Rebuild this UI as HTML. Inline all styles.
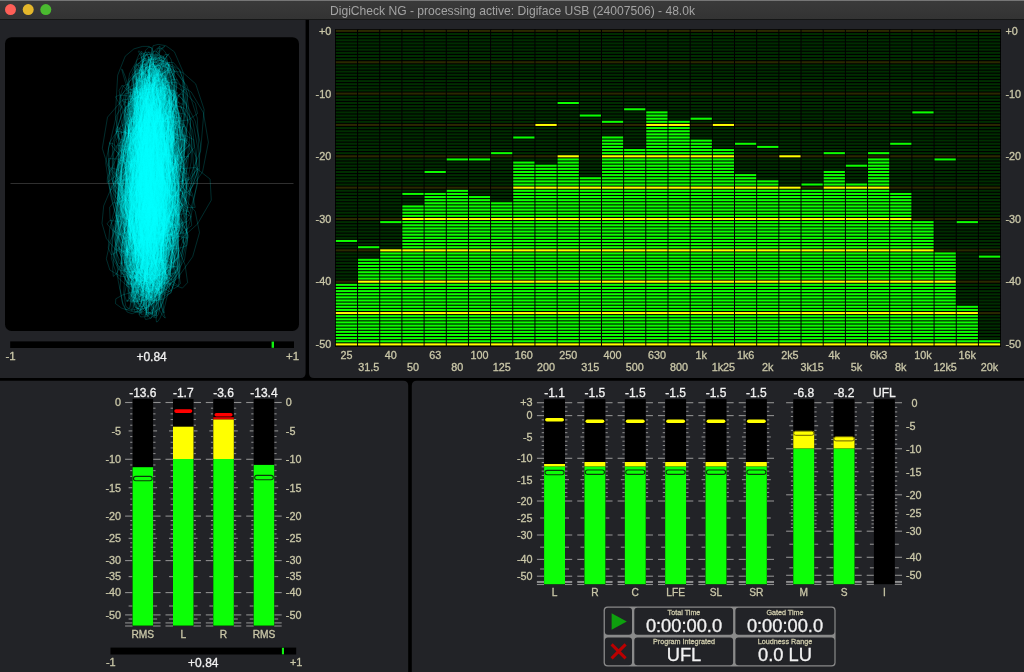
<!DOCTYPE html>
<html><head><meta charset="utf-8"><title>DigiCheck NG</title>
<style>html,body{margin:0;padding:0;background:#000;overflow:hidden;width:1024px;height:672px}svg{display:block;will-change:transform}</style>
</head><body>
<svg width="1024" height="672" viewBox="0 0 1024 672" font-family="Liberation Sans, sans-serif">
<rect x="0" y="0" width="1024" height="672" fill="#000"/>
<path d="M0 19H305.6V372.9Q305.6 377.9 300.6 377.9H0Z" fill="#222327"/>
<path d="M309 19H1024V377.9H314Q309 377.9 309 372.9Z" fill="#222327"/>
<path d="M0 380.8H403.2Q408.2 380.8 408.2 385.8V672H0Z" fill="#222327"/>
<path d="M416.8 380.8H1024V672H411.8V385.8Q411.8 380.8 416.8 380.8Z" fill="#222327"/>
<defs><linearGradient id="tb" x1="0" y1="0" x2="0" y2="1"><stop offset="0" stop-color="#3a3a3a"/><stop offset="1" stop-color="#333333"/></linearGradient></defs>
<rect x="0" y="0" width="1024" height="19.2" fill="url(#tb)"/>
<rect x="0" y="0" width="1024" height="1" fill="#767676"/>
<rect x="0" y="19" width="1024" height="0.9" fill="#151515"/>
<circle cx="10.5" cy="9.6" r="5.5" fill="#fe5f57"/>
<circle cx="28.2" cy="9.6" r="5.5" fill="#e4b72b"/>
<circle cx="45.8" cy="9.6" r="5.5" fill="#4aba2f"/>
<text x="512.5" y="14.7" font-size="12.1" fill="#a3a3a3" text-anchor="middle">DigiCheck NG - processing active: Digiface USB (24007506) - 48.0k</text>
<rect x="5.0" y="37.2" width="294" height="293.8" rx="6.5" fill="#000"/>
<rect x="10.5" y="183" width="283" height="0.9" fill="#353535"/>
<defs><radialGradient id="gg" cx="0.5" cy="0.5" r="0.5"><stop offset="0" stop-color="#00ffff" stop-opacity="0.3"/><stop offset="0.6" stop-color="#00e0e0" stop-opacity="0.15"/><stop offset="1" stop-color="#00c0c0" stop-opacity="0"/></radialGradient></defs>
<ellipse cx="151" cy="190" rx="30" ry="130" fill="url(#gg)"/>
<g fill="none" stroke="#00ffff" stroke-width="0.7" stroke-opacity="0.25" stroke-linejoin="round">
<path d="M129.4 198.6 137.6 145.2 146.7 104.8 151.1 85.3 150.1 81.4 144.0 90.8 133.5 115.7 122.8 155.6 119.5 197.3 125.6 224.6 136.9 232.4"/>
<path d="M136.9 232.4 149.7 221.7 159.5 195.7 161.6 162.9 154.8 136.3 143.1 124.0 130.7 128.3 121.6 150.3 121.0 188.5 130.8 231.1 144.4 263.1"/>
<path d="M144.4 263.1 155.1 280.2 161.0 285.7 161.8 282.1 158.3 270.3 152.2 251.3 147.3 229.8 147.3 213.3 152.9 206.9 161.3 210.6 167.8 219.8"/>
<path d="M167.8 219.8 168.8 228.1 163.8 229.4 154.4 219.4 144.1 195.5 138.1 159.7 140.2 122.4 147.8 95.0 156.1 80.3 161.9 76.2 163.1 81.7"/>
<path d="M163.1 81.7 157.6 99.5 144.1 134.2 126.4 182.9 115.3 229.2 115.0 259.6 122.1 274.1 133.1 276.8 145.2 270.2 155.4 254.4 160.4 230.1"/>
<path d="M160.4 230.1 157.8 201.3 149.4 173.8 140.5 152.1 135.4 136.8 136.0 126.6 141.3 119.2 148.9 113.0 155.7 107.0 159.7 101.2 160.8 96.3"/>
<path d="M160.8 96.3 160.3 93.0 160.3 92.1 162.1 94.1 166.2 99.3 171.4 108.0 175.6 119.4 175.9 132.2 171.0 144.3 161.5 153.7 149.9 159.4"/>
<path d="M149.9 159.4 139.5 161.6 132.7 161.5 130.0 161.2 130.3 162.7 131.5 168.1 132.0 178.6 131.4 194.0 130.6 212.7 131.7 231.4 135.9 246.8"/>
<path d="M135.9 246.8 142.9 256.5 151.8 259.2 160.9 254.0 168.5 239.1 172.3 213.2 170.6 178.3 164.7 142.1 158.7 113.4 155.9 95.8 156.8 88.2"/>
<path d="M156.8 88.2 161.1 89.1 167.4 98.3 173.8 116.8 177.5 143.5 175.6 173.1 168.5 197.6 159.1 212.1 150.1 215.5 142.9 209.7 137.9 198.3"/>
<path d="M137.9 198.3 134.7 186.6 132.8 180.4 131.6 184.2 131.6 200.0 134.3 225.3 140.3 253.1 148.4 275.3 156.9 288.5 164.8 293.4 171.5 290.4"/>
<path d="M171.5 290.4 176.4 277.1 178.2 247.6 174.0 198.8 163.8 143.9 154.5 103.7 149.4 82.9 147.7 75.8 147.8 79.0 148.4 93.8 148.0 125.0"/>
<path d="M148.0 125.0 145.2 173.1 141.2 224.7 138.2 262.7 137.3 283.8 138.4 293.3 141.5 295.6 146.0 292.4 150.8 283.9 155.0 269.8 157.0 250.8"/>
<path d="M157.0 250.8 156.4 229.4 154.2 209.6 152.3 194.4 152.6 184.9 155.7 180.5 160.9 179.8 166.7 180.8 171.5 181.8 174.3 181.3 174.8 178.8"/>
<path d="M174.8 178.8 173.8 174.4 172.2 169.0 170.7 163.8 169.5 160.1 168.1 158.6 166.0 159.5 162.7 161.8 158.8 163.9 155.0 163.7 152.5 159.3"/>
<path d="M152.5 159.3 151.8 149.6 152.5 135.4 153.3 119.1 152.7 104.2 149.9 93.5 145.1 88.4 138.7 89.4 131.9 97.8 126.3 115.2 124.4 142.5"/>
<path d="M124.4 142.5 128.0 175.9 136.1 207.0 144.7 228.9 150.8 239.6 153.2 240.5 152.2 233.9 148.9 223.0 145.4 212.7 144.0 208.1 145.7 212.7"/>
<path d="M145.7 212.7 150.0 226.6 154.8 246.2 157.8 265.5 157.8 280.1 155.1 288.6 150.0 291.6 143.3 289.8 135.5 283.6 127.6 273.9 120.9 262.8"/>
<path d="M120.9 262.8 116.7 253.5 115.9 248.8 118.6 249.0 124.0 251.5 131.2 252.7 139.1 248.6 146.9 235.8 153.3 211.3 156.8 176.6 156.2 140.1"/>
<path d="M156.2 140.1 152.7 112.3 148.6 97.6 145.2 95.3 143.4 105.7 143.9 131.1 146.7 170.7 150.2 213.1 151.6 243.6 150.1 257.3 146.1 255.2"/>
<path d="M146.1 255.2 140.8 237.2 136.6 203.2 137.2 161.0 143.2 125.8 151.7 105.7 160.0 100.0 166.3 106.8 168.6 125.4 164.7 152.8 155.0 180.1"/>
<path d="M155.0 180.1 143.9 196.9 135.5 197.3 132.6 180.1 136.6 148.8 145.1 114.3 153.3 88.2 158.4 73.5 160.5 67.6 160.0 68.3 158.2 75.3"/>
<path d="M158.2 75.3 156.5 89.4 156.3 109.9 158.6 131.4 162.6 146.1 166.2 148.4 166.7 138.4 163.1 120.6 156.7 102.0 150.0 87.9 145.1 80.0"/>
<path d="M145.1 80.0 143.1 78.1 144.2 81.6 148.2 90.8 154.1 105.2 159.8 123.0 162.9 139.8 162.1 151.6 157.9 156.4 152.3 155.0 147.2 150.1"/>
<path d="M147.2 150.1 143.9 145.5 142.7 144.5 143.1 149.6 144.2 162.3 145.4 182.4 146.3 207.5 146.9 232.6 147.4 253.2 147.9 267.3 148.0 274.7"/>
<path d="M148.0 274.7 147.7 276.4 146.5 272.8 144.5 263.9 142.3 249.7 140.8 231.1 141.5 210.7 145.1 192.1 150.7 178.4 156.6 171.6 160.7 172.6"/>
<path d="M160.7 172.6 161.1 181.4 157.1 197.0 149.5 217.4 141.1 238.9 135.3 258.1 133.9 272.8 137.2 282.5 144.2 287.7 153.7 289.2 163.7 287.3"/>
<path d="M163.7 287.3 172.4 282.2 177.8 274.2 178.2 264.1 173.5 253.6 165.2 244.7 156.4 239.0 150.6 236.8 149.9 237.2 154.4 238.4 162.5 238.2"/>
<path d="M162.5 238.2 171.4 234.7 177.8 226.8 178.9 214.2 172.9 198.3 160.6 182.2 145.3 169.9 131.5 164.9 122.4 168.8 120.3 181.9 125.2 201.7"/>
<path d="M125.2 201.7 134.7 223.0 144.2 239.7 150.6 247.8 152.9 244.8 151.5 228.2 148.1 195.9 146.2 152.3 148.3 111.2 153.4 83.6 159.3 69.4"/>
<path d="M159.3 69.4 164.6 64.0 167.8 64.9 168.1 71.9 164.6 87.0 157.4 111.6 148.1 142.5 140.9 171.6 137.9 191.9 138.3 202.0 139.1 204.3"/>
<path d="M139.1 204.3 137.6 202.5 132.6 200.2 125.1 199.9 118.6 201.5 117.2 203.0 123.8 200.3 138.5 189.4 158.3 167.4 176.2 136.2 184.5 104.2"/>
<path d="M184.5 104.2 182.4 80.5 174.4 67.5 164.3 63.2 154.9 66.4 148.0 81.3 145.6 118.7 150.1 184.8 157.1 250.3 160.0 286.5 158.5 299.8"/>
<path d="M158.5 299.8 153.2 300.3 145.0 288.4 135.2 254.8 129.8 192.0 137.1 126.0 150.3 87.5 162.4 73.0 171.7 72.5 176.7 84.5 175.0 113.6"/>
<path d="M175.0 113.6 163.8 160.8 148.1 209.7 138.3 242.3 137.5 255.8 144.6 254.7 156.6 242.7 168.4 224.3 173.0 207.0 166.4 198.6 150.2 202.9"/>
<path d="M150.2 202.9 130.7 218.6 116.4 239.8 112.7 258.5 119.0 269.9 131.6 272.4 146.6 265.4 159.9 247.1 166.1 216.5 160.8 178.6 146.2 143.4"/>
<path d="M146.2 143.4 130.4 118.2 119.3 103.6 115.5 96.8 119.3 95.0 129.7 96.1 143.7 98.6 157.4 101.6 167.6 105.4 172.6 111.0 173.0 120.2"/>
<path d="M173.0 120.2 170.2 134.9 166.0 155.8 162.0 181.4 159.0 207.0 156.6 227.5 154.1 239.9 150.7 243.9 146.2 240.3 141.0 231.0 136.4 219.3"/>
<path d="M136.4 219.3 133.8 209.5 134.1 205.6 137.2 209.3 142.3 219.4 147.7 232.1 151.8 242.8 154.0 247.6 154.1 244.4 152.7 231.4 150.5 208.6"/>
<path d="M150.5 208.6 149.0 179.0 149.8 150.1 153.3 128.6 158.9 116.9 165.8 114.6 172.7 120.2 177.8 132.3 179.1 148.3 175.1 165.1 166.5 180.4"/>
<path d="M166.5 180.4 155.3 193.7 144.4 206.6 136.0 221.3 131.7 239.1 131.6 258.7 134.1 277.0 137.2 290.8 139.6 299.2 141.1 302.5 141.7 301.0"/>
<path d="M141.7 301.0 141.8 293.5 141.8 277.1 142.0 249.0 142.6 212.8 143.1 180.3 142.5 161.9 140.6 160.4 137.8 174.4 135.6 199.6 134.9 227.3"/>
<path d="M134.9 227.3 135.5 248.8 135.8 260.3 134.5 261.6 130.4 253.2 123.2 235.5 114.7 210.6 108.8 183.9 109.1 161.3 116.7 145.3 130.5 135.2"/>
<path d="M130.5 135.2 147.5 128.2 163.5 121.4 173.9 112.8 175.9 102.3 170.1 91.3 159.9 82.0 149.6 75.8 142.4 73.1 140.4 74.0 144.3 78.3"/>
<path d="M144.3 78.3 153.3 85.5 165.1 94.1 176.1 101.3 182.9 104.5 184.4 103.1 182.0 99.0 178.7 95.5 176.8 96.0 177.3 103.5 179.6 121.4"/>
<path d="M179.6 121.4 181.4 152.1 179.1 191.4 172.2 227.9 164.2 251.6 158.7 261.2 157.7 257.9 162.4 242.6 172.8 217.5 185.5 190.2 195.2 171.4"/>
<path d="M195.2 171.4 198.6 168.4 193.6 183.0 179.7 211.8 161.0 243.9 144.7 267.5 133.9 278.3 128.2 276.3 126.7 258.8 130.0 219.2 138.8 161.4"/>
<path d="M138.8 161.4 148.2 110.3 153.7 81.6 156.0 70.3 156.8 69.7 157.0 77.8 157.0 96.0 156.6 122.2 155.4 146.6 153.1 157.2 149.7 149.1"/>
<path d="M149.7 149.1 145.9 126.3 143.0 100.2 141.6 81.2 141.2 72.2 141.3 72.3 141.3 83.4 140.8 112.6 139.7 166.3 139.3 228.9 139.1 272.7"/>
<path d="M139.1 272.7 138.5 293.9 137.5 301.8 136.2 302.6 134.9 298.3 133.7 289.6 132.9 277.8 133.1 266.0 134.8 258.0 138.1 255.2 142.8 256.2"/>
<path d="M142.8 256.2 148.2 257.9 153.6 257.8 157.9 254.0 160.4 246.1 160.2 234.9 157.0 223.2 151.8 214.1 146.1 210.1 142.0 211.6 140.8 216.6"/>
<path d="M140.8 216.6 142.9 221.6 147.8 223.0 154.1 217.7 160.2 204.4 164.2 183.4 164.3 158.9 160.2 136.9 153.1 122.1 144.7 116.3 136.0 119.9"/>
<path d="M136.0 119.9 128.3 132.5 123.5 152.7 123.2 176.2 127.7 196.9 135.2 210.1 143.5 213.9 151.0 208.6 156.5 196.4 159.5 180.6 160.1 165.7"/>
<path d="M160.1 165.7 159.4 155.3 158.4 151.3 157.7 154.3 157.3 163.6 156.4 177.9 154.4 195.0 151.1 212.5 147.0 228.1 143.3 240.5 141.3 249.1"/>
<path d="M141.3 249.1 141.8 253.5 144.7 253.1 149.5 247.1 155.1 234.3 159.9 213.7 162.3 186.4 162.1 157.1 160.4 132.3 159.6 116.2 161.0 110.2"/>
<path d="M161.0 110.2 165.1 114.6 171.3 130.1 177.3 156.6 179.3 188.7 175.3 216.8 166.8 232.9 156.5 234.1 146.6 218.5 139.8 185.1 139.2 140.8"/>
<path d="M139.2 140.8 144.4 101.6 151.1 77.3 156.7 65.8 160.6 62.7 162.5 66.1 162.5 77.9 161.1 102.2 158.8 141.3 156.9 186.1 156.3 222.3"/>
<path d="M156.3 222.3 156.8 243.6 157.4 251.8 156.9 250.4 154.9 242.1 151.5 229.4 147.7 215.6 144.5 203.3 142.2 193.8 140.1 187.1 137.0 182.1"/>
<path d="M137.0 182.1 131.8 177.7 124.8 173.4 117.3 169.7 111.7 167.8 110.0 169.4 113.7 175.9 122.0 187.8 132.7 203.9 142.1 221.5 147.4 237.0"/>
<path d="M147.4 237.0 147.7 247.5 144.7 251.8 140.8 249.3 139.0 240.0 141.9 224.5 150.2 205.1 161.9 185.6 172.9 169.8 179.6 159.9 180.1 155.6"/>
<path d="M180.1 155.6 175.0 155.5 166.5 157.0 158.0 157.5 152.1 155.1 149.9 149.2 150.2 141.3 150.8 134.1 149.4 130.9 145.1 135.0 138.6 149.3"/>
<path d="M138.6 149.3 132.6 175.6 131.3 211.4 136.7 247.5 146.3 274.5 156.4 289.7 164.9 295.4 171.0 293.0 174.2 280.2 173.5 250.4 167.3 198.8"/>
<path d="M167.3 198.8 157.5 139.8 150.7 97.5 148.4 76.6 148.5 69.7 149.4 72.5 149.7 86.5 148.1 117.5 144.7 166.9 141.9 218.9 142.0 254.9"/>
<path d="M142.0 254.9 144.8 272.0 149.5 275.2 155.3 267.1 160.6 247.7 162.9 219.1 159.8 188.7 152.2 166.0 143.0 155.6 134.7 157.2 129.2 167.6"/>
<path d="M129.2 167.6 127.1 181.3 127.7 191.1 129.1 190.9 129.8 177.2 130.1 150.7 131.6 118.5 135.1 91.3 140.3 74.3 146.7 66.6 154.1 66.0"/>
<path d="M154.1 66.0 162.1 72.9 169.9 90.7 175.8 124.3 176.0 170.5 169.9 213.0 162.2 238.8 156.5 246.4 153.3 237.6 151.9 213.2 151.1 176.9"/>
<path d="M151.1 176.9 149.3 139.6 146.1 112.2 142.0 97.3 138.1 93.4 135.8 98.8 136.4 113.9 141.5 139.1 150.5 172.1 160.0 207.1 165.5 238.2"/>
<path d="M165.5 238.2 165.7 262.5 162.1 280.3 157.1 292.8 152.9 301.5 150.8 307.0 150.9 310.0 152.3 310.6 153.5 308.7 153.0 302.6 149.2 289.0"/>
<path d="M149.2 289.0 140.8 262.5 128.6 220.3 119.2 171.4 118.6 132.5 125.7 110.6 137.4 103.8 152.1 109.6 168.0 127.3 181.4 155.7 187.1 188.4"/>
<path d="M187.1 188.4 183.6 216.0 174.5 232.6 164.1 237.4 155.3 231.3 149.6 216.1 147.7 195.3 149.1 174.2 151.5 158.3 152.9 150.4 152.3 150.5"/>
<path d="M152.3 150.5 149.7 157.2 146.1 167.3 143.3 176.8 142.6 181.5 144.2 178.5 147.6 167.0 151.4 148.6 153.9 127.8 154.4 109.5 153.5 97.1"/>
<path d="M153.5 97.1 152.2 91.6 151.9 93.1 153.6 102.3 158.2 120.2 165.6 146.6 173.5 176.7 178.4 203.0 178.3 219.9 173.3 225.4 164.1 219.8"/>
<path d="M164.1 219.8 152.1 204.5 140.3 182.4 132.4 159.2 130.3 140.7 133.3 130.1 139.3 128.1 145.5 134.2 149.7 146.9 150.0 163.1 146.3 178.8"/>
<path d="M146.3 178.8 140.4 190.0 135.3 194.7 133.7 193.2 136.7 187.8 143.8 181.9 152.5 179.3 159.4 182.5 161.8 192.3 158.8 206.7 152.0 221.7"/>
<path d="M152.0 221.7 144.7 232.5 140.0 235.3 140.1 227.6 146.0 207.7 156.7 176.9 167.9 142.5 174.9 114.4 176.7 97.8 174.6 92.6 170.2 98.0"/>
<path d="M170.2 98.0 164.4 115.5 158.0 145.9 152.5 184.0 148.8 218.2 146.2 240.1 143.2 248.7 139.2 246.1 134.4 234.7 130.7 218.1 130.5 202.3"/>
<path d="M130.5 202.3 135.0 192.9 143.0 192.9 151.8 201.7 157.5 215.4 157.3 228.4 151.0 235.8 140.3 234.9 128.5 224.1 120.1 204.3 119.8 179.1"/>
<path d="M119.8 179.1 128.9 155.5 143.7 139.5 158.9 133.6 170.0 137.6 173.7 149.8 168.7 166.6 157.0 182.7 144.1 193.3 135.3 195.9 133.9 191.3"/>
<path d="M133.9 191.3 139.9 183.0 150.4 175.8 160.4 174.9 165.4 183.2 163.1 200.9 154.8 223.6 145.1 244.2 138.7 256.5 138.0 257.6 143.7 244.4"/>
<path d="M143.7 244.4 155.8 212.3 170.0 162.4 176.9 112.1 174.8 79.3 168.2 63.8 159.6 58.5 150.4 59.9 142.1 69.0 135.4 92.1 132.7 137.6"/>
<path d="M132.7 137.6 137.0 199.1 144.5 251.1 148.9 281.3 149.4 295.3 146.8 300.4 142.2 299.9 137.1 294.3 132.6 282.1 130.0 260.5 130.7 227.6"/>
<path d="M130.7 227.6 134.9 186.9 140.2 148.5 143.9 121.5 145.2 108.8 144.9 110.7 144.7 130.3 146.5 172.7 151.7 231.6 157.3 280.3 161.4 305.4"/>
<path d="M161.4 305.4 164.3 315.1 165.3 318.0 163.8 317.0 159.9 310.9 154.0 292.5 145.6 248.0 137.0 180.1 135.1 124.4 138.0 97.1 142.6 89.8"/>
<path d="M142.6 89.8 147.8 95.2 152.7 109.8 155.8 127.6 156.1 138.9 154.0 135.9 151.1 118.6 149.4 95.9 149.4 78.0 150.6 69.0 152.3 69.1"/>
<path d="M152.3 69.1 153.8 81.1 154.2 115.7 151.8 182.8 147.1 253.4 143.3 291.9 140.7 305.5 138.9 306.8 137.9 297.5 138.0 267.8 141.1 204.2"/>
<path d="M141.1 204.2 148.1 130.9 154.3 87.8 158.7 72.0 162.7 71.0 166.7 82.1 170.5 108.3 171.6 148.5 167.4 187.5 159.3 209.6 149.9 211.1"/>
<path d="M149.9 211.1 140.9 194.6 135.2 167.1 135.1 140.0 140.1 122.9 147.8 119.1 156.0 128.7 162.2 150.6 163.1 179.6 157.7 205.5 149.0 219.9"/>
<path d="M149.0 219.9 140.8 220.0 136.9 206.1 140.1 181.7 150.4 154.9 163.6 134.5 174.5 125.2 180.0 127.3 177.8 139.9 167.4 159.1 152.2 178.1"/>
<path d="M152.2 178.1 138.7 188.9 132.0 186.6 134.5 170.2 144.4 143.8 156.0 116.1 163.1 95.8 163.9 85.3 159.0 84.3 149.9 93.3 139.2 115.4"/>
<path d="M139.2 115.4 131.6 153.1 133.5 200.0 144.3 241.5 157.0 269.0 166.5 283.9 170.8 290.5 169.4 291.5 163.2 288.2 154.3 280.2 145.4 266.4"/>
<path d="M145.4 266.4 139.6 244.8 138.6 214.2 141.9 176.7 145.9 139.5 147.1 110.5 144.8 92.9 140.7 85.9 136.6 88.8 134.8 103.6 137.6 135.0"/>
<path d="M137.6 135.0 146.5 182.7 157.1 232.0 163.0 265.9 163.7 282.2 160.7 285.2 155.8 276.4 150.9 251.9 149.2 208.4 153.1 155.4 159.8 112.7"/>
<path d="M159.8 112.7 164.6 88.0 165.3 76.8 160.9 73.8 151.4 76.0 138.8 81.6 126.8 89.0 120.4 96.0 122.9 101.3 133.6 105.3 148.5 109.9"/>
<path d="M148.5 109.9 162.5 118.2 171.3 133.6 172.2 158.8 165.3 192.9 155.1 229.0 148.1 258.4 146.8 277.1 150.0 286.4 155.7 288.6 161.6 285.2"/>
<path d="M161.6 285.2 165.6 276.5 166.3 263.7 163.5 249.2 159.2 236.4 156.1 228.1 155.6 224.4 157.4 223.5 159.2 222.3 158.8 217.9 154.9 208.1"/>
<path d="M154.9 208.1 148.2 192.5 141.1 172.9 137.0 153.2 137.3 137.6 141.0 128.7 145.4 127.9 147.3 135.5 143.8 151.6 134.4 174.9 122.2 202.0"/>
<path d="M122.2 202.0 113.1 228.2 111.4 249.7 118.0 265.3 130.5 275.6 145.2 281.5 158.3 283.8 166.5 282.8 168.0 278.1 163.0 269.0 153.4 254.6"/>
<path d="M153.4 254.6 143.0 234.9 136.3 212.0 136.0 190.2 141.2 174.3 148.2 167.3 153.5 170.0 155.1 181.7 153.4 199.3 150.9 217.7 150.4 231.8"/>
<path d="M150.4 231.8 153.6 238.3 160.0 235.8 167.7 223.7 173.1 203.1 172.8 178.5 166.0 156.5 155.7 142.9 146.1 140.3 140.7 149.4 141.9 169.4"/>
<path d="M141.9 169.4 149.7 196.1 160.3 221.8 168.6 239.8 171.9 246.8 169.4 241.6 161.5 222.8 150.2 190.0 140.4 149.2 136.7 112.3 138.6 87.2"/>
<path d="M138.6 87.2 142.7 73.3 146.7 67.3 149.3 66.7 149.7 71.0 148.2 81.0 146.0 98.3 145.0 123.3 147.3 153.1 152.9 181.5 159.4 203.1"/>
<path d="M159.4 203.1 164.2 215.2 165.7 218.1 163.7 212.6 159.3 200.7 154.5 185.2 151.4 170.3 151.1 159.8 152.8 156.2 154.6 160.6 154.5 172.2"/>
<path d="M154.5 172.2 151.3 188.1 145.6 203.4 139.5 213.0 135.2 212.8 134.4 200.5 137.8 176.0 144.0 143.9 149.9 113.9 152.9 93.4 152.6 83.8"/>
<path d="M152.6 83.8 150.1 84.5 146.6 97.0 143.6 126.4 143.6 174.7 147.4 228.0 151.7 266.1 153.5 285.4 151.9 291.3 146.3 287.2 136.2 271.5"/>
<path d="M136.2 271.5 122.3 240.3 110.4 194.9 108.5 148.7 116.5 115.3 128.7 96.5 141.3 88.4 152.2 87.3 160.0 91.2 163.7 98.8 163.4 109.8"/>
<path d="M163.4 109.8 160.2 124.0 156.1 141.8 152.7 163.8 150.9 189.6 150.1 216.6 149.1 240.2 147.1 256.9 144.0 265.2 140.5 264.4 137.1 253.6"/>
<path d="M137.1 253.6 135.3 231.2 136.5 198.8 141.2 164.6 147.4 139.3 153.0 128.0 157.2 131.7 159.6 150.0 159.9 179.9 158.4 211.7 156.2 233.9"/>
<path d="M156.2 233.9 154.4 240.5 153.3 229.0 153.0 197.2 153.2 150.1 153.9 106.7 154.9 80.8 156.3 70.6 158.1 72.0 160.2 87.3 162.3 126.8"/>
<path d="M162.3 126.8 161.7 193.4 157.5 255.9 153.4 289.3 150.9 301.6 149.7 302.7 149.8 294.2 151.2 271.8 153.5 231.5 154.9 184.2 153.9 151.0"/>
<path d="M153.9 151.0 151.2 140.3 148.0 151.5 145.9 181.6 147.1 220.6 151.6 252.7 157.8 269.9 164.5 272.4 171.1 259.4 175.9 226.2 175.0 173.1"/>
<path d="M175.0 173.1 167.8 119.7 160.2 85.5 155.5 69.7 153.6 65.2 153.7 68.7 154.9 81.8 155.6 109.4 153.9 153.0 149.5 201.2 144.8 238.3"/>
<path d="M144.8 238.3 142.7 259.3 144.2 267.8 149.5 267.4 157.9 260.5 167.2 249.2 173.8 236.6 174.8 226.4 169.5 221.8 160.6 223.8 152.3 231.6"/>
<path d="M152.3 231.6 148.3 242.3 150.0 252.5 156.0 259.4 163.3 260.9 168.8 255.1 169.7 239.8 164.3 212.9 153.4 175.5 142.9 135.8 138.4 104.0"/>
<path d="M138.4 104.0 140.6 84.1 147.1 74.3 155.4 72.0 163.4 76.1 168.8 88.2 169.7 110.4 164.9 143.1 156.3 180.2 148.9 212.0 145.9 233.1"/>
<path d="M145.9 233.1 147.1 243.5 150.2 245.6 152.2 241.6 150.9 234.0 145.8 225.0 138.7 216.4 133.0 208.9 131.7 201.8 135.9 193.7 144.0 183.0"/>
<path d="M144.0 183.0 152.0 168.9 155.7 152.1 153.1 135.3 145.4 121.4 136.3 112.9 129.6 111.1 128.1 116.5 133.1 129.8 143.5 150.1 155.0 174.0"/>
<path d="M155.0 174.0 161.5 195.9 159.5 211.2 150.1 218.0 137.1 216.8 125.9 210.1 121.4 201.4 125.8 195.1 136.8 194.8 149.2 202.1 157.2 215.6"/>
<path d="M157.2 215.6 157.0 231.7 149.9 245.3 140.0 252.9 132.3 252.6 130.9 243.1 138.6 223.8 154.6 197.0 172.6 168.9 184.2 147.3 185.1 136.1"/>
<path d="M185.1 136.1 175.3 135.9 157.0 145.0 135.2 160.0 116.7 174.9 107.1 182.6 107.4 178.1 115.7 159.6 127.5 131.1 137.5 102.0 142.6 81.0"/>
<path d="M142.6 81.0 143.3 69.9 141.6 66.9 139.0 71.9 136.2 88.9 133.6 126.7 133.0 187.3 135.0 247.3 136.7 284.3 137.1 301.3 137.0 307.7"/>
<path d="M137.0 307.7 137.6 308.7 139.4 305.9 142.5 299.1 146.4 288.3 149.9 274.4 151.7 260.0 151.6 247.8 151.0 238.9 151.9 232.6 155.5 227.2"/>
<path d="M155.5 227.2 161.6 221.2 168.1 213.8 172.2 205.2 171.5 196.5 165.6 189.2 156.6 184.3 148.4 182.0 144.6 181.3 147.0 180.7 154.5 178.4"/>
<path d="M154.5 178.4 163.4 172.8 169.0 163.8 167.8 152.3 159.7 140.3 148.1 130.0 138.1 123.0 134.4 119.8 139.7 119.7 153.5 121.2 171.9 122.1"/>
<path d="M171.9 122.1 188.7 119.9 197.5 113.5 195.4 103.3 184.5 92.0 169.8 82.7 156.2 77.3 146.4 77.2 141.3 84.2 140.1 102.3 141.8 136.6"/>
<path d="M141.8 136.6 144.7 186.1 146.3 235.2 146.0 268.5 145.2 285.0 145.6 289.9 148.0 285.7 153.0 272.0 159.6 247.3 165.1 214.8 165.5 183.8"/>
<path d="M165.5 183.8 160.3 163.3 151.6 156.1 142.3 160.4 135.5 172.5 133.6 186.4 136.8 196.0 143.4 196.6 150.9 186.2 157.0 165.9 160.1 140.6"/>
<path d="M160.1 140.6 160.3 117.2 159.2 100.6 158.1 91.7 157.7 89.9 157.9 93.9 158.0 103.0 157.6 115.2 156.2 127.3 154.5 135.9 153.5 139.2"/>
<path d="M153.5 139.2 153.9 137.8 156.0 134.4 158.8 132.6 161.2 135.7 162.3 146.3 161.3 165.5 158.3 191.9 154.6 220.2 151.6 243.9 149.8 259.2"/>
<path d="M149.8 259.2 148.7 265.6 147.3 263.6 144.8 252.8 140.9 232.9 136.9 205.3 135.6 174.9 139.2 147.9 147.3 128.3 158.1 116.6 168.9 111.5"/>
<path d="M168.9 111.5 177.0 111.7 180.0 116.3 177.0 124.9 168.8 137.3 158.6 153.3 150.9 172.5 149.1 193.9 153.6 215.6 161.7 235.0 168.8 250.4"/>
<path d="M168.8 250.4 171.9 260.5 169.5 265.4 162.4 265.0 152.3 259.3 141.7 248.5 133.5 233.3 130.0 215.8 131.3 199.3 135.8 187.1 140.9 181.1"/>
<path d="M140.9 181.1 145.5 181.9 149.7 188.9 154.5 200.8 161.0 215.5 168.6 230.8 175.1 245.0 177.8 256.9 174.7 266.2 165.4 272.8 151.2 276.8"/>
<path d="M151.2 276.8 135.0 278.0 120.2 276.1 109.9 270.1 106.3 258.8 110.4 240.9 121.2 216.2 135.1 187.1 146.1 159.0 150.9 137.0 149.4 123.6"/>
<path d="M149.4 123.6 144.0 119.1 137.2 123.0 131.0 134.9 126.7 153.6 124.9 175.6 125.1 196.2 125.8 211.3 126.3 219.0 126.6 219.1 127.4 212.9"/>
<path d="M127.4 212.9 129.6 202.6 133.2 191.5 137.3 182.7 140.9 178.6 143.1 180.1 144.1 186.3 144.8 195.0 146.4 202.6 149.9 206.1 155.0 202.5"/>
<path d="M155.0 202.5 160.9 190.6 165.6 170.5 167.5 145.3 166.4 120.8 164.1 101.9 162.7 90.4 163.6 86.1 167.2 88.9 173.3 99.5 179.9 119.0"/>
<path d="M179.9 119.0 183.0 146.8 178.8 177.3 166.9 202.5 151.2 216.8 135.7 218.5 124.0 207.8 119.2 186.6 122.8 159.6 132.3 134.4 142.9 116.8"/>
<path d="M142.9 116.8 150.9 109.0 155.0 111.0 155.2 123.1 152.7 145.0 149.4 173.7 147.8 202.0 148.5 222.9 150.3 233.5 151.5 234.1 150.1 226.4"/>
<path d="M150.1 226.4 145.1 213.4 137.4 199.9 129.5 191.7 124.9 192.7 126.3 204.6 134.7 225.2 147.7 248.5 161.0 268.1 171.5 280.5 178.0 285.6"/>
<path d="M178.0 285.6 180.4 283.6 178.8 273.7 173.1 254.0 163.9 224.1 153.8 188.7 147.0 156.4 145.8 133.0 149.2 118.9 155.2 111.5 161.5 108.0"/>
<path d="M161.5 108.0 165.9 105.6 166.8 102.6 163.9 98.4 158.2 93.7 151.6 90.1 145.9 89.4 142.2 93.5 140.8 104.5 141.5 125.0 143.1 155.8"/>
<path d="M143.1 155.8 144.1 192.4 142.9 225.7 139.6 248.8 135.9 260.9 133.2 263.5 133.2 258.3 137.4 246.3 145.8 229.5 156.2 211.5 164.8 196.2"/>
<path d="M164.8 196.2 168.3 186.0 165.3 181.3 156.8 180.9 145.9 183.0 135.9 186.0 129.6 189.4 128.1 193.4 130.5 199.2 134.5 207.8 137.7 219.3"/>
<path d="M137.7 219.3 138.7 232.1 137.8 243.3 136.6 249.5 136.7 247.6 139.7 234.1 146.4 204.8 155.8 160.2 163.4 113.2 166.2 80.0 165.8 63.0"/>
<path d="M165.8 63.0 163.7 56.3 160.9 55.8 158.4 61.4 156.7 78.2 155.9 116.4 155.4 177.1 154.2 234.5 152.6 267.8 151.2 280.3 150.4 278.8"/>
<path d="M150.4 278.8 151.2 264.3 154.4 235.7 159.8 196.9 164.8 160.6 167.0 137.4 165.4 129.1 159.9 134.2 151.0 150.0 141.3 172.5 134.7 195.1"/>
<path d="M134.7 195.1 133.9 211.7 139.2 219.4 148.8 218.1 160.0 208.9 169.8 194.0 175.0 176.3 174.9 158.6 170.5 142.5 164.5 128.6 159.0 116.5"/>
<path d="M159.0 116.5 155.3 105.9 153.3 96.8 152.3 89.9 151.3 85.9 149.9 85.8 148.2 90.9 146.8 103.2 146.6 125.3 148.8 157.8 153.2 195.9"/>
<path d="M153.2 195.9 157.9 230.3 161.3 254.4 162.6 268.0 162.3 273.2 160.5 272.4 157.8 267.3 154.5 259.8 151.1 252.3 147.9 246.9 145.1 244.9"/>
<path d="M145.1 244.9 143.2 245.5 142.4 246.7 143.3 246.3 146.1 242.3 150.5 233.2 155.5 218.7 159.0 200.2 159.1 181.0 154.9 165.0 147.6 154.6"/>
<path d="M147.6 154.6 139.6 150.8 133.8 152.7 132.5 158.4 136.7 165.4 144.9 170.9 153.6 173.0 158.9 171.4 157.9 167.1 150.2 162.3 138.1 159.9"/>
<path d="M138.1 159.9 125.6 162.1 117.0 170.3 115.3 184.4 121.1 202.8 131.9 222.0 142.9 238.4 150.4 250.1 153.3 256.3 152.2 257.5 149.5 254.2"/>
<path d="M149.5 254.2 147.7 247.4 149.0 238.1 154.0 227.5 161.2 216.9 167.6 207.0 170.5 198.3 168.6 191.2 162.9 186.0 156.3 183.5 151.7 184.4"/>
<path d="M151.7 184.4 151.2 189.6 154.6 199.1 159.6 211.8 162.7 225.5 161.3 236.8 154.8 243.1 144.3 242.0 132.1 231.6 121.6 210.2 117.4 179.0"/>
<path d="M117.4 179.0 122.1 144.6 133.1 116.3 145.0 99.1 154.9 93.1 161.8 98.2 165.2 116.3 164.7 150.2 160.4 195.6 155.3 237.9 152.1 265.7"/>
<path d="M152.1 265.7 151.5 278.6 152.5 280.1 154.0 270.9 155.0 249.3 154.0 214.9 150.4 175.2 145.7 142.5 141.7 123.6 139.4 118.8 139.4 127.1"/>
<path d="M139.4 127.1 142.3 148.5 148.0 181.0 154.5 217.2 158.8 247.9 159.4 268.4 156.5 279.4 150.9 283.0 143.2 280.5 134.7 271.8 127.6 256.3"/>
<path d="M127.6 256.3 124.5 233.9 128.0 206.6 138.0 178.8 150.9 155.2 162.1 138.0 168.8 127.5 169.9 122.4 165.9 121.0 158.6 121.2 150.8 120.8"/>
<path d="M150.8 120.8 145.0 117.6 142.6 110.4 143.1 99.8 144.6 87.9 145.3 77.3 144.0 69.6 141.1 65.6 137.5 65.3 134.7 69.5 134.0 80.1"/>
<path d="M134.0 80.1 137.0 100.3 144.9 131.8 156.2 169.7 165.7 202.9 169.8 223.2 168.5 228.9 163.2 220.8 156.0 200.2 149.8 171.0 147.6 141.1"/>
<path d="M147.6 141.1 149.8 117.4 154.7 102.6 160.1 95.4 164.6 93.8 167.0 95.5 167.1 98.0 165.4 98.6 163.0 95.4 161.0 88.5 159.5 79.7"/>
<path d="M159.5 79.7 158.1 71.7 156.0 66.3 152.6 64.2 147.8 66.0 141.8 73.0 135.1 88.6 129.3 116.8 127.7 158.1 133.0 203.2 142.4 239.7"/>
<path d="M142.4 239.7 151.5 262.9 158.5 275.5 163.0 281.3 165.0 283.4 165.1 284.4 164.2 286.1 163.2 289.8 162.6 295.4 162.8 301.6 163.5 307.1"/>
<path d="M163.5 307.1 164.1 311.0 164.3 312.9 163.9 312.9 162.6 310.5 160.7 304.4 158.2 291.8 154.8 268.7 150.0 233.4 144.3 191.9 139.4 155.5"/>
<path d="M139.4 155.5 135.7 131.1 132.7 118.8 129.9 116.4 126.8 122.1 123.2 134.5 119.6 151.6 116.7 170.1 115.2 186.3 115.5 197.1 118.2 200.4"/>
<path d="M118.2 200.4 123.6 195.7 132.0 182.8 142.9 163.3 154.7 140.4 165.0 119.0 172.2 102.8 176.2 93.6 177.3 92.1 175.9 99.6 171.8 119.8"/>
<path d="M171.8 119.8 164.3 157.2 154.4 208.5 146.4 256.6 143.0 287.4 143.1 302.4 145.3 307.7 148.5 306.9 152.0 298.8 154.9 277.6 155.2 234.5"/>
<path d="M155.2 234.5 150.8 174.6 144.0 124.1 138.9 96.8 136.4 88.2 137.5 93.4 143.2 112.7 154.2 145.9 167.1 184.3 175.5 213.0 176.9 223.7"/>
<path d="M176.9 223.7 171.4 214.8 159.7 187.2 145.5 148.5 136.0 114.1 133.7 94.2 137.1 89.5 144.9 100.9 156.2 135.6 166.5 197.7 167.0 261.3"/>
<path d="M167.0 261.3 160.4 297.5 152.9 311.9 145.8 316.6 140.6 317.0 138.9 314.1 141.5 306.3 149.0 291.4 160.1 269.9 170.6 248.8 174.7 236.3"/>
<path d="M174.7 236.3 170.6 234.2 160.4 237.9 148.2 240.3 137.9 234.5 131.9 214.7 132.2 177.4 138.6 130.0 146.2 90.3 150.6 67.5 151.5 57.3"/>
<path d="M151.5 57.3 149.7 54.1 146.4 55.2 142.5 60.9 139.3 72.6 138.4 90.6 141.6 110.1 148.7 122.8 157.5 123.8 165.0 115.2 169.7 103.0"/>
<path d="M169.7 103.0 171.4 93.7 171.0 90.6 169.0 95.7 165.4 111.0 159.6 137.3 152.0 170.5 144.4 200.3 139.1 218.5 136.7 223.0 137.4 215.8"/>
<path d="M137.4 215.8 141.0 201.2 145.8 186.5 149.4 179.8 149.9 186.6 146.6 208.0 141.1 238.4 137.0 266.7 136.2 284.9 139.2 292.5 145.9 290.8"/>
<path d="M145.9 290.8 155.9 277.6 168.0 247.0 176.1 197.2 171.8 145.3 157.7 111.3 140.1 97.6 122.3 100.0 107.5 117.2 102.3 148.3 113.4 184.0"/>
<path d="M113.4 184.0 137.0 209.7 163.6 216.9 186.2 203.3 197.7 170.8 192.5 130.2 176.5 98.1 160.1 81.3 147.8 77.6 141.0 86.7 140.6 114.1"/>
<path d="M140.6 114.1 147.9 165.6 158.2 226.4 162.7 268.7 160.9 288.1 154.7 292.5 145.8 285.5 136.0 264.1 129.2 225.0 131.2 176.7 141.0 138.1"/>
<path d="M141.0 138.1 151.6 118.3 158.5 115.4 159.5 126.5 153.5 149.1 142.6 176.8 132.7 199.8 128.9 211.0 133.3 208.1 145.0 192.1 159.9 167.3"/>
<path d="M159.9 167.3 171.5 142.0 175.0 123.9 170.6 116.9 160.6 122.0 148.1 140.3 137.9 170.8 135.6 206.4 142.3 236.0 153.4 253.0 164.9 256.4"/>
<path d="M164.9 256.4 173.6 246.0 176.5 220.2 170.6 180.6 158.0 138.6 145.9 107.5 138.3 91.1 135.2 87.0 135.7 93.7 138.7 112.3 143.0 143.1"/>
<path d="M143.0 143.1 146.5 178.5 147.7 205.5 146.8 215.3 145.7 204.7 146.4 173.3 149.6 129.2 153.8 91.0 156.6 68.9 157.5 59.7 156.3 58.6"/>
<path d="M156.3 58.6 152.7 65.7 146.0 88.7 135.8 142.9 128.8 221.1 130.4 277.8 134.6 302.5 139.0 310.7 143.5 311.6 147.8 307.1 151.6 295.4"/>
<path d="M151.6 295.4 154.5 273.5 155.5 244.1 153.9 217.6 150.3 202.9 146.1 200.9 142.7 206.3 141.2 211.3 142.6 208.8 147.5 194.1 155.9 167.1"/>
<path d="M155.9 167.1 165.7 134.7 173.8 108.2 179.3 94.3 182.7 94.1 184.0 111.0 180.9 153.1 169.5 217.4 155.4 272.6 146.1 300.4 140.7 310.5"/>
<path d="M140.7 310.5 137.6 312.1 136.0 307.2 135.4 290.9 136.1 253.0 140.0 194.8 146.4 144.0 152.3 118.9 157.6 117.0 162.8 134.8 167.0 169.2"/>
<path d="M167.0 169.2 168.1 208.5 165.4 237.2 160.6 249.1 154.6 244.8 147.7 225.3 141.5 194.6 138.4 163.5 139.3 143.7 143.0 140.3 148.4 154.2"/>
<path d="M148.4 154.2 153.7 183.7 156.4 219.7 155.3 249.2 151.2 265.5 145.4 268.8 138.7 259.9 132.4 238.2 128.9 205.9 130.7 172.0 136.8 146.8"/>
<path d="M136.8 146.8 144.6 134.1 152.2 132.3 158.2 137.4 161.8 144.1 162.7 146.5 161.6 140.5 160.0 126.4 159.2 108.8 159.8 93.9 161.5 85.7"/>
<path d="M161.5 85.7 163.8 85.5 165.6 95.2 165.8 118.4 162.3 156.6 154.8 200.8 146.6 235.3 140.8 253.2 138.2 255.7 139.3 244.8 144.3 222.5"/>
<path d="M144.3 222.5 152.1 194.7 159.7 171.8 164.1 161.6 164.4 166.5 160.8 184.8 154.9 210.5 149.6 234.0 147.0 248.5 147.5 251.7 150.4 244.0"/>
<path d="M150.4 244.0 153.8 227.1 155.2 206.1 152.2 189.9 144.6 186.7 134.0 199.8 124.7 226.1 121.0 255.3 123.8 276.7 130.5 286.4 139.9 284.4"/>
<path d="M139.9 284.4 151.4 266.9 164.5 223.6 173.1 155.3 170.9 96.5 164.5 67.4 158.5 57.1 153.4 55.9 150.0 62.2 148.3 81.5 148.9 123.3"/>
<path d="M148.9 123.3 151.4 181.3 153.2 227.0 152.2 246.8 148.3 243.1 141.5 217.2 133.8 172.0 129.7 124.1 130.4 91.2 133.3 74.8 137.1 69.2"/>
<path d="M137.1 69.2 141.2 70.5 145.1 77.2 148.3 88.2 150.5 100.4 151.6 109.0 152.4 110.9 153.6 106.6 155.8 99.7 158.6 94.5 161.8 94.4"/>
<path d="M161.8 94.4 164.8 102.0 166.9 120.6 167.2 153.2 164.6 196.4 159.7 238.3 155.1 268.1 151.9 284.7 150.0 291.7 148.9 291.9 148.1 285.8"/>
<path d="M148.1 285.8 147.2 272.6 146.2 250.8 145.3 221.5 145.3 189.6 146.9 162.0 149.9 143.1 154.0 134.5 158.6 136.2 162.9 148.8 165.9 172.3"/>
<path d="M165.9 172.3 166.1 204.1 163.4 237.2 159.0 264.0 154.7 281.1 151.2 289.6 148.6 291.1 146.9 285.7 146.0 271.8 146.2 246.8 148.0 211.7"/>
<path d="M148.0 211.7 151.2 174.0 155.2 143.5 159.0 124.7 161.9 116.6 162.9 116.7 161.2 122.7 155.9 132.1 147.0 142.0 136.2 150.1 126.0 155.4"/>
<path d="M126.0 155.4 119.4 158.5 118.2 161.3 123.2 165.8 133.1 173.6 145.3 185.0 156.2 198.7 162.6 211.8 162.9 221.4 157.8 225.3 149.5 222.1"/>
<path d="M149.5 222.1 140.9 211.8 135.1 195.6 134.4 176.4 139.3 158.3 147.7 144.4 156.5 136.0 163.2 132.5 166.1 132.5 164.8 133.8 160.2 134.7"/>
<path d="M160.2 134.7 154.4 134.0 149.6 132.0 147.5 130.6 148.5 132.2 152.1 139.9 157.1 156.1 161.8 181.5 164.3 212.5 164.0 241.3 161.8 261.1"/>
<path d="M161.8 261.1 159.0 269.8 156.3 266.7 153.6 249.3 150.4 213.1 146.9 161.5 144.3 113.6 142.9 84.2 142.2 71.3 141.9 69.5 142.3 77.8"/>
<path d="M142.3 77.8 143.5 101.2 146.0 145.8 149.3 202.6 150.8 247.3 150.0 270.1 147.3 275.5 143.2 266.5 138.5 241.9 135.3 202.6 136.3 160.8"/>
<path d="M136.3 160.8 141.0 132.3 147.0 122.9 152.6 133.5 156.3 166.3 155.8 217.3 151.2 265.9 146.0 295.4 142.0 308.8 139.7 313.8 139.6 314.4"/>
<path d="M139.6 314.4 142.0 311.4 146.7 303.6 153.0 288.9 159.2 267.4 161.9 245.2 158.7 230.9 150.3 229.2 140.1 238.6 131.9 253.3 128.3 266.9"/>
<path d="M128.3 266.9 129.5 275.1 134.3 276.6 141.5 270.5 150.0 255.2 158.2 230.4 164.1 199.6 166.3 170.9 166.1 151.2 165.6 142.9 166.3 144.9"/>
<path d="M166.3 144.9 168.8 154.3 172.3 166.9 175.3 177.1 176.5 180.2 175.3 174.1 171.8 159.5 167.3 140.8 163.5 124.0 161.9 113.7 163.0 112.1"/>
<path d="M163.0 112.1 166.0 120.2 169.7 138.3 171.8 163.0 170.1 186.3 164.6 198.4 156.8 192.6 148.3 165.7 142.2 123.0 141.0 83.3 142.8 60.2"/>
<path d="M142.8 60.2 145.5 50.4 148.6 47.2 151.5 47.7 153.4 52.9 153.4 71.3 149.8 125.3 142.2 215.7 136.9 279.8 134.0 304.0 131.9 310.3"/>
<path d="M131.9 310.3 130.9 307.8 131.0 293.8 133.2 254.7 140.8 182.4 150.6 113.2 155.9 77.2 157.3 63.7 155.8 60.9 152.2 64.6 147.1 74.8"/>
<path d="M147.1 74.8 141.4 91.6 137.4 111.2 137.3 125.7 141.1 129.5 146.7 122.6 151.5 109.9 153.7 97.4 153.0 89.4 150.4 87.5 147.5 92.4"/>
<path d="M147.5 92.4 146.0 105.1 147.7 126.0 153.4 152.7 161.4 179.3 168.2 200.1 170.6 212.8 167.5 218.5 159.4 220.0 148.7 220.8 139.1 224.1"/>
<path d="M139.1 224.1 134.1 231.6 135.2 243.1 141.4 256.0 149.4 267.1 155.9 274.0 158.9 275.3 157.7 269.9 152.9 255.7 146.1 230.9 141.3 197.0"/>
<path d="M141.3 197.0 142.3 161.2 149.5 132.9 159.9 116.3 170.2 111.4 177.9 117.8 181.0 136.1 177.4 166.1 167.8 203.1 157.3 237.7 150.9 262.7"/>
<path d="M150.9 262.7 150.1 277.2 153.6 283.1 159.5 281.9 165.4 273.3 168.8 255.7 166.8 228.0 158.0 192.9 145.4 158.6 134.7 132.9 128.7 119.0"/>
<path d="M128.7 119.0 127.8 117.2 131.3 128.2 138.6 153.7 147.8 193.1 155.1 236.9 157.6 271.5 156.8 292.1 154.4 301.9 151.4 304.7 148.3 301.7"/>
<path d="M148.3 301.7 145.3 291.1 142.3 268.3 139.9 229.5 139.6 181.9 141.9 142.7 145.7 121.2 150.1 117.0 154.9 128.7 159.1 156.7 160.5 196.6"/>
<path d="M160.5 196.6 157.9 235.7 152.4 262.6 146.1 275.4 140.3 276.0 136.0 264.1 134.8 235.8 139.4 189.8 149.6 137.9 159.6 98.4 166.3 76.1"/>
<path d="M166.3 76.1 169.4 65.8 169.5 62.4 166.7 63.6 161.2 69.2 153.5 79.6 144.3 95.4 135.0 115.8 127.4 138.2 123.0 159.7 122.0 178.2"/>
<path d="M122.0 178.2 124.0 193.0 127.8 203.9 132.6 211.1 137.3 214.4 141.2 213.6 143.7 208.5 144.7 199.4 144.4 187.7 143.7 175.8 143.9 166.4"/>
<path d="M143.9 166.4 145.7 161.9 149.4 163.5 154.5 170.9 159.4 182.0 162.4 193.2 162.0 199.7 157.8 197.4 150.5 183.7 142.1 158.6 135.8 127.4"/>
<path d="M135.8 127.4 133.8 99.3 135.3 80.4 138.5 70.9 142.2 69.1 145.4 75.1 147.5 92.5 147.7 127.7 145.9 179.7 143.4 230.7 141.6 264.3"/>
<path d="M141.6 264.3 140.4 280.5 139.6 284.7 138.6 280.3 137.3 267.8 135.4 248.3 133.7 225.7 133.3 205.8 135.0 193.2 139.4 188.4 146.6 189.3"/>
<path d="M146.6 189.3 155.6 192.6 164.9 195.3 173.0 196.0 178.4 195.5 180.2 196.2 178.4 202.0 173.4 215.7 166.5 237.6 159.3 263.1 153.6 285.3"/>
<path d="M153.6 285.3 150.1 300.1 148.4 307.8 148.0 310.6 148.6 309.2 150.0 302.8 152.0 288.3 154.4 262.3 156.1 227.8 156.0 197.0 154.5 180.7"/>
<path d="M154.5 180.7 152.8 181.5 152.5 196.2 154.7 216.9 159.8 234.3 167.6 241.4 177.3 234.1 187.6 209.1 193.6 166.7 190.1 119.6 180.3 85.2"/>
<path d="M180.3 85.2 170.1 66.9 161.1 59.2 153.5 57.6 147.6 60.4 143.7 68.4 142.2 82.5 143.3 102.4 146.9 124.2 151.8 143.2 156.2 157.5"/>
<path d="M156.2 157.5 159.0 168.7 159.7 180.2 158.7 195.2 156.7 214.2 154.7 234.8 153.7 252.3 154.3 263.2 156.7 265.7 160.6 258.0 165.4 238.0"/>
<path d="M165.4 238.0 169.0 204.7 168.3 164.7 162.6 130.9 153.9 110.9 144.1 105.0 134.0 112.1 125.1 132.4 120.4 163.7 122.5 197.3 129.5 222.1"/>
<path d="M129.5 222.1 137.3 232.8 143.1 228.7 145.0 210.2 142.5 180.5 136.9 148.0 131.5 122.0 128.5 106.6 128.7 101.0 132.4 103.2 139.5 111.2"/>
<path d="M139.5 111.2 149.0 121.9 158.6 131.6 166.2 136.4 170.5 134.9 171.6 128.5 170.6 120.7 169.1 115.2 167.9 115.0 167.2 122.0 166.6 137.4"/>
<path d="M166.6 137.4 165.4 160.8 163.3 188.4 160.7 213.9 158.3 232.3 156.7 242.1 155.2 243.9 153.0 239.2 148.8 229.8 141.9 218.1 132.7 206.8"/>
<path d="M132.7 206.8 123.0 197.6 115.3 191.2 112.1 186.6 114.4 182.1 122.0 176.0 132.5 167.1 142.8 155.3 149.8 141.6 151.8 127.6 149.7 115.0"/>
<path d="M149.7 115.0 145.7 104.8 142.7 97.3 142.5 92.3 146.0 89.5 152.3 88.7 159.6 90.3 165.3 95.1 167.1 104.5 163.2 120.9 153.2 146.5"/>
<path d="M153.2 146.5 139.2 181.1 126.9 218.9 121.1 250.9 122.1 272.0 127.2 282.5 134.4 284.0 142.5 276.7 150.2 258.1 156.1 226.3 157.8 185.9"/>
<path d="M157.8 185.9 154.6 149.6 148.9 127.2 142.5 120.5 136.4 129.2 131.1 153.8 128.6 191.9 130.0 232.8 133.8 264.4 137.8 283.2 141.4 292.1"/>
<path d="M141.4 292.1 145.0 294.5 149.1 292.3 153.9 286.1 159.7 277.0 166.0 266.2 171.5 255.3 174.9 245.6 175.4 236.9 173.0 227.8 168.3 216.9"/>
<path d="M168.3 216.9 163.1 203.2 159.0 187.4 157.8 171.5 159.6 158.6 163.9 151.5 168.8 152.0 172.6 160.7 173.6 177.0 171.4 198.0 167.1 219.0"/>
<path d="M167.1 219.0 163.2 235.5 161.8 245.1 163.6 247.0 167.8 241.4 172.2 228.6 173.6 210.1 168.8 189.0 157.4 169.5 142.0 154.8 127.3 146.6"/>
<path d="M127.3 146.6 117.5 145.3 115.9 150.6 123.7 162.0 139.4 178.7 157.7 198.8 171.6 219.7 176.4 238.5 171.6 252.9 160.4 261.7 147.2 264.5"/>
<path d="M147.2 264.5 136.3 260.6 131.1 248.8 134.3 227.8 146.2 198.6 162.2 166.5 174.6 139.3 179.2 122.0 175.7 115.5 165.6 119.3 151.3 132.9"/>
<path d="M151.3 132.9 136.4 154.0 126.2 177.2 123.8 194.8 128.6 201.0 137.5 193.1 147.0 171.8 153.5 142.3 154.8 114.4 151.9 95.6 146.9 87.5"/>
<path d="M146.9 87.5 141.3 89.9 136.1 104.4 132.4 134.2 132.2 176.8 135.6 217.8 139.4 243.3 141.4 249.9 141.3 236.8 139.4 200.5 138.0 146.1"/>
<path d="M138.0 146.1 139.2 97.0 141.7 69.1 144.1 57.4 146.4 54.1 148.4 56.5 149.5 66.8 149.2 93.0 147.5 143.9 146.1 207.1 147.0 254.3"/>
<path d="M147.0 254.3 150.3 278.2 156.0 286.9 163.7 286.0 172.5 277.7 180.4 262.7 183.9 243.1 180.3 223.0 169.8 206.6 155.7 195.5 142.7 188.4"/>
<path d="M142.7 188.4 134.5 182.9 133.4 176.5 138.8 167.8 148.3 157.2 157.9 146.6 164.2 138.8 165.5 136.2 162.0 140.6 155.1 152.9 147.3 172.6"/>
<path d="M147.3 172.6 141.4 196.3 139.2 218.5 140.4 234.4 143.4 241.7 146.7 239.9 149.4 229.1 151.1 210.5 152.0 188.0 152.3 167.4 152.1 153.7"/>
<path d="M152.1 153.7 151.0 149.8 148.2 156.2 143.0 171.8 135.8 193.4 128.8 215.2 124.1 231.8 123.3 239.8 126.7 238.0 134.0 225.6 143.6 202.7"/>
<path d="M143.6 202.7 152.4 172.1 156.5 141.0 155.2 116.3 150.4 101.1 145.2 95.0 142.1 97.3 143.1 108.6 149.4 130.7 160.1 164.0 170.2 203.5"/>
<path d="M170.2 203.5 174.2 240.1 171.1 266.9 164.2 283.4 156.8 292.1 151.4 295.1 149.6 293.5 152.3 287.0 158.8 274.2 167.1 253.5 173.0 224.2"/>
<path d="M173.0 224.2 172.3 189.7 164.7 156.0 154.6 128.8 147.5 109.8 145.9 98.1 150.1 92.1 158.5 90.4 168.0 92.1 175.2 96.6 177.2 103.5"/>
<path d="M177.2 103.5 173.0 112.1 163.9 121.4 153.4 130.4 145.6 137.7 142.7 142.2 144.7 142.8 148.8 139.2 151.7 131.8 151.1 121.8 147.1 110.9"/>
<path d="M147.1 110.9 141.8 101.1 138.0 94.2 137.4 91.1 140.4 92.7 146.2 100.3 152.6 115.4 156.8 139.6 155.6 171.4 148.9 204.9 140.2 233.0"/>
<path d="M140.2 233.0 133.7 251.5 131.6 260.6 134.3 261.4 141.4 254.8 151.1 241.7 160.6 223.9 166.9 205.3 168.7 190.5 167.4 183.1 165.4 184.5"/>
<path d="M165.4 184.5 165.0 194.2 166.8 210.1 169.4 228.4 170.5 245.3 168.4 258.5 162.7 267.2 154.3 271.9 145.2 273.5 137.7 273.2 133.9 272.0"/>
<path d="M133.9 272.0 134.4 271.1 138.5 271.2 143.8 272.7 147.7 275.0 148.6 277.3 146.6 278.4 143.0 277.2 139.4 272.6 137.7 263.0 138.9 246.8"/>
<path d="M138.9 246.8 143.1 223.0 148.7 193.1 152.7 161.8 153.1 135.1 150.3 116.4 145.8 106.2 141.5 103.4 138.7 107.1 138.4 116.5 140.8 130.0"/>
<path d="M140.8 130.0 144.6 144.3 148.1 155.0 149.4 158.0 147.9 151.7 144.7 137.0 141.5 117.9 139.8 100.0 139.9 87.3 141.4 81.0 143.3 81.4"/>
<path d="M143.3 81.4 145.0 89.7 145.8 108.6 145.4 140.2 144.0 180.4 142.8 217.4 142.3 241.7 142.8 251.6 144.1 248.4 146.4 232.3 149.3 204.4"/>
<path d="M149.3 204.4 152.3 170.2 154.3 139.1 155.1 117.6 154.6 106.7 153.1 104.6 150.4 109.7 146.3 120.4 141.1 135.0 135.5 150.9 130.9 166.2"/>
<path d="M130.9 166.2 128.3 180.3 128.6 194.0 131.9 208.7 137.4 224.8 143.7 241.4 149.1 256.3 152.6 267.0 154.0 272.1 153.8 270.5 152.4 260.9"/>
<path d="M152.4 260.9 150.6 241.6 149.3 213.1 149.5 181.5 151.8 156.1 156.0 143.1 161.7 144.3 168.7 159.2 175.8 184.7 181.0 212.8 183.3 234.2"/>
<path d="M183.3 234.2 183.5 243.6 182.0 239.3 178.3 220.8 171.2 190.1 161.6 156.2 152.4 131.0 145.5 120.7 141.2 127.0 139.6 151.6 141.3 192.8"/>
<path d="M141.3 192.8 145.8 236.9 150.5 268.1 154.3 283.0 157.7 285.0 161.5 274.8 166.4 249.1 172.0 207.3 175.8 162.0 176.9 130.1 176.6 116.9"/>
<path d="M176.6 116.9 174.8 120.1 170.6 137.7 162.9 165.4 152.8 193.2 143.3 210.4 136.6 211.6 133.9 196.2 135.9 167.8 141.9 136.8 148.6 114.8"/>
<path d="M148.6 114.8 153.7 106.8 156.0 114.5 154.5 141.7 148.4 188.9 140.4 240.6 134.7 276.0 131.8 292.7 131.2 296.6 133.1 290.1 138.1 269.2"/>
<path d="M138.1 269.2 147.7 227.6 159.9 172.1 168.2 126.3 170.6 101.8 168.8 95.1 163.6 102.2 155.0 122.9 144.3 155.3 135.3 190.5 131.7 216.9"/>
<path d="M131.7 216.9 133.5 229.2 139.3 227.2 147.5 212.2 155.9 187.0 161.4 157.7 162.1 131.7 159.0 113.2 154.1 102.5 149.4 98.2 146.1 98.8"/>
<path d="M146.1 98.8 145.0 103.3 145.9 111.4 147.6 122.9 148.3 138.0 146.4 157.1 141.2 179.7 134.1 204.2 127.7 227.6 124.3 246.7 124.4 259.6"/>
<path d="M124.4 259.6 127.4 265.7 131.7 264.5 136.1 255.0 139.2 235.0 140.2 203.1 139.7 163.0 139.9 124.0 142.5 94.7 147.5 76.7 154.7 67.3"/>
<path d="M154.7 67.3 163.3 63.7 172.1 64.6 179.5 70.0 183.8 81.8 182.9 101.9 174.9 130.3 161.0 161.4 146.8 186.2 137.7 198.3 135.9 195.6"/>
<path d="M135.9 195.6 141.4 178.7 151.7 151.7 162.1 123.1 168.6 101.5 170.4 90.3 168.3 89.8 163.3 101.4 155.9 130.0 147.8 177.4 143.1 230.4"/>
<path d="M143.1 230.4 143.4 269.0 146.5 288.8 150.4 295.9 154.4 294.3 157.8 284.3 160.5 264.5 162.2 236.4 163.4 208.2 165.3 189.8 169.1 185.2"/>
<path d="M169.1 185.2 174.0 192.4 178.1 204.9 178.8 214.9 174.4 215.6 164.1 202.7 148.6 175.3 132.3 139.8 121.9 108.8 119.1 90.4 122.3 85.0"/>
<path d="M122.3 85.0 130.3 93.1 142.8 119.8 158.3 170.7 167.7 231.2 165.8 273.6 157.7 293.0 147.1 297.8 135.4 291.6 123.9 270.8 116.2 229.3"/>
<path d="M116.2 229.3 119.2 175.9 130.4 135.2 140.4 118.5 144.9 125.3 142.1 157.0 133.3 210.4 125.7 262.4 123.7 293.3 125.8 306.4 131.4 310.3"/>
<path d="M131.4 310.3 140.1 308.2 150.2 299.1 160.0 277.9 165.5 240.0 161.4 192.2 149.5 151.8 137.5 127.8 130.6 118.5 131.2 119.8 139.6 128.8"/>
<path d="M139.6 128.8 153.8 143.0 168.8 159.3 178.3 175.4 178.6 189.8 169.9 202.1 156.1 212.9 142.7 222.4 134.5 230.9 133.6 238.0 139.6 243.4"/>
<path d="M139.6 243.4 149.3 247.0 159.2 248.6 166.3 248.5 169.2 246.8 168.1 243.7 164.8 238.7 161.4 231.1 159.4 219.3 159.0 202.0 159.2 178.6"/>
<path d="M159.2 178.6 158.2 151.1 155.1 124.3 150.4 103.1 145.3 90.0 140.9 84.9 137.9 87.9 136.8 100.7 138.6 126.3 143.7 164.6 150.9 206.6"/>
<path d="M150.9 206.6 156.7 239.4 160.0 257.7 160.8 263.0 159.3 257.1 155.5 240.8 149.4 215.9 142.5 188.2 137.1 164.8 135.0 149.6 137.0 142.3"/>
<path d="M137.0 142.3 143.1 140.3 152.5 139.4 163.1 136.0 172.1 127.5 176.9 114.5 176.6 100.2 172.7 88.3 167.5 81.2 162.9 79.9 160.0 85.3"/>
<path d="M160.0 85.3 159.1 99.2 159.5 123.6 159.1 156.7 155.5 190.5 148.1 216.4 138.5 230.8 129.2 235.1 123.1 232.2 123.1 225.4 130.7 218.2"/>
<path d="M130.7 218.2 144.5 213.0 160.2 210.4 172.7 208.3 178.1 202.9 174.7 190.2 163.6 167.7 149.6 137.3 139.3 106.6 135.9 83.4 138.1 70.0"/>
<path d="M138.1 70.0 143.2 64.4 149.1 64.9 153.5 71.3 154.3 85.5 149.7 107.5 140.1 131.8 129.4 148.4 122.6 150.7 123.0 139.4 130.8 121.9"/>
<path d="M130.8 121.9 142.8 107.6 155.5 103.5 167.3 115.0 177.2 150.6 179.9 213.5 172.4 275.1 164.5 307.1 160.0 318.2 157.7 321.6 156.5 322.0"/>
<path d="M156.5 322.0 156.2 320.1 156.3 313.3 156.5 292.8 155.2 245.1 149.9 179.3 143.0 129.6 137.3 105.4 133.5 97.8 132.3 99.5 134.8 105.2"/>
<path d="M134.8 105.2 141.5 110.5 150.9 112.2 160.6 110.5 167.8 108.6 170.8 111.2 168.9 123.9 161.7 153.0 149.9 200.6 138.9 252.5 133.7 288.3"/>
<path d="M133.7 288.3 133.0 305.5 134.9 311.7 138.6 311.7 143.6 304.9 149.6 284.6 156.7 237.8 161.8 168.5 161.9 112.1 159.8 83.7 158.0 73.9"/>
<path d="M158.0 73.9 156.9 75.0 156.6 85.5 156.9 106.3 157.1 135.9 156.1 167.2 153.4 191.9 148.9 206.5 143.4 212.0 137.7 210.9 132.9 205.5"/>
<path d="M132.9 205.5 130.4 197.1 131.4 186.3 136.6 172.5 145.3 155.5 155.6 136.2 164.7 117.5 170.4 102.5 171.8 93.6 169.1 91.9 163.0 99.2"/>
<path d="M163.0 99.2 154.1 118.5 144.0 152.7 136.9 197.5 136.6 238.7 141.7 265.5 148.9 277.8 156.2 278.8 162.4 269.5 166.0 249.3 165.3 219.6"/>
<path d="M165.3 219.6 160.4 187.9 153.9 163.6 148.7 151.6 145.8 151.3 145.0 159.7 144.8 172.4 143.9 183.9 141.5 190.0 138.2 188.9 135.6 181.7"/>
<path d="M135.6 181.7 135.5 172.0 138.8 164.1 144.5 162.0 150.4 167.9 153.8 181.3 152.4 199.4 146.5 216.8 138.4 228.8 131.8 232.4 129.9 226.6"/>
<path d="M129.9 226.6 135.3 212.1 148.4 191.5 165.4 170.2 180.6 153.6 189.5 145.0 190.2 144.6 183.3 150.8 171.5 160.3 159.2 168.9 150.9 172.8"/>
<path d="M150.9 172.8 148.8 169.9 152.2 161.0 157.9 149.2 162.1 138.7 162.4 133.2 158.3 135.0 150.5 144.9 141.2 161.9 132.9 182.5 127.5 201.3"/>
<path d="M127.5 201.3 124.8 213.6 123.3 217.2 121.4 212.3 118.9 200.8 116.7 186.3 116.1 173.1 118.1 164.8 122.3 162.4 127.7 164.8 132.6 169.3"/>
<path d="M132.6 169.3 135.4 172.4 135.6 171.3 134.5 165.3 134.5 156.4 137.6 149.1 144.9 148.9 155.4 161.3 166.6 190.4 172.8 233.7 170.2 275.5"/>
<path d="M170.2 275.5 163.1 301.9 155.8 314.0 149.6 318.6 145.6 319.5 144.7 317.5 147.0 310.2 152.2 289.5 159.9 242.9 164.4 177.8 162.0 127.7"/>
<path d="M162.0 127.7 156.8 104.7 152.4 102.4 151.3 117.3 155.4 149.4 164.2 192.6 172.3 231.7 175.4 256.6 172.5 267.3 164.2 266.8 151.3 256.6"/>
<path d="M151.3 256.6 136.6 237.2 125.4 210.7 123.3 181.5 131.5 154.7 145.9 132.9 160.4 116.3 170.8 104.2 175.3 95.8 174.5 91.1 170.4 90.4"/>
<path d="M170.4 90.4 165.2 95.0 160.4 106.6 156.3 127.6 152.3 158.2 147.6 193.0 142.1 222.2 136.5 238.5 131.8 239.5 129.1 222.8 130.5 186.1"/>
<path d="M130.5 186.1 137.1 136.0 145.2 92.5 149.9 67.2 150.9 56.0 149.0 52.1 145.5 52.5 141.8 57.6 139.3 70.9 140.0 99.0 146.8 143.4"/>
<path d="M146.8 143.4 158.5 190.1 169.2 222.2 176.0 235.0 179.3 230.8 179.7 211.2 177.7 179.4 174.4 144.1 171.3 115.2 169.0 97.5 166.4 90.3"/>
<path d="M166.4 90.3 162.2 92.6 155.6 105.3 146.8 131.3 138.4 171.2 135.6 216.7 139.9 254.1 147.4 277.1 154.6 287.8 159.0 289.1 158.8 281.5"/>
<path d="M158.8 281.5 152.5 261.5 139.9 225.6 126.4 177.9 121.1 134.6 125.7 107.5 136.3 96.6 149.6 99.2 163.0 115.3 172.4 145.9 172.4 185.6"/>
<path d="M172.4 185.6 163.3 220.7 151.6 241.3 142.9 245.5 139.8 233.6 143.6 206.1 152.8 169.1 161.3 135.8 164.3 116.6 161.2 114.1 152.6 129.8"/>
<path d="M152.6 129.8 140.7 166.8 132.2 218.7 132.9 263.9 139.7 289.7 148.6 300.0 157.6 300.5 165.6 291.2 171.6 266.2 172.9 218.9 166.7 160.8"/>
<path d="M166.7 160.8 158.4 117.6 153.1 97.2 150.6 94.6 149.6 107.4 148.4 137.8 145.6 183.1 141.7 228.5 139.0 259.7 138.5 275.4 141.0 279.8"/>
<path d="M141.0 279.8 146.4 275.7 153.9 264.2 160.7 246.1 162.9 224.0 157.9 201.8 146.8 182.3 134.4 166.2 126.4 152.5 127.0 140.3 136.7 129.4"/>
<path d="M136.7 129.4 152.4 120.9 168.9 116.4 181.1 118.1 185.6 128.4 180.4 149.6 165.8 181.9 147.6 219.1 134.5 250.7 129.7 270.7 131.3 279.1"/>
<path d="M131.3 279.1 136.2 277.2 141.7 264.3 145.2 238.0 144.0 200.0 138.4 161.6 132.1 134.8 128.2 124.0 128.6 128.3 134.4 146.7 145.2 175.6"/>
<path d="M145.2 175.6 156.5 205.9 163.4 227.4 163.8 235.0 158.5 227.1 149.0 203.3 139.1 167.4 134.3 130.7 135.9 104.3 141.3 91.1 147.8 89.2"/>
<path d="M147.8 89.2 153.2 98.3 155.3 120.0 151.7 154.2 142.6 193.5 132.7 226.1 126.0 245.8 124.2 253.3 127.5 250.7 135.7 239.7 146.8 222.2"/>
<path d="M146.8 222.2 157.7 201.2 164.6 180.3 166.1 161.9 163.5 147.0 159.4 135.3 156.7 126.2 156.6 119.7 158.6 116.6 160.9 118.1 160.8 125.9"/>
<path d="M160.8 125.9 155.9 141.9 145.1 166.8 131.2 197.5 120.0 226.7 116.4 247.3 121.4 256.3 134.5 252.7 155.4 234.0 181.0 198.2 200.6 151.1"/>
<path d="M200.6 151.1 204.1 109.5 195.7 83.9 182.6 72.3 168.2 70.6 154.0 77.8 141.2 97.4 131.8 134.0 129.3 183.5 133.7 229.2 139.3 259.2"/>
<path d="M139.3 259.2 143.1 274.6 144.9 280.4 146.4 280.3 149.2 276.8 154.7 272.3 162.7 268.6 171.1 266.8 176.6 266.8 176.7 267.0 170.4 265.8"/>
<path d="M170.4 265.8 158.8 261.6 144.4 253.4 130.7 241.3 121.7 226.6 119.9 212.1 124.9 200.9 133.5 194.9 141.3 193.9 145.5 196.3 145.3 199.5"/>
<path d="M145.3 199.5 141.9 201.1 137.9 199.7 135.6 195.5 136.2 190.3 139.1 187.0 142.5 188.3 144.7 195.4 144.8 207.5 143.7 220.7 143.6 230.1"/>
<path d="M143.6 230.1 146.2 230.8 152.9 218.5 163.2 189.6 173.1 146.3 176.3 103.1 172.7 74.1 165.6 59.8 156.5 54.4 146.8 54.3 137.5 59.5"/>
<path d="M137.5 59.5 129.6 73.5 124.4 102.1 125.9 144.2 135.0 183.8 146.3 205.7 155.9 206.7 162.8 189.9 166.7 162.0 168.1 134.4 168.5 116.2"/>
<path d="M168.5 116.2 169.1 110.4 170.2 116.8 171.1 134.8 170.8 160.8 169.0 186.1 167.2 201.0 167.0 200.5 168.9 183.8 171.7 155.0 173.1 124.1"/>
<path d="M173.1 124.1 171.9 101.1 168.3 89.3 162.7 87.9 155.4 96.6 147.4 116.7 141.0 147.6 139.7 182.3 144.3 210.8 152.3 228.0 160.7 235.0"/>
<path d="M160.7 235.0 166.9 235.1 168.8 232.3 165.8 230.5 158.7 232.2 149.7 237.1 141.3 242.5 134.8 244.4 130.4 238.7 128.0 221.7 128.2 191.4"/>
<path d="M128.2 191.4 132.0 152.4 138.9 117.0 146.9 94.3 155.1 84.9 163.7 87.5 173.0 103.9 181.2 138.7 183.1 189.0 175.6 236.3 164.4 266.0"/>
<path d="M164.4 266.0 154.0 278.8 145.3 280.0 138.7 272.4 134.7 258.6 133.5 243.7 133.9 235.8 134.2 240.1 133.5 255.6 132.1 274.8 131.2 290.1"/>
<path d="M131.2 290.1 131.5 298.3 133.7 299.8 138.1 293.8 145.3 276.4 155.4 241.5 165.3 191.1 169.2 143.8 166.6 114.3 160.3 102.4 151.9 103.2"/>
<path d="M151.9 103.2 142.6 113.8 133.9 131.1 127.8 150.0 125.6 165.4 127.0 175.5 130.7 182.7 135.3 192.5 139.8 210.4 143.4 238.1 145.6 269.5"/>
<path d="M145.6 269.5 146.5 294.2 146.6 308.2 146.3 314.2 146.0 315.0 146.0 310.4 146.5 293.3 148.3 243.7 151.4 156.1 153.0 89.0 152.7 62.7"/>
<path d="M152.7 62.7 151.1 55.8 148.6 58.5 145.3 73.6 141.6 115.0 141.1 185.0 146.0 244.1 152.1 270.0 157.9 269.8 162.9 243.2 163.6 183.1"/>
<path d="M163.6 183.1 156.9 112.4 148.9 70.8 142.8 55.1 139.0 50.7 138.4 51.5 141.7 57.7 149.0 73.5 160.7 102.9 173.4 139.3 180.0 165.8"/>
<path d="M180.0 165.8 177.9 172.7 168.2 161.5 154.6 140.3 142.3 120.0 134.8 108.3 132.3 108.0 134.3 121.1 140.0 148.9 146.8 187.6 150.7 224.8"/>
<path d="M150.7 224.8 149.7 249.3 144.9 258.4 138.4 252.9 132.6 231.5 131.5 193.8 138.6 148.6 151.0 111.3 163.0 89.1 172.0 79.5 176.9 79.4"/>
<path d="M176.9 79.4 176.6 88.7 169.8 110.2 155.9 146.4 139.4 192.5 129.2 234.8 129.1 263.9 136.2 279.8 147.4 286.3 160.0 286.0 171.3 279.8"/>
<path d="M171.3 279.8 178.5 267.8 178.6 251.1 170.6 232.6 157.0 217.2 142.7 208.7 132.7 208.6 129.4 215.5 132.9 225.8 140.9 235.2 150.4 240.1"/>
<path d="M150.4 240.1 159.4 238.0 166.8 227.7 172.0 209.5 174.5 186.3 174.4 164.1 172.5 149.0 169.3 144.5 165.0 151.7 159.4 170.2 153.3 196.3"/>
<path d="M153.3 196.3 148.4 222.8 146.2 242.9 146.9 253.5 149.5 255.0 152.6 248.6 154.4 236.8 152.8 223.9 147.2 216.2 139.0 218.3 131.7 231.1"/>
<path d="M131.7 231.1 128.7 250.8 131.6 270.2 138.7 283.7 147.8 289.8 157.2 288.2 165.7 277.1 172.0 251.8 173.5 210.1 168.6 161.5 161.5 123.3"/>
<path d="M161.5 123.3 156.7 102.2 155.1 95.2 155.9 98.8 157.6 111.0 158.0 128.7 155.2 145.8 149.1 155.4 141.7 153.5 135.9 140.7 134.5 122.0"/>
<path d="M134.5 122.0 137.5 104.1 143.3 91.5 149.5 85.4 154.5 85.7 157.4 91.8 157.6 103.7 155.6 119.6 152.7 136.3 151.1 150.1 151.6 158.8"/>
<path d="M151.6 158.8 154.0 162.8 156.9 164.4 158.6 166.6 158.3 171.3 156.2 179.4 153.4 189.6 151.4 199.1 151.2 204.8 152.5 204.2 153.9 196.0"/>
<path d="M153.9 196.0 153.7 181.2 150.5 162.8 144.5 145.4 137.6 133.1 131.8 127.8 129.1 129.8 130.8 138.1 137.0 150.2 146.0 162.6 154.6 171.3"/>
<path d="M154.6 171.3 159.6 174.0 159.5 170.8 154.5 164.1 146.8 157.8 139.1 155.6 133.9 160.1 132.5 172.3 135.1 190.3 140.4 209.5 145.9 224.5"/>
<path d="M145.9 224.5 149.8 231.5 151.5 229.0 151.0 217.1 149.0 198.3 146.7 178.4 145.0 164.6 144.5 162.2 145.1 173.7 146.6 198.0 148.6 228.4"/>
<path d="M148.6 228.4 150.4 254.7 151.8 270.6 152.9 274.9 154.0 267.1 155.2 243.8 156.0 202.5 155.9 152.6 154.8 112.9 153.2 91.4 150.9 84.6"/>
<path d="M150.9 84.6 147.1 89.6 141.0 107.2 132.1 138.8 123.0 178.7 117.6 213.8 117.3 235.4 122.0 242.8 131.7 238.6 146.4 225.6 163.8 207.9"/>
<path d="M163.8 207.9 179.2 191.2 188.2 180.2 188.7 177.2 181.2 181.5 168.9 190.7 156.4 201.2 148.3 210.2 147.2 216.1 152.5 218.9 161.4 220.0"/>
<path d="M161.4 220.0 169.4 221.2 172.1 223.9 167.4 228.4 156.0 233.2 141.7 236.2 128.8 234.4 121.5 225.4 122.6 207.1 132.9 180.1 148.9 149.4"/>
<path d="M148.9 149.4 163.6 122.9 172.2 105.9 173.6 99.7 168.6 104.4 157.8 121.9 142.9 153.6 129.3 195.3 123.6 234.4 126.3 261.3 134.2 275.3"/>
<path d="M134.2 275.3 145.0 279.6 157.2 276.5 169.5 267.4 180.0 254.2 186.1 240.2 186.2 229.5 180.8 224.7 171.8 226.0 161.6 230.8 152.5 235.8"/>
<path d="M152.5 235.8 145.8 237.8 141.6 234.7 139.5 225.0 138.4 208.5 137.3 186.3 135.9 161.5 134.3 137.8 133.7 117.6 134.9 101.9 138.3 90.1"/>
<path d="M138.3 90.1 143.7 81.5 150.0 75.4 155.5 71.6 158.9 70.2 159.1 71.7 155.9 77.0 150.1 88.1 143.2 107.5 138.3 136.5 139.1 172.0"/>
<path d="M139.1 172.0 146.2 205.7 156.2 230.4 164.4 244.3 167.8 248.6 164.4 245.6 153.8 237.9 137.9 228.8 121.5 222.0 109.9 220.3 107.0 223.9"/>
<path d="M107.0 223.9 113.1 230.8 125.3 237.3 139.2 239.7 150.8 234.7 157.6 220.2 158.7 195.5 155.1 164.3 150.5 134.9 148.4 114.4 149.9 105.4"/>
<path d="M149.9 105.4 154.4 108.2 160.6 124.1 165.9 154.7 166.2 196.1 160.4 236.1 151.9 263.9 144.4 278.6 140.0 283.0 139.8 279.2 144.9 267.1"/>
<path d="M144.9 267.1 155.3 245.7 169.2 216.4 181.5 184.2 187.4 154.9 185.9 132.0 179.1 115.3 169.9 103.3 160.9 94.6 153.6 88.4 148.6 84.4"/>
<path d="M148.6 84.4 145.7 83.1 144.4 84.9 144.1 90.9 145.0 102.4 147.7 120.3 153.1 144.0 160.9 170.0 169.2 193.0 175.5 209.0 177.7 216.6"/>
<path d="M177.7 216.6 174.4 216.6 165.5 210.6 152.3 201.2 138.3 191.1 127.4 182.5 122.9 176.6 125.7 172.9 134.7 170.0 146.5 166.3 157.6 160.6"/>
<path d="M157.6 160.6 164.7 153.2 166.7 145.8 164.3 141.0 159.7 141.9 154.9 151.4 151.0 171.3 148.1 200.8 145.6 233.6 142.5 260.9 138.5 278.0"/>
<path d="M138.5 278.0 133.9 285.1 129.5 283.3 126.6 271.1 127.5 245.1 134.8 205.1 147.3 162.0 159.0 130.9 165.8 117.2 167.1 120.9 163.1 142.7"/>
<path d="M163.1 142.7 154.3 182.7 145.3 229.8 141.0 266.8 141.7 287.3 145.1 295.4 149.5 294.8 153.0 285.4 154.2 264.3 151.6 229.1 145.9 186.3"/>
<path d="M145.9 186.3 141.1 149.5 140.2 126.7 143.5 117.6 149.6 119.5 156.3 130.2 160.6 147.6 160.0 168.0 154.3 187.2 146.9 201.9 141.9 210.9"/>
<path d="M141.9 210.9 142.9 214.3 150.8 212.5 163.9 206.0 177.9 195.2 186.9 180.2 186.7 161.9 176.7 142.2 161.0 123.7 145.6 109.1 135.3 99.9"/>
<path d="M135.3 99.9 132.1 97.2 135.6 101.7 144.0 115.3 154.4 139.7 161.7 173.6 161.5 209.6 154.6 237.8 145.1 253.8 137.0 257.3 132.7 248.5"/>
<path d="M132.7 248.5 134.4 226.5 142.9 192.5 155.6 154.4 166.5 123.5 172.7 104.8 174.5 97.4 173.2 99.3 169.4 109.2 164.0 125.1 157.4 142.7"/>
<path d="M157.4 142.7 150.3 155.6 143.0 158.9 135.7 151.0 129.4 134.3 125.7 115.0 125.5 99.0 128.5 89.9 134.1 88.6 141.6 96.4 150.2 116.3"/>
<path d="M150.2 116.3 158.0 150.8 161.2 195.5 157.9 236.8 150.9 264.6 143.1 278.7 136.2 282.7 130.8 278.6 127.4 266.4 126.6 246.4 128.9 221.6"/>
<path d="M128.9 221.6 133.4 198.6 138.7 183.9 143.9 180.8 149.0 189.8 154.1 208.8 158.6 233.0 161.5 256.2 162.1 274.0 160.4 285.4 156.6 291.2"/>
<path d="M156.6 291.2 151.0 292.6 144.3 289.9 137.6 283.1 132.0 271.7 128.9 255.3 129.1 234.6 132.7 211.5 137.9 188.3 142.7 167.2 145.6 149.1"/>
<path d="M145.6 149.1 146.7 134.5 146.7 123.4 146.9 115.6 148.3 111.3 151.4 110.8 156.0 114.6 161.5 123.6 166.7 138.4 170.5 158.7 171.6 182.2"/>
<path d="M171.6 182.2 170.0 204.7 166.7 221.9 163.0 230.9 159.9 230.1 157.2 218.6 154.7 195.8 151.7 164.4 148.5 131.7 145.9 105.7 144.3 89.6"/>
<path d="M144.3 89.6 144.4 82.7 146.6 84.0 151.5 94.4 159.6 116.8 169.8 153.4 177.5 198.7 178.2 239.7 172.7 267.8 164.3 283.5 155.1 290.7"/>
<path d="M155.1 290.7 146.4 292.3 139.7 289.7 136.5 283.7 137.5 275.0 142.6 264.4 150.3 253.1 158.0 241.8 163.1 230.5 164.4 218.4 161.8 204.2"/>
<path d="M161.8 204.2 156.8 187.0 151.6 166.3 148.4 143.4 148.1 120.3 150.4 99.6 154.3 83.1 158.5 71.1 162.4 62.9 165.7 57.8 168.0 54.8"/>
<path d="M168.0 54.8 169.0 53.7 168.4 54.3 166.0 57.2 161.6 63.7 155.1 76.7 146.0 101.0 135.3 139.7 126.9 187.5 124.1 230.4 125.6 259.0"/>
<path d="M125.6 259.0 128.3 273.7 130.8 278.0 132.8 274.1 134.7 262.1 137.9 242.6 143.9 218.2 153.1 194.5 164.0 177.0 174.4 167.8 181.9 166.3"/>
<path d="M181.9 166.3 184.6 170.0 181.7 175.2 174.2 178.6 164.8 177.7 156.4 172.1 151.1 163.4 149.2 155.2 149.3 151.3 148.7 155.3 145.3 169.6"/>
<path d="M145.3 169.6 138.7 194.5 131.2 225.6 126.7 254.5 126.9 274.9 131.3 285.5 138.3 287.4 146.3 280.2 153.2 260.7 155.7 224.0 150.8 173.3"/>
<path d="M150.8 173.3 141.5 125.4 134.6 93.9 132.8 78.1 136.7 72.9 146.1 75.4 159.7 86.2 174.7 107.9 184.9 142.0 182.4 184.2 167.0 223.7"/>
<path d="M167.0 223.7 147.9 252.9 133.4 271.0 127.2 280.8 129.7 284.7 139.2 284.2 152.5 279.7 165.0 271.1 172.3 258.2 171.3 241.4 162.3 222.2"/>
<path d="M162.3 222.2 149.8 203.2 140.3 187.1 138.3 175.8 144.2 169.5 155.0 167.5 165.7 168.2 171.7 169.7 170.4 170.3 162.5 169.0 151.0 165.7"/>
<path d="M151.0 165.7 140.2 161.8 133.2 159.5 130.9 161.1 131.9 168.5 133.5 182.6 133.0 202.1 129.4 223.2 123.3 241.1 116.7 252.2 111.2 254.8"/>
<path d="M111.2 254.8 108.3 247.6 109.6 229.2 117.0 199.8 130.5 164.8 146.5 133.9 161.2 113.7 173.6 105.4 184.3 108.1 192.9 121.7 197.4 146.1"/>
<path d="M197.4 146.1 193.9 177.4 181.7 207.4 164.6 229.1 147.3 240.1 133.0 241.2 124.5 234.0 124.3 220.6 133.6 203.8 150.0 187.0 168.5 172.8"/>
<path d="M168.5 172.8 183.4 161.6 190.5 152.5 188.2 144.1 177.7 135.2 162.5 126.1 146.8 118.1 134.1 113.5 126.0 114.7 123.0 124.3 125.2 145.1"/>
<path d="M125.2 145.1 132.4 177.8 142.8 216.4 152.1 249.7 157.8 270.3 160.1 278.1 159.8 273.9 157.2 254.8 152.7 215.7 148.1 161.2 147.0 113.1"/>
<path d="M147.0 113.1 149.4 85.3 153.8 74.5 159.0 75.7 163.8 90.0 165.8 124.8 160.4 182.8 148.1 242.3 136.8 279.7 129.7 296.6 126.8 302.0"/>
<path d="M126.8 302.0 128.6 300.0 135.1 290.7 146.1 271.5 159.5 240.6 169.4 202.7 170.4 167.1 163.3 140.3 152.9 122.5 144.1 111.1 139.9 103.3"/>
<path d="M139.9 103.3 141.2 97.5 146.6 92.9 153.2 89.6 158.0 88.3 159.2 89.5 156.7 94.0 151.7 102.4 146.6 114.8 144.3 130.1 146.4 146.4"/>
<path d="M146.4 146.4 152.1 160.8 158.6 171.8 162.7 179.2 162.4 184.0 157.9 188.2 151.2 193.4 145.5 200.1 143.1 207.8 144.7 214.4 148.8 217.7"/>
<path d="M148.8 217.7 152.9 215.4 154.3 206.1 151.7 190.1 145.3 170.1 137.8 151.2 132.0 138.4 129.8 135.2 131.2 143.2 135.6 163.0 141.3 191.7"/>
<path d="M141.3 191.7 145.9 221.4 147.8 243.4 147.8 253.3 147.5 250.0 149.2 231.8 154.4 197.9 162.5 155.4 169.7 119.0 173.5 97.3 173.9 89.6"/>
<path d="M173.9 89.6 170.9 94.2 164.8 112.0 156.2 144.5 148.8 185.7 147.2 221.2 152.3 241.7 162.5 246.2 175.9 236.5 189.3 214.1 197.4 184.4"/>
<path d="M197.4 184.4 196.4 157.4 187.9 141.0 175.3 138.1 160.8 148.2 146.6 168.9 135.6 194.1 129.9 215.2 129.2 226.0 132.2 224.1 137.8 209.5"/>
<path d="M137.8 209.5 144.7 184.9 151.2 157.4 155.3 136.0 156.5 126.3 154.9 130.3 150.9 149.8 145.6 184.3 141.3 226.0 140.1 261.6 141.6 284.2"/>
<path d="M141.6 284.2 144.6 295.8 148.3 300.2 151.8 299.6 154.6 294.8 156.0 285.5 155.9 271.7 154.6 254.4 153.2 235.8 152.8 218.2 153.8 203.8"/>
<path d="M153.8 203.8 155.3 193.7 155.8 188.9 153.5 190.2 147.7 198.4 139.2 213.4 130.7 233.2 125.4 253.8 125.1 270.5 129.3 280.8 136.6 284.0"/>
<path d="M136.6 284.0 145.8 278.7 155.7 261.7 164.3 227.3 167.3 176.8 162.7 127.0 155.2 94.7 148.9 80.2 144.9 78.8 143.6 90.2 145.5 119.5"/>
<path d="M145.5 119.5 150.7 169.5 155.8 224.2 157.1 261.3 154.9 277.8 150.6 278.8 145.1 265.4 140.0 234.3 138.6 187.6 142.8 141.6 149.8 111.5"/>
<path d="M149.8 111.5 156.0 98.4 159.7 98.3 159.6 108.2 154.7 125.2 145.8 142.8 136.0 152.3 129.3 147.6 128.3 128.8 133.0 103.1 140.1 80.5"/>
<path d="M140.1 80.5 146.3 66.2 150.2 59.2 151.8 57.2 151.4 59.4 149.6 66.2 147.3 78.6 145.2 96.2 144.3 114.8 144.3 128.2 144.3 133.3"/>
<path d="M144.3 133.3 143.1 131.6 140.7 127.6 137.9 126.0 135.9 130.7 136.1 143.7 139.5 164.8 145.6 189.6 152.4 210.9 157.7 222.7 160.4 222.3"/>
<path d="M160.4 222.3 160.5 209.0 158.7 185.2 156.6 157.8 156.1 136.0 157.5 125.9 160.4 130.0 163.3 150.1 163.8 185.3 160.1 226.3 153.7 258.9"/>
<path d="M153.7 258.9 147.4 277.5 142.7 284.1 140.1 280.9 140.0 267.8 142.5 244.3 146.7 214.1 150.4 186.6 151.7 169.7 150.6 165.5 148.5 171.3"/>
<path d="M148.5 171.3 147.6 181.9 149.5 190.5 154.5 191.5 161.3 182.3 167.5 164.2 170.1 143.3 168.3 127.8 163.0 123.7 155.7 135.9 147.8 169.4"/>
<path d="M147.8 169.4 142.3 221.6 141.8 270.9 144.1 299.5 147.1 311.5 149.9 315.1 152.2 313.6 154.5 304.9 158.1 279.7 163.9 224.4 168.6 153.6"/>
<path d="M168.6 153.6 169.8 105.7 169.4 86.0 167.7 84.6 163.7 98.6 156.2 130.7 145.6 177.4 137.4 221.4 134.7 248.6 136.8 259.0 142.1 256.4"/>
<path d="M142.1 256.4 148.9 244.2 154.7 226.9 156.5 211.9 153.3 205.9 146.4 211.5 139.0 225.8 134.5 242.2 133.9 253.5 136.4 254.9 140.7 242.6"/>
<path d="M140.7 242.6 145.6 212.2 149.7 164.2 151.9 114.9 153.0 81.8 154.5 65.7 157.5 60.0 162.1 61.0 167.8 68.7 172.9 86.3 173.8 116.1"/>
<path d="M173.8 116.1 165.8 152.1 150.0 180.9 132.6 193.8 119.6 189.8 115.9 172.9 124.1 150.3 140.9 130.9 159.9 120.8 175.9 122.8 185.1 139.2"/>
<path d="M185.1 139.2 183.5 171.5 169.9 215.2 151.8 256.6 139.1 284.9 133.9 300.2 135.0 307.3 140.2 309.4 147.4 307.8 154.0 302.0 157.7 289.3"/>
<path d="M157.7 289.3 157.0 265.6 151.1 228.1 142.8 182.2 138.2 140.7 139.5 113.0 144.8 99.6 151.3 98.5 157.0 110.1 159.3 137.8 155.9 182.5"/>
<path d="M155.9 182.5 148.2 232.3 141.6 269.6 138.7 289.6 139.5 296.8 143.3 294.5 149.4 280.5 156.8 246.6 162.5 188.4 161.8 126.5 157.6 86.9"/>
<path d="M157.6 86.9 154.3 69.1 153.2 63.6 155.3 65.7 160.7 75.5 168.8 95.5 176.6 125.3 179.2 156.6 174.2 178.1 164.1 184.5 152.9 176.5"/>
<path d="M152.9 176.5 144.5 158.9 141.7 138.8 144.2 122.8 149.2 114.2 153.2 113.2 153.5 118.6 148.5 128.0 138.7 137.2 127.4 141.8 119.0 138.7"/>
<path d="M119.0 138.7 117.1 128.3 122.0 114.3 131.2 101.6 141.0 94.0 148.8 93.8 153.8 102.8 156.1 124.1 156.9 159.4 157.9 202.6 160.1 240.6"/>
<path d="M160.1 240.6 163.3 265.2 166.3 277.2 167.4 279.9 164.8 275.6 157.6 265.5 146.2 251.9 134.0 238.3 126.1 228.4 126.3 223.8 135.2 223.1"/>
<path d="M135.2 223.1 150.1 222.9 166.5 219.3 179.9 208.7 186.3 189.4 183.6 163.0 173.3 135.2 160.6 113.1 149.8 100.2 142.5 97.1 138.2 104.2"/>
<path d="M138.2 104.2 136.6 122.7 137.3 152.8 140.0 188.7 143.6 219.4 147.2 237.7 150.7 242.3 154.2 233.9 157.3 213.3 158.4 184.5 156.5 155.6"/>
<path d="M156.5 155.6 151.9 134.8 146.2 125.5 140.9 128.3 137.6 143.3 137.9 169.6 142.2 202.3 148.1 233.5 152.4 256.7 153.6 270.9 151.7 277.5"/>
<path d="M151.7 277.5 147.7 278.0 143.2 273.1 140.3 262.3 140.8 244.9 145.2 220.2 152.1 189.7 157.8 157.6 158.9 129.3 155.1 108.9 148.2 97.4"/>
<path d="M148.2 97.4 140.2 94.5 133.2 100.6 128.8 118.1 129.2 149.2 135.4 190.6 144.2 230.5 150.6 258.1 152.8 271.5 151.3 273.0 146.7 263.2"/>
<path d="M146.7 263.2 140.2 241.5 133.8 210.3 130.7 178.9 131.6 158.6 135.2 155.0 140.0 169.0 144.9 197.3 148.4 230.0 149.8 254.5 149.2 264.6"/>
<path d="M149.2 264.6 147.4 258.0 144.9 229.0 143.1 171.9 144.8 107.5 148.7 68.4 152.7 53.0 157.2 48.2 161.8 48.2 165.9 53.0 168.9 69.1"/>
<path d="M168.9 69.1 169.1 112.2 161.3 184.7 148.9 246.0 140.3 275.0 136.2 281.7 136.1 273.0 140.5 248.5 148.8 210.4 157.2 172.3 161.1 149.2"/>
<path d="M161.1 149.2 160.0 146.1 155.5 162.1 150.2 192.5 147.9 226.3 150.0 250.8 155.0 261.3 160.4 257.8 163.3 239.3 160.0 206.4 149.4 167.5"/>
<path d="M149.4 167.5 136.6 137.2 127.5 123.2 125.4 126.9 133.0 149.0 151.2 188.0 172.3 232.0 185.1 265.0 187.6 282.6 182.4 288.1 171.5 284.1"/>
<path d="M171.5 284.1 157.9 270.3 146.2 245.7 143.6 214.2 154.2 185.8 174.1 169.3 195.4 167.5 210.1 179.1 211.3 200.1 197.5 224.0 175.1 244.1"/>
<path d="M175.1 244.1 152.8 257.0 136.3 262.6 127.9 261.7 127.4 255.3 132.5 244.2 139.2 229.9 143.1 213.8 141.9 197.5 136.6 181.7 130.6 167.3"/>
<path d="M130.6 167.3 127.7 154.5 129.9 144.3 136.8 137.3 145.9 134.5 154.3 136.2 159.8 142.1 161.4 151.0 159.7 160.2 156.5 166.0 153.6 165.0"/>
<path d="M153.6 165.0 151.8 155.4 150.7 137.9 149.2 116.8 146.7 97.8 143.6 84.7 140.4 78.5 138.1 79.1 137.1 87.3 137.9 105.8 140.8 135.9"/>
<path d="M140.8 135.9 144.7 173.4 147.5 207.6 148.2 230.4 147.7 240.8 147.8 241.0 149.8 233.8 154.5 222.8 160.3 212.2 164.6 205.4 164.4 203.5"/>
<path d="M164.4 203.5 158.7 204.7 148.6 205.5 137.4 202.0 129.2 191.1 127.4 172.6 133.1 149.9 143.1 129.5 152.5 117.0 157.7 115.7 156.8 127.8"/>
<path d="M156.8 127.8 149.8 155.3 139.8 194.4 133.7 231.4 135.3 253.6 143.8 257.2 158.8 238.6 177.9 189.7 187.9 120.7 182.9 71.5 174.4 51.8"/>
<path d="M174.4 51.8 165.9 45.7 158.1 44.4 153.0 45.8 151.8 52.3 155.2 75.0 163.7 135.0 170.3 216.2 167.6 266.6 160.4 284.7 150.2 284.6"/>
<path d="M150.2 284.6 137.5 270.4 124.3 242.2 116.7 207.7 119.1 183.0 129.0 178.8 142.6 196.1 155.4 227.7 163.0 258.8 165.1 278.4 164.1 285.3"/>
<path d="M164.1 285.3 161.8 280.0 158.8 259.7 154.6 220.9 149.1 172.8 143.2 137.0 136.9 124.3 128.9 136.4 119.7 175.9 115.2 233.5 118.0 279.6"/>
<path d="M118.0 279.6 122.4 302.0 126.0 309.6 129.2 308.8 132.0 298.3 134.6 267.5 138.9 204.9 144.7 136.0 148.1 96.5 148.3 84.4 145.8 92.0"/>
<path d="M145.8 92.0 140.1 123.3 133.0 183.0 130.1 246.6 131.7 284.2 134.5 298.7 138.0 300.2 141.9 290.4 146.2 262.8 149.9 210.6 150.7 149.5"/>
<path d="M150.7 149.5 148.8 107.2 146.2 87.5 144.6 82.8 145.1 88.6 149.0 103.5 156.6 125.0 166.1 146.7 174.1 161.0 178.2 164.6 177.7 158.7"/>
<path d="M177.7 158.7 173.9 148.3 168.8 139.3 164.9 136.3 163.0 142.0 163.1 157.2 163.8 179.4 163.7 202.8 162.7 220.0 161.8 226.5 162.6 219.8"/>
<path d="M162.6 219.8 166.6 199.3 173.8 167.7 181.4 133.7 186.3 107.4 187.5 92.8 184.9 89.1 178.4 95.9 167.6 115.4 153.4 149.3 140.5 192.2"/>
<path d="M140.5 192.2 134.7 230.8 136.2 256.0 141.3 268.0 146.7 269.8 150.0 263.6 149.3 251.3 144.5 236.2 137.6 223.3 132.1 217.2 131.0 219.6"/>
<path d="M131.0 219.6 134.9 228.8 141.9 240.5 148.7 249.7 152.9 252.7 153.4 247.2 150.8 231.2 147.1 204.3 145.9 171.0 149.4 140.6 156.6 120.7"/>
<path d="M156.6 120.7 165.0 113.3 171.8 118.3 174.0 135.5 168.4 163.1 155.2 193.7 139.6 216.8 127.0 226.1 120.7 219.1 122.9 195.5 134.2 159.6"/>
<path d="M134.2 159.6 149.6 123.8 162.3 99.6 170.0 89.7 173.5 93.7 173.5 115.3 169.2 161.4 160.3 223.8 152.0 273.0 147.0 297.6 143.5 306.5"/>
<path d="M143.5 306.5 140.0 306.6 135.7 298.2 129.8 274.1 124.6 224.0 126.9 157.9 136.6 107.9 146.9 83.1 155.6 74.5 162.2 75.6 165.7 84.0"/>
<path d="M165.7 84.0 164.7 98.4 159.1 115.2 150.8 128.2 143.8 133.2 141.0 130.4 142.7 124.2 147.2 120.4 151.7 123.7 154.0 138.4 152.8 166.8"/>
<path d="M152.8 166.8 148.4 205.0 144.1 241.0 142.8 264.5 145.1 273.4 150.7 267.9 159.0 244.1 167.5 196.4 169.3 135.9 163.5 90.5 155.8 68.2"/>
<path d="M155.8 68.2 148.7 60.4 143.5 61.0 141.2 70.5 142.8 95.6 149.4 144.1 158.3 204.3 161.8 249.4 158.7 271.9 150.8 278.4 139.3 274.0"/>
<path d="M139.3 274.0 126.1 260.8 115.1 242.0 111.1 224.3 115.7 215.1 126.3 218.1 138.6 231.3 147.8 248.6 151.9 262.9 151.4 269.9 148.4 267.7"/>
<path d="M148.4 267.7 144.9 253.6 143.2 224.5 145.5 181.6 151.8 137.5 158.9 105.9 164.9 89.7 169.6 85.5 173.4 91.7 176.4 108.9 177.9 137.5"/>
<path d="M177.9 137.5 176.7 172.3 172.7 202.8 167.0 221.5 160.8 227.1 154.5 221.0 149.0 206.0 145.8 186.7 146.5 169.4 150.7 159.1 157.2 158.4"/>
<path d="M157.2 158.4 163.5 167.5 166.5 184.7 164.2 205.6 156.5 224.9 146.3 238.3 136.7 243.9 130.6 241.5 130.1 231.5 136.2 214.9 147.4 194.8"/>
<path d="M147.4 194.8 159.4 175.5 167.3 161.2 168.4 154.1 162.4 154.8 151.3 162.7 138.8 176.4 129.3 193.3 126.0 210.3 129.3 224.4 136.8 234.2"/>
<path d="M136.8 234.2 145.3 239.0 151.8 239.1 154.6 234.8 153.5 226.6 149.8 215.3 146.0 202.2 144.8 188.8 147.2 176.4 152.6 166.4 159.0 159.5"/>
<path d="M159.0 159.5 163.6 156.1 164.2 156.4 160.0 160.1 151.7 167.0 141.2 176.4 131.6 187.1 125.6 197.7 124.7 206.9 128.6 213.2 135.9 215.5"/>
<path d="M135.9 215.5 144.6 212.9 152.5 204.8 157.7 190.8 159.2 171.6 157.0 149.3 152.5 127.1 147.8 108.3 144.8 94.6 144.2 86.3 146.4 82.9"/>
<path d="M146.4 82.9 151.5 84.0 159.2 89.8 168.6 100.4 177.9 115.7 184.4 133.7 185.3 151.1 179.7 164.0 168.9 170.4 155.7 169.9 143.2 164.4"/>
<path d="M143.2 164.4 134.3 156.7 130.5 150.3 131.7 148.4 136.4 153.2 142.5 165.6 147.7 185.2 150.1 208.9 149.4 232.0 146.6 250.1 143.6 261.8"/>
<path d="M143.6 261.8 141.7 267.0 141.3 266.8 142.3 262.0 143.7 253.4 144.3 242.7 143.0 231.3 139.7 220.6 135.5 210.8 132.5 201.2 132.8 190.5"/>
<path d="M132.8 190.5 137.3 177.7 145.1 162.9 153.4 147.9 159.0 135.3 159.9 128.1 155.5 128.3 147.1 138.1 137.0 158.8 129.6 189.4 129.3 223.4"/>
<path d="M129.3 223.4 136.0 251.9 146.2 270.2 156.5 278.4 164.9 278.0 170.0 269.2 170.9 251.4 167.2 225.6 161.0 197.1 156.3 172.9 155.9 157.6"/>
<path d="M155.9 157.6 160.2 150.8 167.3 149.8 174.4 150.3 178.8 147.9 178.7 139.7 174.8 125.4 169.2 108.3 164.4 93.2 161.7 83.3 161.0 79.8"/>
<path d="M161.0 79.8 161.3 83.4 161.2 96.1 159.1 120.5 154.1 155.5 147.4 191.7 142.0 217.4 139.7 227.5 140.5 222.1 144.0 202.9 148.6 175.4"/>
<path d="M148.6 175.4 152.5 149.7 154.6 134.6 155.7 134.6 157.1 152.4 160.1 189.0 163.7 235.5 165.3 274.3 164.3 297.1 160.6 307.9 153.6 312.2"/>
<path d="M153.6 312.2 143.5 313.0 132.0 311.5 121.6 308.1 115.5 303.6 115.8 298.8 122.8 294.9 133.5 291.8 143.5 288.3 149.4 282.2 149.6 270.3"/>
<path d="M149.6 270.3 144.8 248.6 138.2 214.5 135.9 171.7 141.3 132.1 151.6 104.8 161.8 90.0 168.3 84.4 168.8 84.7 162.2 88.4 149.9 92.4"/>
<path d="M149.9 92.4 136.7 93.1 128.6 88.4 129.1 79.3 136.6 69.4 146.8 61.9 155.7 57.8 160.8 57.3 161.2 61.2 157.3 71.9 150.7 94.4"/>
<path d="M150.7 94.4 144.4 131.2 143.7 174.2 149.6 207.6 157.8 224.1 163.7 224.3 163.7 211.7 156.2 191.5 144.0 171.3 133.4 158.3 129.7 156.0"/>
<path d="M129.7 156.0 135.8 164.3 151.3 179.8 170.9 196.6 187.3 207.4 195.2 207.4 192.3 193.9 179.4 167.9 162.0 136.0 148.4 108.1 142.6 90.1"/>
<path d="M142.6 90.1 143.3 82.1 147.7 82.5 152.6 91.4 154.9 109.7 152.0 137.1 143.8 168.3 134.7 195.2 129.5 213.0 130.9 221.3 138.4 222.5"/>
<path d="M138.4 222.5 149.3 219.6 159.4 215.3 164.4 211.8 162.4 209.9 154.4 209.3 144.0 208.7 135.5 207.1 132.2 204.4 135.3 201.7 143.3 201.3"/>
<path d="M143.3 201.3 152.9 205.8 160.5 216.8 163.6 233.3 161.6 251.8 156.3 267.4 149.9 276.9 143.7 278.8 137.9 271.6 132.3 252.3 127.8 218.6"/>
<path d="M127.8 218.6 126.9 176.7 130.4 142.0 136.4 125.4 143.7 130.1 152.2 159.8 160.2 214.2 162.8 269.7 161.1 301.7 158.5 314.2 155.8 317.9"/>
<path d="M155.8 317.9 153.3 317.2 152.0 310.6 152.5 288.2 155.2 228.7 156.5 142.6 154.2 86.6 150.3 65.2 145.6 59.8 141.3 63.1 139.0 76.4"/>
<path d="M139.0 76.4 141.2 104.5 151.3 146.1 166.4 185.7 178.9 208.7 184.2 212.4 179.9 199.8 165.6 176.8 145.8 152.1 128.2 134.1 117.6 126.8"/>
<path d="M117.6 126.8 115.7 130.7 122.2 145.0 135.0 166.9 148.8 190.7 158.0 209.5 160.4 219.4 157.7 219.2 153.2 210.0 150.6 194.0 152.8 175.2"/>
<path d="M152.8 175.2 159.5 158.4 168.0 146.6 174.7 141.0 176.9 141.2 173.3 145.5 165.2 152.1 155.3 158.6 147.3 163.3 143.6 165.3 144.2 164.6"/>
<path d="M144.2 164.6 147.5 162.3 150.7 159.8 151.8 158.6 150.3 159.5 147.6 163.0 146.1 168.8 147.9 175.8 153.5 182.6 161.6 188.0 169.1 190.8"/>
<path d="M169.1 190.8 173.0 190.6 171.3 187.4 164.0 182.3 153.4 176.7 143.1 172.4 136.3 171.0 134.7 173.7 138.1 180.7 144.3 191.3 150.5 203.8"/>
<path d="M150.5 203.8 154.3 215.7 155.1 224.4 153.8 228.4 152.4 226.9 152.6 220.3 155.4 209.9 160.2 198.8 165.2 191.0 167.9 189.8 166.7 197.6"/>
<path d="M166.7 197.6 161.2 213.8 153.0 235.1 145.1 255.6 139.8 270.6 137.9 278.1 138.7 277.6 141.5 267.6 145.5 245.2 149.2 208.5 150.8 164.1"/>
<path d="M150.8 164.1 149.4 125.9 146.1 101.4 142.0 89.6 137.9 86.7 134.2 90.1 131.5 97.7 130.3 106.2 131.0 111.6 133.5 110.5 137.3 102.9"/>
<path d="M137.3 102.9 141.6 92.0 145.8 81.9 149.2 75.5 151.9 74.1 153.7 78.5 154.3 91.2 153.3 115.0 150.2 150.5 145.5 190.2 140.7 223.1"/>
<path d="M140.7 223.1 137.0 243.7 134.7 253.3 133.9 254.8 135.0 251.6 138.0 246.9 142.5 244.0 147.6 245.0 152.2 250.1 155.4 257.4 156.8 264.4"/>
<path d="M156.8 264.4 156.5 268.7 155.0 268.8 152.6 264.2 149.6 254.3 146.3 240.0 143.1 223.3 140.7 207.4 139.5 195.0 140.1 187.3 143.1 183.3"/>
<path d="M143.1 183.3 148.8 180.9 157.1 177.6 166.8 171.6 176.3 162.2 182.9 150.3 184.7 137.8 180.9 127.2 172.4 120.3 161.2 117.9 150.1 120.0"/>
<path d="M150.1 120.0 141.9 126.4 139.5 136.3 144.3 148.7 155.6 162.6 169.7 177.1 181.9 191.8 187.7 206.2 185.1 219.7 175.3 230.9 161.6 238.2"/>
<path d="M161.6 238.2 148.3 239.8 138.5 234.0 134.5 219.1 137.1 195.1 144.6 165.9 152.6 139.3 157.4 122.3 157.6 118.1 153.5 128.7 146.2 156.9"/>
<path d="M146.2 156.9 138.7 200.2 135.3 244.2 136.4 273.5 139.7 286.6 143.4 286.6 147.0 272.2 150.4 236.1 153.2 177.7 155.4 122.0 157.8 90.8"/>
<path d="M157.8 90.8 161.4 81.3 166.7 88.9 173.4 119.7 176.7 181.3 169.6 249.9 158.3 290.2 148.7 306.0 140.9 309.9 135.1 306.8 132.2 294.8"/>
<path d="M132.2 294.8 133.1 268.7 139.0 228.7 147.1 189.7 151.6 167.0 150.0 163.1 143.2 172.7 135.0 186.9 129.8 195.7 130.8 191.1 138.6 170.0"/>
<path d="M138.6 170.0 150.6 136.8 160.2 104.2 163.5 82.5 160.7 73.0 153.4 73.6 142.8 85.4 131.2 113.8 124.5 160.4 129.7 209.3 143.0 241.1"/>
<path d="M143.0 241.1 157.5 251.8 169.5 244.2 175.7 220.2 172.7 185.4 161.8 152.9 149.9 134.0 142.4 131.2 141.8 142.9 149.0 164.6 161.2 186.7"/>
<path d="M161.2 186.7 172.6 197.7 178.5 190.4 175.8 163.0 164.5 123.6 151.2 89.7 141.6 70.6 136.3 63.7 134.6 66.2 135.8 80.7 139.5 116.9"/>
<path d="M139.5 116.9 145.7 175.9 150.6 229.9 151.3 256.4 149.2 256.0 145.1 227.1 140.8 166.4 140.1 102.0 141.9 66.8 143.6 54.3 145.5 51.7"/>
<path d="M145.5 51.7 148.1 55.9 151.4 72.8 156.3 119.1 161.1 196.6 161.0 258.9 158.0 286.7 153.8 294.0 148.4 288.8 142.4 270.7 137.9 238.3"/>
<path d="M137.9 238.3 139.0 199.4 146.9 168.7 158.6 154.0 170.4 154.1 178.5 164.4 179.8 178.6 173.7 190.1 163.0 195.1 151.8 193.1 144.1 187.3"/>
<path d="M144.1 187.3 141.8 182.5 144.6 183.6 149.5 193.6 152.7 211.7 151.8 233.2 147.3 251.4 141.5 261.9 137.3 263.0 136.8 254.0 141.2 234.6"/>
<path d="M141.2 234.6 149.8 207.7 158.5 181.8 162.2 166.6 159.0 167.0 149.9 183.9 139.4 212.9 133.8 243.5 136.1 265.3 144.7 275.2 156.9 273.3"/>
<path d="M156.9 273.3 170.1 258.5 179.5 228.0 178.3 185.8 165.2 146.5 148.6 122.6 135.2 116.1 128.4 125.9 130.9 151.7 142.9 188.9 157.7 225.4"/>
<path d="M157.7 225.4 166.7 250.1 167.2 261.1 159.8 260.1 146.7 248.8 132.0 229.0 122.3 205.5 122.4 185.7 131.4 174.9 144.5 174.9 155.7 184.3"/>
<path d="M155.7 184.3 160.3 199.8 157.0 217.1 148.6 232.3 140.1 243.8 135.8 251.6 137.4 256.7 144.0 260.1 152.4 262.0 158.7 262.1 160.1 259.0"/>
<path d="M160.1 259.0 155.9 250.7 147.6 234.6 138.6 208.7 133.9 175.0 136.9 140.8 145.4 114.8 155.4 100.3 163.9 97.1 169.4 104.8 171.2 124.4"/>
<path d="M171.2 124.4 168.7 154.7 163.5 187.8 159.0 212.8 157.5 223.4 158.7 218.5 160.8 199.9 161.4 172.7 158.7 146.7 153.5 130.7 147.5 128.4"/>
<path d="M147.5 128.4 142.2 140.5 139.4 166.0 140.6 198.1 144.8 224.9 149.3 237.7 152.3 233.7 152.7 211.1 150.3 172.3 146.4 130.9 143.5 102.5"/>
<path d="M143.5 102.5 142.3 91.1 142.3 95.7 143.7 120.2 146.3 170.4 149.2 232.1 150.2 275.2 149.8 294.1 148.7 297.5 147.6 287.4 147.2 254.7"/>
<path d="M147.2 254.7 148.8 188.5 152.4 116.2 155.0 75.5 156.0 60.3 155.2 56.9 152.1 61.0 145.8 75.1 135.6 105.3 124.1 150.6 118.8 193.2"/>
<path d="M118.8 193.2 122.0 217.5 132.2 221.7 148.1 209.3 166.5 185.6 181.6 159.0 187.9 137.7 184.8 125.3 174.2 120.9 159.4 121.4 145.1 122.9"/>
<path d="M145.1 122.9 136.6 120.9 137.0 113.0 145.4 100.1 157.0 86.0 166.5 74.9 171.0 68.7 169.7 68.0 162.9 73.8 151.5 89.8 137.2 121.6"/>
<path d="M137.2 121.6 125.8 169.3 124.8 218.3 132.3 252.0 142.1 268.2 150.8 270.6 157.0 261.4 159.8 240.5 159.5 209.6 157.6 176.2 156.8 149.1"/>
<path d="M156.8 149.1 158.0 132.7 160.3 126.3 161.3 127.8 159.0 135.0 152.1 145.1 141.9 155.6 131.8 164.8 125.6 172.1 125.6 178.1 131.9 183.9"/>
<path d="M131.9 183.9 141.8 190.5 151.6 198.1 157.9 206.1 159.6 213.1 158.1 217.6 156.4 218.8 157.5 216.6 162.8 212.1 171.2 207.3 179.0 204.9"/>
<path d="M179.0 204.9 182.3 207.6 178.0 216.7 166.7 231.4 152.4 248.8 140.7 265.0 135.3 277.0 136.4 283.8 142.7 285.3 151.5 281.6 159.7 272.2"/>
<path d="M159.7 272.2 164.0 257.2 162.3 238.4 155.2 220.1 146.8 207.3 142.1 202.8 143.7 206.9 151.0 216.8 160.4 228.6 167.3 237.9 168.6 241.6"/>
<path d="M168.6 241.6 163.2 238.2 152.3 226.8 138.7 208.0 127.1 185.0 121.9 163.2 123.7 148.1 130.4 142.8 138.9 148.6 146.8 166.0 152.2 193.4"/>
<path d="M152.2 193.4 154.2 225.3 153.6 253.7 152.1 273.9 150.7 285.5 149.6 290.3 148.3 289.6 146.4 283.3 143.6 270.4 140.1 250.2 137.0 223.5"/>
<path d="M137.0 223.5 135.8 194.8 136.9 169.8 139.3 152.4 141.6 143.4 142.6 142.1 142.1 146.8 140.7 155.1 139.7 163.8 140.4 169.1 143.6 167.8"/>
<path d="M143.6 167.8 148.5 157.9 153.5 140.1 156.8 118.2 157.4 97.7 155.8 83.1 153.6 75.4 152.1 74.7 152.0 82.4 154.3 103.6 159.0 145.6"/>
<path d="M159.0 145.6 163.6 205.0 164.2 257.7 161.7 287.9 158.1 300.5 154.0 302.7 149.7 296.0 145.0 275.0 140.1 229.6 136.8 164.6 136.6 110.8"/>
<path d="M136.6 110.8 136.9 82.9 136.1 73.2 134.5 75.3 132.6 88.9 131.6 117.6 134.0 158.9 140.1 198.1 147.1 220.9 153.4 223.8 158.6 207.5"/>
<path d="M158.6 207.5 162.3 175.7 163.9 139.3 163.8 111.5 162.9 97.8 161.4 97.7 158.6 111.6 153.7 141.3 147.2 182.4 142.0 220.0 140.6 241.4"/>
<path d="M140.6 241.4 143.2 243.5 150.0 224.8 159.9 183.8 168.1 131.2 169.8 90.4 167.3 69.3 163.3 61.7 159.4 62.7 157.3 73.8 159.3 103.3"/>
<path d="M159.3 103.3 167.2 159.6 176.2 224.5 179.7 267.5 178.7 285.9 173.8 288.6 164.6 278.1 150.9 250.0 135.3 201.1 127.7 146.1 131.7 106.9"/>
<path d="M131.7 106.9 141.4 87.6 151.9 82.6 160.6 88.8 164.5 107.4 160.5 139.6 148.3 180.0 134.2 215.8 125.1 238.1 122.8 245.8 126.8 240.0"/>
<path d="M126.8 240.0 135.5 220.9 145.6 190.2 152.2 154.3 152.5 122.8 148.0 101.5 141.8 90.5 136.4 87.9 133.4 93.1 133.5 106.4 136.6 128.7"/>
<path d="M136.6 128.7 141.7 157.7 146.8 187.6 149.9 211.5 151.3 225.7 152.1 229.9 153.5 225.2 155.7 213.5 157.7 198.1 158.1 183.3 156.3 173.7"/>
<path d="M156.3 173.7 152.4 172.0 148.1 179.4 145.4 194.8 145.8 214.9 149.1 234.9 153.0 250.7 155.2 260.5 153.8 264.2 148.3 262.4 139.7 256.2"/>
<path d="M139.7 256.2 131.0 247.1 126.1 237.4 128.4 229.5 138.3 225.0 152.9 224.3 167.4 225.8 176.8 227.6 178.6 227.3 172.9 223.8 162.4 216.6"/>
<path d="M162.4 216.6 151.4 206.8 144.2 196.9 143.1 190.2 147.6 189.1 154.9 194.9 161.5 206.8 164.7 221.7 164.3 235.5 161.9 244.3 159.9 246.1"/>
<path d="M159.9 246.1 159.8 239.5 161.8 224.2 164.3 201.9 164.5 177.8 160.4 158.5 152.4 149.4 142.2 152.6 133.1 168.6 128.8 195.2 132.1 225.6"/>
<path d="M132.1 225.6 141.1 251.3 151.3 267.8 159.2 275.1 162.7 274.6 160.5 267.4 152.2 254.7 139.9 239.7 128.0 227.6 121.6 222.8 123.3 227.0"/>
<path d="M123.3 227.0 132.7 237.9 146.5 250.6 160.6 259.9 172.6 262.4 181.5 255.4 186.7 235.6 186.4 200.7 178.6 155.9 166.4 115.2 155.0 88.5"/>
<path d="M155.0 88.5 146.2 74.9 139.7 70.1 135.4 71.7 133.2 79.0 133.8 92.0 137.3 109.0 142.7 125.3 147.5 135.7 149.4 137.2 147.8 130.6"/>
<path d="M147.8 130.6 143.7 119.2 139.6 107.6 137.8 98.8 139.4 94.3 144.8 94.0 153.0 97.5 162.1 103.7 169.4 110.8 172.0 116.6 168.9 119.2"/>
<path d="M168.9 119.2 161.0 118.0 151.2 113.8 142.9 108.5 138.3 103.9 138.1 101.5 141.4 102.2 146.6 106.4 151.4 113.9 154.0 124.3 153.2 136.6"/>
<path d="M153.2 136.6 149.3 149.6 144.1 162.2 140.1 174.0 139.5 184.9 143.3 195.1 150.9 204.7 160.4 213.4 169.1 220.5 174.8 225.4 176.1 227.7"/>
<path d="M176.1 227.7 172.8 227.5 166.2 225.4 158.0 222.9 150.8 221.9 146.5 224.1 146.1 230.3 148.7 239.9 152.4 250.9 155.0 260.6 155.0 266.6"/>
<path d="M155.0 266.6 151.9 267.6 146.1 262.4 138.4 250.1 130.8 230.9 126.0 208.2 125.9 188.4 130.0 178.2 135.9 181.5 141.3 199.1 144.1 227.3"/>
<path d="M144.1 227.3 143.5 257.1 140.7 279.7 137.3 292.8 134.6 298.0 133.4 297.0 134.4 289.5 138.0 274.3 144.4 251.6 152.0 226.6 158.2 208.3"/>
<path d="M158.2 208.3 161.1 202.6 160.7 209.7 158.5 225.1 156.1 241.5 155.2 252.2 156.1 253.3 158.5 242.4 161.4 216.9 162.7 178.5 160.5 137.7"/>
<path d="M160.5 137.7 155.9 107.2 150.8 90.7 146.2 85.6 143.0 89.6 142.0 102.1 144.1 121.5 149.0 142.6 154.8 157.3 159.0 160.4 159.7 151.2"/>
<path d="M159.7 151.2 156.8 133.9 151.7 115.8 147.1 102.7 144.7 97.3 145.8 100.0 151.0 111.0 159.9 128.7 170.2 147.9 178.1 160.2 180.6 158.3"/>
<path d="M180.6 158.3 176.9 140.0 168.3 110.7 159.4 82.5 153.8 63.9 152.0 54.6 153.2 51.1 156.5 51.4 160.8 56.0 164.6 68.8 166.7 98.0"/>
<path d="M166.7 98.0 163.9 148.7 155.5 206.3 147.3 248.4 143.0 271.0 142.5 280.6 144.8 282.3 148.5 279.2 151.6 273.1 152.3 265.3 149.5 257.0"/>
<path d="M149.5 257.0 143.7 248.3 136.7 238.5 130.8 226.4 128.1 211.3 129.0 193.8 132.4 176.4 136.2 162.4 138.5 155.0 138.5 156.2 137.1 166.7"/>
<path d="M137.1 166.7 136.1 185.5 137.2 209.3 140.7 232.3 145.1 249.9 148.3 260.3 148.6 263.9 145.0 261.6 137.8 254.5 128.6 244.3 120.9 233.2"/>
<path d="M120.9 233.2 118.3 223.2 122.6 215.6 133.1 209.9 146.7 204.2 159.1 196.3 166.6 184.5 167.3 168.7 162.1 151.1 154.5 135.2 148.7 124.8"/>
<path d="M148.7 124.8 147.4 122.4 151.5 129.7 160.4 148.6 171.0 178.6 177.7 214.0 176.9 245.0 170.0 265.6 160.2 275.3 149.9 275.7 141.0 267.0"/>
<path d="M141.0 267.0 135.8 248.4 136.6 221.1 144.0 191.1 154.7 166.9 164.4 154.5 170.2 155.0 170.8 167.7 166.1 189.5 158.2 214.1 150.5 234.6"/>
<path d="M150.5 234.6 145.8 246.6 144.9 248.5 147.8 240.1 153.6 221.0 160.4 193.6 165.5 164.5 167.1 141.8 165.5 130.3 161.9 131.8 157.1 147.2"/>
<path d="M157.1 147.2 152.2 176.2 148.5 212.9 146.8 245.8 146.7 266.9 147.3 275.2 147.8 271.3 148.2 252.4 148.6 213.3 149.4 158.6 151.1 109.8"/>
<path d="M151.1 109.8 153.2 81.4 155.7 69.8 158.8 69.3 162.6 80.1 167.1 109.6 170.4 165.0 168.3 229.6 162.7 273.4 157.5 293.3 153.2 299.3"/>
<path d="M153.2 299.3 149.2 296.3 145.1 284.0 141.1 260.0 138.1 226.7 137.3 194.8 138.9 175.2 141.9 170.4 145.7 176.7 149.6 186.6 153.0 191.3"/>
<path d="M153.0 191.3 155.6 182.6 157.5 156.4 158.5 117.2 158.8 81.2 159.1 59.7 159.6 50.1 160.0 46.5 159.8 46.0 158.4 47.9 155.3 54.3"/>
<path d="M155.3 54.3 149.9 70.3 141.2 102.8 131.6 148.2 126.6 188.1 127.9 210.6 134.0 216.7 143.0 212.0 152.8 203.0 160.4 195.9 163.3 195.1"/>
<path d="M163.3 195.1 160.9 201.0 154.0 210.5 145.1 218.1 136.8 218.5 130.9 207.8 129.2 184.6 132.4 152.4 139.1 121.0 146.1 99.2 151.5 89.2"/>
<path d="M151.5 89.2 154.8 90.1 156.0 102.7 154.6 129.1 150.1 166.9 143.8 204.3 137.6 229.1 132.4 238.0 128.4 232.5 126.3 215.5 127.3 193.4"/>
<path d="M127.3 193.4 131.4 175.4 137.1 169.6 143.1 179.3 148.1 203.1 150.9 232.8 151.1 257.2 149.4 269.9 146.7 269.6 143.6 254.2 140.9 218.9"/>
<path d="M140.9 218.9 140.8 167.3 144.0 120.2 148.5 92.8 152.9 83.7 157.0 89.9 160.6 115.0 162.1 165.5 158.6 228.1 152.3 273.6 146.4 295.6"/>
<path d="M146.4 295.6 141.4 303.6 137.7 304.0 135.9 298.6 136.9 286.9 141.7 269.5 150.0 250.4 159.1 235.8 165.6 229.3 167.1 229.6 163.6 233.0"/>
<path d="M163.6 233.0 156.9 235.1 149.9 233.1 145.3 226.2 145.3 215.5 150.6 204.2 159.5 196.6 168.7 195.7 174.6 202.1 174.9 213.5 169.7 225.3"/>
<path d="M169.7 225.3 161.3 232.7 153.1 232.0 147.5 221.2 146.4 199.8 149.8 171.2 155.3 143.1 159.3 122.7 159.5 112.6 155.5 112.2 147.8 119.9"/>
<path d="M147.8 119.9 138.3 132.8 130.5 145.6 127.6 151.9 131.0 147.4 139.3 132.6 148.9 113.0 156.1 96.3 159.5 87.1 159.3 87.6 156.1 101.0"/>
<path d="M156.1 101.0 150.6 134.7 144.5 191.7 141.7 251.4 142.4 288.7 144.2 305.0 145.8 310.4 146.6 309.5 146.4 301.9 144.9 282.8 142.5 246.0"/>
<path d="M142.5 246.0 140.8 195.8 141.9 151.2 145.5 123.9 150.4 112.5 156.2 112.0 162.5 118.6 168.3 128.8 172.6 139.2 174.6 147.2 174.2 152.1"/>
<path d="M174.2 152.1 171.5 155.0 167.3 158.2 162.1 163.7 156.7 172.7 151.4 184.8 146.8 198.2 142.9 210.1 139.9 218.3 137.6 221.8 136.1 220.3"/>
<path d="M136.1 220.3 135.8 214.7 137.1 206.1 140.6 195.7 146.3 183.7 153.9 169.7 162.1 152.4 169.3 131.1 173.8 107.5 174.9 85.6 173.5 69.2"/>
<path d="M173.5 69.2 171.0 59.3 168.1 54.7 165.1 54.3 162.1 59.1 159.0 74.7 155.2 115.9 150.1 192.8 146.6 266.1 145.8 301.7 146.4 313.9"/>
<path d="M146.4 313.9 147.4 317.2 148.2 316.1 148.4 309.8 147.3 292.3 144.0 254.1 139.0 198.1 135.7 149.1 135.8 121.6 138.9 112.5 145.0 115.5"/>
<path d="M145.0 115.5 153.8 125.2 163.4 135.6 170.9 140.3 174.0 135.5 172.2 122.5 167.3 106.5 162.0 93.8 158.3 87.8 156.8 90.4 157.2 104.5"/>
<path d="M157.2 104.5 158.0 134.4 156.8 179.5 152.1 226.0 145.3 257.9 138.6 272.3 132.8 271.7 128.7 255.5 128.2 219.4 134.2 166.4 143.8 116.7"/>
<path d="M143.8 116.7 151.3 85.9 155.0 71.8 155.8 68.1 154.5 72.1 151.8 84.6 148.5 107.8 145.7 140.4 144.1 174.0 143.0 199.3 141.3 212.7"/>
<path d="M141.3 212.7 138.0 215.7 133.6 211.7 129.3 205.2 126.5 200.6 126.2 201.1 128.0 207.8 130.6 219.5 132.1 232.9 131.4 244.4 128.6 251.6"/>
<path d="M128.6 251.6 125.1 253.6 122.9 250.8 124.2 244.6 130.3 237.9 140.4 234.6 151.7 238.1 160.3 249.3 163.7 265.4 161.9 281.3 157.3 293.1"/>
<path d="M157.3 293.1 152.5 299.2 149.2 299.8 148.2 293.6 149.9 276.3 154.5 240.7 160.1 186.6 162.8 133.8 162.3 100.6 160.6 86.9 159.4 87.6"/>
<path d="M159.4 87.6 159.2 102.3 160.0 134.2 160.4 179.5 158.1 221.9 153.0 247.1 145.8 253.5 136.9 241.9 128.5 211.2 126.0 166.0 133.2 122.9"/>
<path d="M133.2 122.9 146.2 95.2 161.0 83.0 176.3 82.4 191.2 92.0 203.4 112.7 208.4 142.3 202.5 172.0 188.9 191.4 173.2 196.5 159.0 188.6"/>
<path d="M159.0 188.6 148.1 172.7 141.4 156.9 138.5 148.6 137.9 152.4 138.9 170.4 141.1 200.1 144.1 232.5 146.9 257.1 149.0 269.2 150.2 269.0"/>
<path d="M150.2 269.0 150.4 255.2 149.3 225.5 146.7 183.5 143.5 144.2 140.5 120.6 137.2 115.7 133.1 130.3 128.4 166.7 125.7 218.6 126.7 264.2"/>
<path d="M126.7 264.2 128.8 290.4 130.6 301.3 132.3 302.9 134.1 296.7 136.3 278.9 139.2 244.0 143.2 194.4 147.2 147.6 149.9 116.9 151.7 101.7"/>
<path d="M151.7 101.7 153.3 96.9 155.1 98.4 157.0 102.9 158.2 107.6 158.0 110.3 156.0 110.6 152.7 109.8 149.1 110.3 146.4 114.6 145.3 124.7"/>
<path d="M145.3 124.7 145.8 141.5 147.4 163.6 148.6 186.1 148.0 202.8 145.5 209.2 142.1 203.1 139.9 184.5 141.1 156.8 146.4 127.9 153.7 105.4"/>
<path d="M153.7 105.4 160.6 92.4 165.2 88.2 166.4 92.1 163.8 104.3 157.5 124.5 150.1 149.7 145.6 173.2 147.1 188.8 154.5 194.0 165.3 189.5"/>
<path d="M165.3 189.5 175.5 178.6 181.5 166.3 181.5 157.6 176.9 156.4 170.4 164.5 165.2 181.7 163.7 204.5 166.1 226.9 170.4 242.9 173.9 249.5"/>
<path d="M173.9 249.5 174.7 245.4 171.2 229.1 163.1 200.2 152.7 163.7 145.2 130.4 143.0 108.2 145.1 99.0 149.4 102.2 153.4 119.7 154.2 154.7"/>
<path d="M154.2 154.7 149.7 203.5 141.7 249.7 135.3 280.0 132.3 295.2 133.2 300.9 138.4 300.4 147.4 294.5 159.2 282.7 171.1 265.8 178.8 247.6"/>
<path d="M178.8 247.6 178.4 234.3 169.8 229.7 156.1 233.4 141.6 241.6 129.7 249.0 122.2 251.5 118.9 246.2 119.6 231.2 124.2 206.8 132.0 177.8"/>
<path d="M132.0 177.8 140.6 153.0 147.4 139.1 151.7 139.2 153.5 153.7 153.1 180.8 151.0 212.6 148.7 237.9 147.2 249.8 146.5 245.7 146.7 222.5"/>
<path d="M146.7 222.5 147.4 178.8 148.4 127.1 149.0 89.0 149.4 69.7 149.9 63.0 151.4 64.8 154.4 75.9 159.3 101.7 165.0 144.1 167.7 189.1"/>
<path d="M167.7 189.1 165.5 217.7 159.7 223.9 151.8 208.6 144.0 175.4 140.3 136.4 142.3 106.8 147.9 92.3 154.9 91.4 161.3 104.5 164.0 133.9"/>
<path d="M164.0 133.9 159.2 176.8 147.1 218.0 133.6 243.9 122.7 252.3 116.5 245.0 117.3 223.6 126.8 192.7 142.0 163.2 156.3 145.4 165.6 143.3"/>
<path d="M165.6 143.3 168.8 156.9 165.9 183.6 159.2 214.7 152.9 239.5 149.6 252.2 149.6 252.0 151.6 239.2 154.2 215.0 155.3 185.3 154.2 159.9"/>
<path d="M154.2 159.9 152.2 146.1 150.9 145.6 151.7 156.9 154.9 175.2 159.3 192.5 162.8 200.5 163.4 193.7 160.3 170.5 154.2 136.1 148.5 103.2"/>
<path d="M148.5 103.2 145.6 81.6 145.6 71.8 147.7 71.8 150.9 82.9 153.6 112.0 153.3 165.3 148.2 227.0 141.7 269.6 137.0 289.7 134.8 295.7"/>
<path d="M134.8 295.7 136.2 292.7 141.9 281.0 152.2 260.0 164.5 233.9 173.7 212.7 176.0 204.9 171.1 212.7 161.6 232.1 152.0 254.3 146.0 271.5"/>
<path d="M146.0 271.5 144.4 280.6 146.1 281.3 149.8 273.0 153.5 253.6 155.3 222.3 153.1 184.6 147.9 151.1 142.8 128.9 139.9 118.3 140.5 116.6"/>
<path d="M140.5 116.6 144.7 120.8 151.7 127.5 159.1 132.9 164.1 134.0 164.8 129.8 161.1 121.7 154.8 113.0 148.4 107.0 143.9 106.4 142.3 113.2"/>
<path d="M142.3 113.2 143.7 129.9 147.3 157.7 150.8 193.9 151.2 229.9 147.6 257.7 141.5 274.7 134.7 282.9 128.8 284.5 125.6 280.9 126.5 272.6"/>
<path d="M126.5 272.6 132.0 260.6 140.9 246.9 150.3 233.7 156.5 223.1 157.3 215.2 153.0 208.6 145.9 201.0 139.3 189.8 136.1 173.5 137.7 152.3"/>
<path d="M137.7 152.3 142.6 129.0 147.8 107.7 150.4 91.6 149.7 81.5 146.3 76.8 142.1 76.8 139.0 81.2 139.4 89.8 144.7 101.8 154.4 115.1"/>
<path d="M154.4 115.1 165.7 126.6 174.3 133.2 176.8 134.3 173.1 131.0 165.6 126.5 158.0 123.7 153.8 125.3 154.8 133.1 160.9 147.9 169.5 168.8"/>
<path d="M169.5 168.8 176.8 191.9 179.1 212.2 176.0 225.8 169.2 231.1 160.9 228.6 153.3 219.8 147.5 207.8 143.9 196.8 141.3 191.1 138.7 193.4"/>
<path d="M138.7 193.4 135.4 203.8 132.7 219.7 132.4 236.4 135.6 249.1 142.1 254.9 150.9 252.4 160.1 240.3 166.5 218.3 166.8 189.3 159.9 160.1"/>
<path d="M159.9 160.1 149.1 138.3 138.6 127.3 131.6 127.3 129.8 137.7 134.2 156.6 143.6 179.7 154.4 200.5 163.4 213.4 169.6 215.7 173.6 206.8"/>
<path d="M173.6 206.8 176.6 187.6 178.8 161.4 179.7 134.4 178.3 112.3 174.3 97.5 167.4 89.5 158.4 86.9 148.9 89.1 141.7 95.6 139.5 106.9"/>
<path d="M139.5 106.9 144.4 123.3 155.7 145.4 169.0 172.7 177.2 203.3 175.2 233.5 164.3 259.4 150.1 278.6 138.3 291.3 132.0 298.6 132.5 301.8"/>
<path d="M132.5 301.8 139.1 301.7 149.7 298.3 161.1 291.1 169.6 279.2 171.6 262.0 165.5 240.7 153.3 217.9 140.6 196.8 132.8 179.3 131.8 166.2"/>
<path d="M131.8 166.2 136.3 157.2 142.7 151.5 147.5 149.0 148.9 149.4 146.9 152.9 143.7 159.6 141.6 169.5 142.6 181.7 146.6 194.8 151.8 207.0"/>
<path d="M151.8 207.0 155.8 216.6 157.0 222.5 155.2 224.3 151.6 222.4 147.8 217.4 145.4 210.5 145.0 202.9 146.0 195.4 146.8 188.5 146.4 181.4"/>
<path d="M146.4 181.4 144.7 173.5 142.8 163.8 142.4 152.2 144.4 139.4 148.7 127.0 153.5 117.2 156.8 111.4 157.2 110.8 154.4 116.0 149.3 127.2"/>
<path d="M149.3 127.2 144.0 143.6 141.0 162.4 141.8 179.2 145.4 189.9 148.9 192.7 149.4 187.8 144.9 177.6 136.1 166.7 126.1 159.8 118.6 161.1"/>
<path d="M118.6 161.1 116.6 173.0 121.7 195.6 132.1 224.3 142.6 251.2 148.3 269.8 148.4 278.8 143.9 278.6 136.8 268.3 130.0 245.5 127.8 210.4"/>
<path d="M127.8 210.4 133.1 171.6 142.6 142.2 150.5 128.9 153.0 132.7 148.5 154.3 137.9 191.9 127.6 234.5 123.8 267.2 126.7 285.5 134.0 292.3"/>
<path d="M134.0 292.3 143.7 290.6 153.5 280.0 160.8 258.5 162.1 226.6 156.8 192.3 149.5 166.6 146.2 154.5 150.2 155.5 161.4 166.2 176.0 181.0"/>
<path d="M176.0 181.0 187.7 193.0 191.6 196.1 186.0 186.6 172.7 164.2 157.6 133.5 148.3 103.9 147.7 82.7 153.4 70.7 162.1 65.7 170.2 65.9"/>
<path d="M170.2 65.9 174.6 70.8 173.0 81.0 164.5 96.5 151.2 114.8 138.8 131.7 133.4 143.2 137.5 148.3 148.7 149.0 162.2 148.8 172.6 151.4"/>
<path d="M172.6 151.4 176.2 159.4 172.3 174.1 162.7 194.2 151.8 215.5 144.0 233.3 141.2 244.0 142.9 246.2 147.8 239.1 154.2 222.3 160.6 196.8"/>
<path d="M160.6 196.8 165.7 166.6 168.8 138.2 170.6 116.2 171.5 101.4 171.3 92.4 169.5 87.5 165.5 85.0 159.3 84.1 151.8 84.5 144.8 86.5"/>
<path d="M144.8 86.5 139.6 90.9 137.5 99.3 138.9 113.7 143.3 135.5 149.5 163.7 155.2 193.0 158.7 216.0 160.1 227.5 160.8 225.3 161.8 207.9"/>
<path d="M161.8 207.9 163.3 175.8 164.3 136.8 164.0 103.7 162.6 83.4 160.4 74.7 157.4 75.2 153.7 85.4 149.2 109.4 144.4 149.4 141.1 196.6"/>
<path d="M141.1 196.6 140.4 234.1 141.3 254.8 142.9 260.9 144.9 255.9 147.2 242.4 149.2 224.7 149.9 209.9 148.3 204.5 144.1 211.0 138.1 227.2"/>
<path d="M138.1 227.2 132.3 246.9 128.9 263.2 128.5 272.1 131.1 272.6 136.4 264.2 143.5 246.2 150.1 220.9 152.8 196.2 149.7 182.3 142.2 185.7"/>
<path d="M142.2 185.7 133.7 208.0 129.6 243.5 132.4 277.6 139.3 299.7 146.8 310.6 153.2 314.9 156.7 315.5 156.2 312.9 151.8 305.8 144.2 291.8"/>
<path d="M144.2 291.8 135.4 269.7 129.9 243.9 131.4 223.0 139.3 212.5 149.2 212.2 156.0 217.9 156.5 224.0 150.6 226.3 140.6 222.1 130.1 210.9"/>
<path d="M130.1 210.9 123.2 194.4 122.7 176.9 127.9 163.3 135.6 157.5 142.4 160.9 146.2 173.5 146.9 192.6 146.6 213.4 148.1 230.7 152.8 241.2"/>
<path d="M152.8 241.2 160.8 243.8 170.0 238.4 177.4 225.4 178.9 206.1 172.6 183.5 160.3 161.5 147.1 143.1 138.3 129.6 136.4 120.8 141.3 115.9"/>
<path d="M141.3 115.9 150.4 114.4 159.5 116.1 164.9 121.5 164.0 131.4 157.0 146.8 146.7 167.9 138.2 193.0 135.9 218.4 140.6 239.5 149.6 253.3"/>
<path d="M149.6 253.3 159.1 258.8 166.4 255.4 169.8 241.7 168.2 215.9 162.3 179.4 155.7 140.0 152.2 107.9 152.5 87.3 155.0 76.6 157.7 73.2"/>
<path d="M157.7 73.2 159.1 75.6 158.1 84.3 154.3 100.5 148.2 124.7 142.0 153.8 138.4 181.1 138.5 200.5 141.2 209.1 144.6 206.5 147.7 193.6"/>
<path d="M147.7 193.6 150.0 172.8 152.1 148.5 154.9 126.4 159.2 110.5 164.5 102.0 170.3 100.6 174.9 106.2 176.7 118.7 174.1 136.9 167.0 157.8"/>
<path d="M167.0 157.8 157.7 176.3 149.5 188.1 145.1 190.7 144.8 184.2 147.6 170.4 150.9 152.5 152.2 135.1 150.5 121.2 146.6 112.4 142.2 108.4"/>
<path d="M142.2 108.4 139.5 108.2 140.3 110.4 145.4 113.4 153.7 115.8 162.9 117.0 170.4 117.0 174.3 117.1 174.1 118.9 170.6 124.1 165.2 133.9"/>
<path d="M165.2 133.9 159.2 148.7 153.7 167.1 149.2 186.1 145.6 201.7 142.5 211.1 139.6 213.0 137.2 208.2 136.3 198.4 137.3 187.1 140.0 178.2"/>
<path d="M140.0 178.2 143.4 175.1 145.7 179.4 145.4 191.1 142.0 207.8 136.3 225.4 130.6 240.1 126.7 249.2 125.8 252.2 128.6 249.1 134.5 240.8"/>
<path d="M134.5 240.8 142.2 228.4 149.5 214.0 154.3 199.7 155.6 187.0 154.2 176.4 152.0 167.3 151.0 158.8 152.3 150.4 156.0 142.4 160.6 136.1"/>
<path d="M160.6 136.1 164.6 132.7 166.7 133.8 166.7 140.0 165.0 151.5 163.1 166.4 162.8 181.5 165.2 192.9 169.8 197.8 175.2 195.5 178.8 187.5"/>
<path d="M178.8 187.5 178.0 177.8 171.7 172.1 160.1 175.9 145.1 193.3 130.5 224.1 121.6 259.8 120.1 288.2 122.7 304.5 127.0 311.9 132.1 313.8"/>
<path d="M132.1 313.8 137.0 311.6 141.3 303.0 144.3 281.8 145.8 241.4 145.3 189.4 143.3 148.3 141.1 128.7 139.5 128.5 139.5 143.8 142.6 169.6"/>
<path d="M142.6 169.6 148.7 196.2 156.2 213.5 163.4 216.2 168.8 203.4 170.5 177.8 167.1 147.8 160.2 124.1 152.4 113.1 145.1 116.5 139.4 136.5"/>
<path d="M139.4 136.5 137.2 174.5 140.1 221.6 146.1 260.5 151.8 283.1 156.2 292.5 159.4 292.8 161.5 284.7 163.0 266.2 163.6 236.1 163.0 199.1"/>
<path d="M163.0 199.1 160.9 165.4 157.7 142.1 153.4 129.9 147.9 126.8 141.7 130.4 136.4 139.0 134.1 151.1 136.9 165.7 145.2 181.6 157.3 197.4"/>
<path d="M157.3 197.4 169.6 211.5 177.9 221.5 179.8 225.4 174.3 221.1 161.9 206.7 145.2 181.7 129.7 150.0 121.0 119.6 119.8 97.7 123.2 86.1"/>
<path d="M123.2 86.1 127.9 83.9 132.0 91.0 133.9 109.3 133.1 139.5 131.0 175.6 130.0 205.0 131.7 218.9 136.8 215.1 145.4 193.5 155.4 158.7"/>
<path d="M155.4 158.7 162.6 122.5 164.5 96.5 162.3 83.1 158.1 80.2 153.6 86.7 151.0 103.8 153.0 132.8 161.0 168.9 172.5 201.8 182.6 224.1"/>
<path d="M182.6 224.1 188.3 235.2 187.8 238.2 180.8 236.8 168.9 234.7 155.8 234.9 145.6 238.6 141.3 244.6 143.0 250.3 148.5 252.9 154.9 250.3"/>
<path d="M154.9 250.3 159.1 241.3 158.6 226.0 152.5 206.9 142.6 189.1 132.6 177.7 126.2 175.7 125.3 183.4 130.2 198.0 138.5 214.4 146.5 227.3"/>
<path d="M146.5 227.3 151.2 233.0 151.3 230.6 147.0 220.5 140.7 205.7 136.0 190.9 136.4 181.5 143.5 180.5 156.2 187.7 170.9 199.5 183.0 209.7"/>
<path d="M183.0 209.7 188.6 211.9 185.9 201.3 174.5 175.2 157.6 137.9 143.0 102.0 135.7 78.1 134.9 66.4 138.6 63.3 145.5 67.4 153.9 81.0"/>
<path d="M153.9 81.0 161.8 108.0 165.5 145.8 162.2 179.3 154.8 193.9 147.9 185.0 145.4 155.3 149.0 117.4 156.2 88.0 163.3 72.9 168.8 69.6"/>
<path d="M168.8 69.6 171.9 77.7 171.4 104.4 164.4 160.8 152.2 231.6 144.5 279.4 143.3 299.9 146.6 305.9 153.1 303.4 162.0 290.9 171.6 261.6"/>
<path d="M171.6 261.6 176.8 212.0 170.7 157.8 157.7 119.5 144.8 100.3 134.7 94.3 128.9 97.2 128.4 106.5 133.4 120.3 142.0 136.3 150.5 152.4"/>
<path d="M150.5 152.4 155.2 167.7 154.1 182.5 147.5 197.0 138.1 211.2 129.2 223.8 123.7 233.3 123.1 238.3 127.2 238.2 135.3 233.2 145.7 224.8"/>
<path d="M145.7 224.8 156.2 215.7 164.0 209.5 167.6 208.9 166.5 214.9 161.6 225.6 155.0 237.1 148.9 245.1 144.9 246.4 143.7 238.9 145.9 221.9"/>
<path d="M145.9 221.9 151.2 197.1 158.0 171.5 164.2 153.8 168.5 149.9 170.5 163.0 169.2 193.6 164.1 233.8 157.4 268.5 151.3 289.2 146.1 297.8"/>
<path d="M146.1 297.8 141.0 297.2 135.2 286.4 128.1 258.9 121.6 209.3 121.5 151.0 127.3 109.0 134.2 88.4 140.6 83.0 146.3 88.7 151.1 105.2"/>
<path d="M151.1 105.2 153.7 132.2 153.1 164.1 149.6 191.8 145.1 209.4 141.6 216.8 140.6 216.7 142.5 212.6 146.5 207.4 151.0 202.9 154.1 198.9"/>
<path d="M154.1 198.9 154.3 193.4 151.4 183.7 146.4 167.7 141.6 146.0 139.1 122.2 139.9 102.0 142.9 88.7 147.1 83.1 151.3 85.3 154.7 96.6"/>
<path d="M154.7 96.6 157.0 119.1 157.6 152.7 157.0 189.7 156.9 219.4 158.5 236.5 162.4 242.1 167.7 238.9 172.8 230.7 175.2 222.1 173.0 217.7"/>
<path d="M173.0 217.7 165.8 219.7 155.3 227.2 144.4 236.4 136.2 242.4 132.3 241.0 133.5 228.8 139.6 203.6 148.5 167.9 155.6 131.4 157.2 104.6"/>
<path d="M157.2 104.6 153.4 90.5 145.3 87.5 134.2 94.7 121.8 113.4 112.5 143.8 112.2 180.0 122.2 211.7 137.6 232.5 153.5 242.9 166.4 246.0"/>
<path d="M166.4 246.0 173.9 245.6 175.1 245.2 171.0 247.0 164.2 250.9 158.0 254.4 154.1 253.6 153.1 243.8 153.9 219.1 154.6 175.6 153.1 122.9"/>
<path d="M153.1 122.9 149.8 82.4 146.3 61.4 143.2 53.0 141.3 51.1 141.1 53.9 142.5 64.7 145.5 92.9 150.8 147.0 156.1 208.7 158.8 248.7"/>
<path d="M158.8 248.7 159.8 263.6 161.0 259.9 163.1 239.7 166.2 205.7 168.8 168.9 170.3 143.2 170.8 134.6 170.8 143.2 170.0 167.7 168.6 202.1"/>
<path d="M168.6 202.1 167.1 234.9 166.1 257.3 165.5 268.1 164.3 269.4 161.2 263.4 155.5 252.2 147.8 239.1 140.9 228.3 138.0 222.4 141.1 221.2"/>
<path d="M141.1 221.2 149.9 221.9 161.5 220.6 172.4 213.8 178.7 199.8 177.7 179.5 169.9 157.4 159.2 140.0 150.4 131.9 146.5 136.0 148.5 153.9"/>
<path d="M148.5 153.9 155.2 185.1 162.1 222.2 164.0 253.8 160.0 273.5 151.7 281.9 140.8 281.3 129.4 271.9 119.7 253.3 115.2 226.7 117.5 198.3"/>
<path d="M117.5 198.3 123.9 175.7 129.8 162.7 132.3 159.0 131.2 161.4 128.9 166.0 128.7 168.7 132.9 166.9 141.5 160.2 152.1 150.5 160.3 141.3"/>
<path d="M160.3 141.3 163.0 136.3 159.0 138.2 149.6 148.9 138.2 168.9 130.2 196.1 129.8 224.8 136.4 249.2 146.1 266.2 154.6 276.2 159.5 280.9"/>
<path d="M159.5 280.9 159.9 281.7 156.9 279.7 153.0 275.7 151.5 269.9 154.4 262.1 161.8 251.7 170.8 237.3 176.6 217.6 174.3 192.5 162.5 164.4"/>
<path d="M162.5 164.4 145.4 137.5 130.4 116.1 122.9 101.7 124.4 94.0 133.9 91.8 148.9 94.2 164.9 100.0 177.1 108.1 181.3 116.5 176.5 123.5"/>
<path d="M176.5 123.5 165.1 128.2 152.0 130.6 141.4 131.4 135.5 131.8 133.8 132.1 134.3 132.1 134.7 130.7 134.4 126.6 134.2 118.9 136.2 108.0"/>
<path d="M136.2 108.0 141.6 96.2 149.9 86.1 158.9 79.7 166.1 78.4 169.4 83.8 166.5 98.8 155.7 128.0 138.2 171.3 122.5 216.6 116.3 248.8"/>
<path d="M116.3 248.8 118.9 263.5 127.4 262.2 140.2 244.0 155.1 205.9 166.1 155.0 168.0 111.4 164.4 86.6 160.1 77.6 157.6 80.7 158.8 97.3"/>
<path d="M158.8 97.3 164.9 132.5 173.8 183.0 179.0 229.1 178.2 255.9 173.1 263.5 164.1 254.3 151.3 226.9 137.2 183.0 128.5 137.1 127.5 105.2"/>
<path d="M127.5 105.2 131.1 89.9 136.2 87.6 141.4 96.4 145.6 117.2 147.5 148.5 146.4 182.1 143.1 207.7 139.2 220.1 136.1 219.7 134.8 209.3"/>
<path d="M134.8 209.3 135.9 193.5 139.3 178.2 144.2 169.2 149.3 169.6 154.1 179.7 158.0 197.2 160.7 217.0 162.6 233.6 164.1 243.5 165.7 245.8"/>
<path d="M165.7 245.8 167.3 241.0 168.2 230.6 167.2 218.0 163.3 207.8 156.7 204.4 148.6 209.9 141.2 223.6 137.0 241.4 137.4 258.1 141.5 269.7"/>
<path d="M141.5 269.7 147.7 274.8 153.7 273.0 157.6 264.0 156.9 247.5 150.6 225.7 140.5 204.2 131.1 190.0 127.4 187.6 132.1 197.8 144.7 218.1"/>
<path d="M144.7 218.1 160.2 241.9 172.0 262.1 176.4 274.8 173.2 279.6 163.5 276.6 149.6 265.1 135.5 244.5 127.6 216.7 131.1 188.6 144.8 168.3"/>
<path d="M144.8 168.3 161.9 159.9 175.2 163.7 178.8 177.6 169.8 197.3 151.8 216.5 132.6 229.9 119.5 234.8 117.0 230.5 127.0 217.8 146.9 199.2"/>
<path d="M146.9 199.2 169.4 179.3 185.1 163.7 188.7 156.1 180.1 157.8 163.4 168.2 145.6 184.9 134.8 203.8 135.8 220.2 147.6 231.1 165.0 235.3"/>
<path d="M165.0 235.3 181.7 233.1 191.7 225.6 190.6 214.2 178.2 200.9 159.0 187.4 140.1 174.5 128.3 162.0 126.9 149.4 134.9 136.1 147.7 122.7"/>
<path d="M147.7 122.7 159.3 110.3 165.8 100.8 165.7 95.5 160.3 95.7 151.9 102.7 143.2 118.0 137.5 142.6 137.6 173.2 143.4 202.0 151.3 221.0"/>
<path d="M151.3 221.0 157.6 226.5 159.7 217.0 156.0 191.9 146.7 155.0 135.9 117.6 127.8 90.3 123.3 75.2 121.6 69.0 122.4 69.6 125.3 76.7"/>
<path d="M125.3 76.7 129.8 91.9 135.6 116.3 141.9 147.0 146.6 176.4 148.3 197.7 147.3 208.9 144.9 211.2 142.3 206.9 140.9 198.4 141.5 188.1"/>
<path d="M141.5 188.1 144.5 177.2 149.3 166.5 155.1 155.9 160.7 145.2 165.3 135.0 168.1 126.6 169.3 121.7 168.9 122.4 167.3 131.0 164.3 149.8"/>
<path d="M164.3 149.8 159.7 179.5 154.2 215.8 149.0 249.1 145.5 272.2 143.8 284.3 143.6 287.2 144.9 281.6 147.9 265.2 152.7 235.1 158.1 193.7"/>
<path d="M158.1 193.7 161.6 153.1 161.8 124.7 159.4 110.6 155.2 108.9 149.7 117.5 144.2 135.2 140.4 158.7 140.2 182.6 144.0 201.5 150.8 212.9"/>
<path d="M150.8 212.9 158.8 217.4 165.9 216.9 170.5 214.2 171.3 211.6 168.1 210.9 162.2 212.6 155.3 215.6 149.3 218.5 145.8 219.7 144.9 218.3"/>
<path d="M144.9 218.3 146.1 214.6 148.0 209.7 149.0 205.7 148.0 204.9 144.9 208.6 140.7 216.6 137.0 227.1 135.4 237.0 136.5 243.3 139.9 243.6"/>
<path d="M139.9 243.6 144.6 236.3 149.0 220.3 151.3 196.3 150.0 168.3 145.5 142.7 139.7 124.2 134.8 114.2 132.1 111.8 132.7 115.5 136.7 123.2"/>
<path d="M136.7 123.2 143.1 132.2 149.7 139.2 154.0 142.0 154.2 140.2 150.5 135.3 144.4 130.3 138.4 128.3 134.6 131.6 134.4 141.9 138.6 159.2"/>
<path d="M138.6 159.2 146.5 181.8 155.7 205.3 163.4 225.0 167.8 238.5 168.9 245.9 167.4 248.8 164.0 249.7 159.9 251.3 156.0 255.7 153.3 263.3"/>
<path d="M153.3 263.3 151.9 272.6 152.2 281.0 154.3 286.0 158.6 285.8 165.7 278.2 176.4 258.7 190.1 221.4 199.6 168.4 197.3 118.0 186.9 85.7"/>
<path d="M186.9 85.7 174.1 70.3 160.2 65.4 145.6 67.8 131.5 78.0 120.0 98.6 116.0 129.5 123.9 162.7 140.4 186.9 158.0 196.1 170.3 190.5"/>
<path d="M170.3 190.5 173.4 173.6 166.2 151.9 152.8 133.2 139.2 122.4 130.1 121.4 128.6 130.7 136.5 149.8 152.4 175.8 170.2 202.2 182.9 222.4"/>
<path d="M182.9 222.4 186.8 232.9 182.3 233.4 171.1 224.4 156.5 207.2 143.2 185.0 135.6 162.4 134.7 143.8 137.9 131.7 141.4 126.4 141.9 127.4"/>
<path d="M141.9 127.4 137.9 134.3 129.8 146.4 120.6 162.8 114.7 181.5 115.5 200.2 123.7 216.0 136.8 226.9 151.0 231.3 162.8 228.3 169.8 216.8"/>
<path d="M169.8 216.8 170.5 196.9 165.6 170.7 158.1 143.5 152.1 121.3 149.6 107.5 150.5 102.9 153.4 107.7 156.8 122.6 158.7 148.2 157.3 180.6"/>
<path d="M157.3 180.6 152.4 211.4 146.1 233.0 140.2 242.8 135.9 241.1 133.4 228.9 133.1 208.1 135.0 184.1 137.9 164.1 140.8 153.7 143.2 155.6"/>
<path d="M143.2 155.6 145.1 170.1 146.8 195.6 147.9 226.0 148.2 253.2 147.4 272.5 145.7 283.5 143.5 288.0 141.3 287.5 140.1 282.4 140.6 272.6"/>
<path d="M140.6 272.6 143.5 258.1 148.8 239.0 155.2 216.3 160.3 191.8 161.9 167.8 159.3 147.0 153.4 131.4 146.2 122.5 139.4 121.3 134.3 129.0"/>
<path d="M134.3 129.0 132.5 146.9 134.9 174.7 141.2 207.5 149.1 236.5 155.5 255.6 159.5 262.9 160.9 258.2 159.3 239.6 154.2 205.7 146.6 162.2"/>
<path d="M146.6 162.2 139.8 123.5 135.6 99.4 133.7 89.5 133.7 91.6 135.8 106.2 140.7 135.9 148.7 178.3 157.5 221.1 164.0 252.1 168.0 269.2"/>
<path d="M168.0 269.2 170.2 276.2 171.1 276.4 170.9 272.5 169.6 266.9 167.8 262.1 166.1 259.5 165.3 259.0 165.7 258.5 167.3 255.4 169.7 246.8"/>
<path d="M169.7 246.8 171.5 230.2 170.8 204.9 165.7 174.4 156.7 146.3 146.1 126.9 136.2 118.5 128.8 120.5 125.6 131.3 128.4 147.7 137.2 163.5"/>
<path d="M137.2 163.5 148.8 171.3 159.0 166.1 163.7 147.7 160.7 121.8 152.4 98.0 142.7 82.8 134.4 77.3 129.1 81.7 127.9 99.4 133.3 137.0"/>
<path d="M133.3 137.0 146.0 191.3 158.9 240.0 165.4 267.3 166.0 274.7 161.9 264.3 153.3 231.5 142.1 174.7 135.9 116.8 136.9 81.8 141.0 67.4"/>
<path d="M141.0 67.4 146.5 64.8 152.6 71.5 158.5 90.9 163.4 127.4 165.3 173.2 164.3 208.7 163.3 222.9 164.0 215.4 166.0 188.4 167.4 149.7"/>
<path d="M167.4 149.7 166.6 114.5 164.0 92.5 160.8 83.5 157.3 85.2 154.1 97.5 151.3 122.1 149.2 156.9 147.7 192.7 145.9 219.8 143.4 235.0"/>
<path d="M143.4 235.0 140.2 240.7 137.4 240.5 136.6 238.6 139.4 238.8 146.0 243.4 154.9 252.3 163.5 262.8 169.4 271.7 171.4 276.4 169.9 275.5"/>
<path d="M169.9 275.5 165.4 267.4 159.0 250.4 151.9 223.9 146.1 191.8 143.3 162.0 143.0 141.3 143.6 131.5 143.8 131.4 143.5 138.8 143.1 150.4"/>
<path d="M143.1 150.4 143.9 161.6 146.7 167.8 151.4 165.9 156.6 155.5 160.1 139.0 160.3 121.1 156.9 106.4 151.0 97.5 144.2 95.2 138.0 99.9"/>
<path d="M138.0 99.9 133.9 112.4 133.3 132.8 136.8 158.5 143.0 183.6 148.9 201.7 152.4 209.0 153.1 204.5 151.5 188.7 149.3 164.5 148.0 138.1"/>
<path d="M148.0 138.1 148.5 116.3 149.9 102.8 151.2 98.3 151.2 102.8 148.9 117.3 144.0 142.8 137.8 176.2 133.2 209.1 132.1 233.1 134.3 245.2"/>
<path d="M134.3 245.2 138.8 245.9 144.4 236.3 149.5 218.3 152.0 196.7 150.4 178.8 145.3 171.1 138.3 177.2 131.9 197.4 129.2 227.3 131.8 257.1"/>
<path d="M131.8 257.1 137.8 278.7 145.3 290.3 153.1 293.4 160.9 288.8 168.5 274.3 175.3 246.7 178.8 207.6 177.1 168.8 172.6 142.8 168.2 134.0"/>
<path d="M168.2 134.0 165.0 142.0 162.8 166.3 160.9 202.4 158.4 239.4 155.2 266.9 151.6 282.6 147.3 289.0 142.6 288.6 137.9 281.8 134.0 268.3"/>
<path d="M134.0 268.3 132.5 247.7 135.0 221.6 141.7 193.7 150.5 168.0 158.5 146.9 163.8 131.2 165.4 120.5 163.9 114.9 160.1 114.4 155.5 119.8"/>
<path d="M155.5 119.8 151.1 132.1 147.8 152.0 145.9 178.2 144.9 206.2 143.7 230.1 141.0 246.1 136.5 253.5 130.0 253.0 122.3 245.5 115.0 233.0"/>
<path d="M115.0 233.0 110.1 218.8 109.6 207.4 113.6 202.4 121.2 204.8 130.5 213.0 139.5 222.7 146.3 229.3 150.2 228.8 151.3 218.4 150.4 196.6"/>
<path d="M150.4 196.6 149.1 165.7 149.3 133.4 152.2 108.1 157.6 93.3 165.3 88.0 174.8 91.1 185.5 102.3 195.3 121.3 200.6 144.7 198.7 166.0"/>
<path d="M198.7 166.0 189.9 179.3 176.9 182.3 162.5 176.3 149.7 165.0 140.7 153.3 136.7 145.5 137.3 143.9 141.6 148.6 148.1 157.9 155.3 168.5"/>
<path d="M155.3 168.5 161.5 176.3 166.0 177.9 168.4 172.5 169.1 161.7 168.6 149.6 167.7 140.8 167.0 139.1 166.6 147.2 166.3 166.1 165.4 193.5"/>
<path d="M165.4 193.5 163.1 223.0 160.0 247.0 156.5 261.6 153.1 267.1 149.9 264.8 147.0 256.1 144.8 243.5 143.3 231.4 142.6 225.0 141.8 227.2"/>
<path d="M141.8 227.2 140.4 237.3 138.0 251.1 134.6 263.2 130.8 269.8 126.8 268.7 123.4 257.9 121.8 234.7 124.1 199.2 131.4 159.2 140.8 126.6"/>
<path d="M140.8 126.6 149.2 107.1 155.8 99.4 160.7 101.0 164.7 109.7 168.1 122.8 170.9 135.2 172.9 141.3 173.4 137.7 171.4 125.1 166.5 108.3"/>
<path d="M166.5 108.3 159.5 93.0 151.8 83.1 144.4 79.5 138.4 82.7 134.7 94.1 134.6 116.0 139.0 147.7 146.8 182.3 154.0 209.7 157.4 224.4"/>
<path d="M157.4 224.4 156.0 225.8 150.3 215.1 141.7 194.6 133.4 169.4 128.7 146.0 128.6 129.5 132.0 121.6 137.0 122.0 141.8 129.6 145.1 142.8"/>
<path d="M145.1 142.8 145.7 158.8 144.0 173.7 141.5 184.0 140.2 187.8 141.7 184.7 146.5 175.9 153.9 163.7 161.9 150.9 168.7 140.2 172.8 133.3"/>
<path d="M172.8 133.3 173.8 130.8 172.0 132.5 168.1 137.5 163.2 144.3 158.3 151.2 154.3 156.3 151.6 158.4 150.3 157.5 150.2 154.4 150.8 151.0"/>
<path d="M150.8 151.0 151.9 149.5 153.0 151.6 153.8 158.6 154.0 170.5 153.3 186.0 151.9 202.0 150.0 215.2 148.1 222.9 146.6 223.9 145.9 218.6"/>
<path d="M145.9 218.6 145.9 208.8 146.6 197.9 147.3 190.9 147.6 192.1 146.8 204.2 145.2 226.0 143.3 252.1 141.7 274.6 140.8 289.1 140.8 295.7"/>
<path d="M140.8 295.7 141.6 295.0 143.6 285.7 147.3 262.5 153.3 220.0 160.1 165.4 164.2 120.1 165.2 94.6 164.0 85.5 160.8 88.6 155.1 104.1"/>
<path d="M155.1 104.1 146.6 134.0 136.8 175.0 129.8 215.4 127.3 245.0 128.3 262.4 131.4 271.4 135.2 275.9 138.6 279.2 140.7 283.4 141.2 288.9"/>
<path d="M141.2 288.9 140.4 294.6 139.4 299.0 139.1 300.4 140.2 297.2 143.4 286.1 149.5 260.0 158.6 211.2 167.0 148.9 170.1 100.5 170.0 75.7"/>
<path d="M170.0 75.7 169.0 66.7 168.1 67.3 167.7 77.6 168.1 101.6 168.3 141.6 166.9 186.2 163.9 217.8 160.7 229.5 157.6 222.5 155.0 199.4"/>
<path d="M155.0 199.4 153.5 167.3 153.6 138.2 155.4 121.4 158.1 119.8 161.0 134.9 162.6 167.9 161.4 212.7 157.7 253.2 154.1 278.6 152.0 290.0"/>
<path d="M152.0 290.0 151.9 291.4 154.0 283.5 158.4 263.7 164.3 229.2 168.5 185.0 168.1 144.8 164.0 118.0 158.1 104.8 151.5 102.0 144.8 107.4"/>
<path d="M144.8 107.4 138.3 119.8 132.2 137.3 126.8 157.2 122.2 175.6 118.8 189.5 117.3 197.4 119.3 198.9 126.2 194.4 138.5 184.7 154.7 171.6"/>
<path d="M154.7 171.6 171.1 157.6 183.1 145.8 187.1 138.8 181.9 139.1 168.0 148.4 147.9 168.2 127.1 197.3 113.5 230.1 111.3 258.3 117.6 277.2"/>
<path d="M117.6 277.2 127.7 286.6 138.3 287.8 147.4 280.7 153.3 262.3 155.2 229.1 152.9 183.9 149.7 140.2 149.0 109.9 151.7 94.4 157.0 90.2"/>
<path d="M157.0 90.2 163.4 94.9 169.3 108.0 172.2 128.4 170.4 152.4 164.8 174.0 158.2 188.2 153.5 193.6 151.9 191.0 152.6 183.2 153.6 173.2"/>
<path d="M153.6 173.2 152.2 164.1 147.2 157.7 139.1 154.4 130.0 153.0 123.2 151.6 121.7 148.3 126.7 141.8 136.9 132.2 149.0 121.0 159.2 110.8"/>
<path d="M159.2 110.8 165.0 103.9 166.0 102.0 162.9 106.6 157.2 118.9 150.6 140.0 144.6 168.4 140.6 198.3 138.2 222.6 136.1 236.8 133.0 240.2"/>
<path d="M133.0 240.2 129.1 232.9 125.8 215.8 125.9 191.4 131.3 166.1 141.7 146.4 154.5 136.5 167.7 137.5 178.9 149.1 185.9 169.5 186.7 193.6"/>
<path d="M186.7 193.6 182.2 214.1 175.5 225.4 169.2 224.5 164.2 209.9 160.3 182.1 156.6 146.7 153.1 114.2 149.7 92.1 146.7 80.7 144.1 78.0"/>
<path d="M144.1 78.0 142.4 82.8 141.6 96.1 141.7 118.8 142.3 148.7 142.3 178.3 141.0 200.7 138.8 213.1 137.3 217.1 138.5 216.3 144.0 214.9"/>
<path d="M144.0 214.9 153.5 217.2 164.9 225.4 174.5 239.2 178.8 255.2 176.9 268.9 170.4 277.4 161.4 279.4 152.1 273.8 144.0 258.6 139.2 231.9"/>
<path d="M139.2 231.9 139.3 196.4 143.5 161.6 148.4 137.0 151.5 125.9 151.9 127.6 150.3 140.9 148.3 163.5 148.1 190.0 150.7 213.7 155.4 230.4"/>
<path d="M155.4 230.4 160.2 239.8 162.7 244.3 160.8 247.1 154.0 251.7 143.8 260.2 133.5 272.2 126.5 284.8 124.3 294.7 126.4 300.5 131.9 301.4"/>
<path d="M131.9 301.4 139.7 296.4 149.3 281.4 160.8 248.2 171.2 192.7 174.1 132.5 170.3 91.9 164.7 72.1 158.7 64.6 152.5 64.2 146.2 68.9"/>
<path d="M146.2 68.9 140.1 78.7 135.5 92.1 134.2 105.5 137.5 114.5 144.9 116.9 154.5 114.6 163.6 111.3 170.5 111.3 173.9 117.7 173.4 132.9"/>
<path d="M173.4 132.9 168.7 157.4 161.1 187.4 153.5 214.9 148.9 233.0 148.3 239.5 151.4 234.4 157.5 219.1 164.9 197.1 171.4 175.5 175.0 161.3"/>
<path d="M175.0 161.3 175.7 158.8 173.7 168.7 169.3 188.9 163.5 213.0 157.7 233.0 153.2 243.1 150.1 240.8 148.2 224.1 147.2 192.7 146.8 152.8"/>
<path d="M146.8 152.8 146.7 117.3 146.3 94.7 145.3 84.9 143.7 85.7 141.5 97.3 139.2 122.8 137.9 162.5 138.9 207.2 141.5 243.5 144.1 265.8"/>
<path d="M144.1 265.8 145.7 276.8 146.0 280.1 144.8 278.6 142.2 274.1 138.3 269.0 133.9 265.4 129.7 264.8 126.2 267.1 123.8 270.8 122.3 274.0"/>
<path d="M122.3 274.0 121.4 274.6 121.0 270.8 121.0 260.4 121.9 241.1 124.7 211.2 130.0 173.7 136.9 137.2 143.1 109.7 147.6 93.5 150.8 87.3"/>
<path d="M150.8 87.3 153.3 89.6 155.8 101.3 158.9 124.1 162.3 157.3 164.7 193.4 165.2 221.7 163.9 236.0 161.3 235.2 157.7 218.4 153.5 185.8"/>
<path d="M153.5 185.8 150.5 144.7 150.0 109.1 151.6 87.0 154.5 77.6 157.6 78.3 160.4 89.9 161.9 117.2 160.4 162.3 155.9 213.4 151.3 251.6"/>
<path d="M151.3 251.6 149.1 271.3 149.9 276.6 153.7 270.2 160.2 252.0 167.8 222.6 172.8 188.5 172.5 160.5 167.3 145.1 159.2 142.8 150.1 152.0"/>
<path d="M150.1 152.0 142.7 169.3 140.1 189.5 143.4 206.7 151.8 216.9 162.9 219.3 173.9 214.7 181.6 205.5 183.3 194.7 178.3 185.0 168.1 178.0"/>
<path d="M168.1 178.0 155.7 173.5 144.6 169.8 137.8 164.5 136.6 156.1 140.8 144.4 147.9 131.2 154.8 119.6 159.3 112.7 160.3 112.6 158.2 121.3"/>
<path d="M158.2 121.3 154.3 140.1 150.8 167.9 150.4 198.5 154.0 222.8 160.7 234.6 168.5 231.3 175.1 211.1 176.5 174.2 170.3 130.4 160.0 95.4"/>
<path d="M160.0 95.4 150.8 75.3 144.5 66.9 141.7 66.6 142.7 74.5 147.6 94.5 156.0 132.0 164.5 182.6 166.8 228.5 162.8 257.5 155.4 270.7"/>
<path d="M155.4 270.7 146.8 272.5 138.5 265.2 132.4 249.7 129.9 227.7 131.6 203.5 135.3 182.6 137.7 168.7 136.3 163.0 130.4 165.2 121.1 174.3"/>
<path d="M121.1 174.3 111.0 188.6 103.7 205.9 102.0 223.4 106.4 238.6 115.6 249.5 127.5 255.1 140.4 254.9 152.9 248.1 163.8 234.4 171.7 214.4"/>
<path d="M171.7 214.4 175.0 191.2 173.2 170.2 167.4 156.4 159.5 152.8 150.7 160.3 142.6 178.1 137.0 202.6 135.1 227.1 136.7 245.6 140.4 255.2"/>
<path d="M140.4 255.2 145.2 255.8 150.1 247.8 154.2 232.6 156.8 213.6 157.2 197.1 155.6 188.7 152.9 191.1 149.7 203.0 146.6 219.6 144.2 233.9"/>
<path d="M144.2 233.9 142.4 239.8 141.3 233.2 141.5 210.3 144.0 170.5 149.3 124.5 155.5 89.2 161.4 70.1 167.3 62.5 173.4 62.5 179.7 69.9"/>
<path d="M179.7 69.9 186.1 88.6 190.5 122.5 187.8 165.5 177.7 200.6 164.7 217.2 151.9 214.9 140.4 196.9 132.4 170.5 129.8 147.0 132.0 135.6"/>
<path d="M132.0 135.6 137.5 140.9 145.1 165.6 152.9 207.4 157.1 251.3 156.7 281.3 153.5 295.5 148.8 298.5 143.1 291.5 137.2 269.2 132.7 223.1"/>
<path d="M132.7 223.1 134.2 160.8 140.9 111.5 147.6 86.7 152.6 79.5 156.1 84.8 158.6 103.5 160.5 136.8 162.1 176.9 164.0 208.2 166.7 221.6"/>
<path d="M166.7 221.6 169.7 216.2 170.9 193.6 167.6 160.0 159.9 127.4 150.8 105.7 143.0 96.8 137.9 99.7 136.8 114.6 141.3 141.6 150.5 175.2"/>
<path d="M150.5 175.2 160.0 204.4 165.3 220.6 164.6 221.7 158.1 208.4 147.7 183.9 138.3 156.3 134.1 135.3 136.3 126.7 143.5 132.9 153.8 155.8"/>
<path d="M153.8 155.8 163.2 193.8 166.2 235.8 162.2 267.4 155.1 284.3 147.7 289.3 141.5 283.9 137.8 265.1 138.0 228.0 142.8 176.5 148.4 129.6"/>
<path d="M148.4 129.6 150.6 101.1 148.5 89.5 142.9 90.3 134.6 102.4 125.8 125.5 120.4 155.0 121.3 180.6 127.7 192.6 136.9 186.9 146.7 164.1"/>
<path d="M146.7 164.1 155.0 131.5 160.1 101.3 162.6 82.0 163.8 73.9 164.6 75.5 164.7 89.8 163.0 125.5 156.9 188.1 148.2 253.4 142.6 292.5"/>
<path d="M142.6 292.5 140.6 308.8 141.5 314.5 145.2 315.2 151.0 311.9 157.9 302.2 164.3 280.8 166.6 243.5 160.2 197.5 147.4 159.2 135.3 137.4"/>
<path d="M135.3 137.4 128.3 131.1 128.9 137.4 137.8 154.2 153.1 178.6 168.5 205.8 177.2 231.2 176.5 251.8 168.3 267.3 157.0 278.6 146.9 286.7"/>
<path d="M146.9 286.7 141.5 292.3 141.9 295.9 147.4 297.4 155.3 296.6 162.5 292.7 166.3 284.1 164.5 268.4 156.2 242.0 142.9 204.1 131.1 160.0"/>
<path d="M131.1 160.0 127.3 120.7 131.1 93.2 138.5 77.3 146.2 69.7 152.2 68.3 155.1 72.5 154.3 84.3 149.6 107.8 142.2 146.5 136.4 195.1"/>
<path d="M136.4 195.1 135.9 238.6 139.8 267.0 145.4 280.9 150.8 283.8 155.1 276.4 157.3 255.8 156.3 217.6 152.1 166.2 147.7 119.0 145.9 88.6"/>
<path d="M145.9 88.6 146.8 73.6 149.7 68.4 153.9 70.0 158.7 78.3 162.6 94.7 163.7 119.4 160.2 148.2 153.0 173.1 145.1 188.5 140.1 192.7"/>
<path d="M140.1 192.7 140.3 187.5 146.5 175.6 157.2 161.0 168.7 147.3 176.9 136.7 178.8 130.0 173.1 126.7 160.9 126.0 145.0 127.0 129.7 129.5"/>
<path d="M129.7 129.5 119.2 133.7 116.1 140.6 121.0 151.7 132.1 168.2 145.7 189.8 157.1 214.3 163.1 237.4 163.8 255.0 161.5 265.6 158.4 268.8"/>
<path d="M158.4 268.8 156.0 264.5 154.7 252.3 153.6 232.0 151.3 205.8 146.6 179.1 140.1 157.1 134.0 142.4 130.8 134.1 132.7 129.5 140.5 125.4"/>
<path d="M140.5 125.4 152.7 118.6 165.3 107.9 173.7 94.3 175.2 80.9 170.6 70.4 162.3 64.0 152.9 61.8 144.6 63.8 138.9 71.2 136.6 87.0"/>
<path d="M136.6 87.0 137.9 113.3 142.1 147.1 145.9 177.9 146.3 196.2 142.7 199.2 137.1 188.6 132.4 169.7 131.1 150.4 133.5 138.5 138.0 138.9"/>
<path d="M138.0 138.9 142.6 154.6 145.9 186.5 147.0 228.0 146.8 264.5 146.9 287.5 148.7 298.6 152.5 301.5 158.2 298.0 165.0 286.9 171.4 265.4"/>
<path d="M171.4 265.4 174.0 233.7 169.8 199.6 161.1 174.0 152.7 162.1 148.7 163.7 151.2 175.9 159.9 194.5 171.8 213.9 182.1 229.6 187.6 240.0"/>
<path d="M187.6 240.0 186.9 245.6 180.6 247.9 170.6 249.2 160.0 251.4 151.7 255.7 147.5 261.9 147.0 268.9 148.5 275.0 150.2 279.0 150.5 280.0"/>
<path d="M150.5 280.0 148.9 277.6 145.3 271.3 140.1 261.2 134.2 247.5 128.5 231.3 123.9 213.9 121.1 196.4 120.3 178.7 122.0 160.4 126.3 140.9"/>
<path d="M126.3 140.9 132.9 120.9 140.7 102.2 148.3 86.7 154.7 75.6 159.6 69.0 163.4 66.3 166.5 67.6 169.6 73.4 173.2 85.5 177.3 105.8"/>
<path d="M177.3 105.8 180.6 134.6 180.7 167.3 176.3 196.7 168.5 217.6 159.4 229.1 150.7 232.0 143.9 227.9 140.1 218.2 139.5 204.6 140.8 189.1"/>
<path d="M140.8 189.1 141.9 173.9 140.9 161.1 137.0 152.3 130.8 148.7 124.4 151.4 120.1 161.5 120.0 179.4 124.7 203.8 132.4 230.4 139.3 253.5"/>
<path d="M139.3 253.5 143.0 269.4 142.9 276.7 140.1 275.2 135.9 263.0 132.8 235.6 134.6 191.6 142.8 142.0 153.1 104.9 161.5 85.8 167.1 81.5"/>
<path d="M167.1 81.5 170.4 91.5 171.3 123.4 167.9 185.4 160.4 255.1 154.8 296.6 152.5 312.7 151.5 317.9 150.2 318.4 147.6 315.1 143.4 303.8"/>
<path d="M143.4 303.8 137.1 272.9 131.0 212.3 132.2 145.8 139.2 105.1 147.2 89.3 154.3 89.3 159.6 102.0 161.3 126.0 158.3 155.3 152.3 178.1"/>
<path d="M152.3 178.1 147.3 185.4 146.6 174.4 151.1 148.6 158.5 118.1 164.5 94.0 166.7 80.8 164.8 77.7 158.8 84.6 149.2 104.9 138.0 142.1"/>
<path d="M138.0 142.1 131.2 189.8 133.5 229.9 141.9 251.7 152.4 255.8 162.5 243.4 169.4 214.3 169.5 173.6 162.9 135.9 154.6 112.4 148.1 104.7"/>
<path d="M148.1 104.7 144.6 112.1 144.2 135.4 146.5 173.8 149.1 216.3 149.1 248.4 146.2 265.1 141.3 268.4 135.6 259.9 130.9 239.8 129.8 210.6"/>
<path d="M129.8 210.6 133.6 180.2 140.2 157.8 146.5 147.6 150.3 149.1 150.9 159.4 148.6 173.7 144.9 185.7 141.5 190.1 139.6 184.3 139.5 168.6"/>
<path d="M139.5 168.6 140.8 147.1 142.5 126.1 144.1 110.7 145.5 102.7 147.6 101.7 151.4 106.4 157.5 114.6 165.4 122.6 173.1 125.8 177.9 121.5"/>
<path d="M177.9 121.5 177.9 110.4 173.4 96.7 166.3 85.4 159.0 79.5 152.9 80.9 148.6 92.3 146.2 119.5 146.1 167.2 147.3 223.8 147.8 266.2"/>
<path d="M147.8 266.2 146.8 287.9 144.8 295.3 142.3 292.7 140.4 279.0 140.5 249.8 144.5 205.9 152.0 162.2 159.4 134.7 165.0 127.2 168.4 139.2"/>
<path d="M168.4 139.2 169.0 170.4 166.2 214.8 161.7 255.9 158.6 282.3 157.6 295.0 158.1 298.7 159.1 295.3 159.5 283.4 158.2 259.0 153.8 219.4"/>
<path d="M153.8 219.4 147.0 170.8 141.7 127.0 140.3 96.5 142.6 78.3 147.5 68.2 153.7 62.9 159.9 60.7 164.7 60.7 167.0 62.8 165.9 67.6"/>
<path d="M165.9 67.6 161.4 76.1 153.8 89.5 143.9 109.3 133.5 135.6 125.1 166.7 121.0 199.2 121.2 229.5 124.4 255.3 128.9 276.0 133.6 291.3"/>
<path d="M133.6 291.3 138.2 302.0 142.7 308.7 147.1 312.5 151.3 313.8 155.0 312.8 157.7 308.6 159.2 298.3 159.6 276.6 158.0 238.4 154.5 189.1"/>
<path d="M154.5 189.1 151.3 146.3 150.2 120.8 151.0 112.2 153.2 117.5 155.9 135.2 158.1 162.1 158.7 190.5 157.8 210.8 156.6 217.7 156.0 209.7"/>
<path d="M156.0 209.7 156.7 187.0 158.2 154.3 159.7 121.6 160.2 97.6 159.4 84.4 157.4 80.2 154.3 84.1 150.3 97.1 145.7 121.7 141.7 158.2"/>
<path d="M141.7 158.2 139.8 200.3 140.6 237.6 142.9 264.1 145.7 280.5 148.8 289.3 152.0 293.0 155.3 292.6 158.5 287.8 161.0 277.5 161.8 259.7"/>
<path d="M161.8 259.7 159.6 233.1 154.1 200.2 147.2 168.0 142.2 144.0 141.0 131.7 144.4 131.3 151.9 142.5 161.8 163.7 170.3 190.3 173.2 214.7"/>
<path d="M173.2 214.7 169.7 230.4 161.2 234.7 150.2 227.1 139.5 208.2 133.0 181.6 133.2 154.9 138.6 135.7 145.9 127.5 151.6 130.8 153.5 144.7"/>
<path d="M153.5 144.7 150.2 166.1 142.9 188.4 134.6 204.0 128.2 207.7 125.3 197.5 126.6 174.4 131.2 144.3 136.7 116.6 140.6 98.1 142.8 89.7"/>
<path d="M142.8 89.7 144.2 90.4 146.3 100.2 150.5 119.4 156.6 146.0 162.2 173.4 163.5 193.6 158.6 202.8 147.4 201.1 132.1 191.1 117.3 177.4"/>
<path d="M117.3 177.4 108.4 165.3 108.5 158.6 117.6 159.0 133.3 165.9 151.0 176.7 165.1 187.1 171.8 193.2 170.4 192.0 163.1 183.0 153.9 167.6"/>
<path d="M153.9 167.6 147.1 149.8 145.3 134.2 148.2 123.9 153.7 120.4 159.7 123.5 164.0 132.2 165.4 144.6 164.2 157.5 161.5 168.0 158.9 174.4"/>
<path d="M158.9 174.4 157.6 177.1 157.5 178.2 158.3 181.0 159.4 188.9 160.6 203.7 161.9 225.0 163.3 248.9 164.4 269.9 164.5 284.6 163.1 292.5"/>
<path d="M163.1 292.5 159.5 294.5 153.4 290.5 145.2 278.6 136.4 255.5 130.7 219.7 133.2 177.0 143.7 139.5 156.4 114.5 166.2 101.9 170.2 99.4"/>
<path d="M170.2 99.4 167.0 105.5 156.4 120.1 141.3 142.8 128.3 170.7 124.7 198.3 132.9 220.4 148.9 234.3 166.4 239.6 179.5 236.7 182.9 226.2"/>
<path d="M182.9 226.2 174.1 208.9 154.9 187.8 132.7 167.0 116.1 151.1 109.6 142.9 113.1 143.7 123.5 153.8 135.7 172.5 144.1 196.6 145.5 220.5"/>
<path d="M145.5 220.5 141.0 238.9 134.8 248.8 131.2 249.3 133.1 239.8 141.7 219.6 155.3 190.3 168.1 158.1 174.2 130.9 172.8 113.7 166.7 106.9"/>
<path d="M166.7 106.9 159.5 109.9 154.4 122.6 154.4 144.5 160.2 171.8 169.0 197.1 175.8 213.0 177.4 215.6 172.2 202.7 160.5 174.1 146.9 135.4"/>
<path d="M146.9 135.4 138.1 99.4 136.3 75.4 139.1 63.0 144.4 58.5 150.3 59.7 155.4 67.9 158.4 89.2 157.7 132.6 152.6 193.5 146.3 245.5"/>
<path d="M146.3 245.5 142.3 273.9 140.1 283.7 138.5 280.3 136.3 262.9 133.2 228.5 130.4 182.4 129.7 142.1 130.9 119.7 133.4 116.0 137.3 129.9"/>
<path d="M137.3 129.9 143.2 161.4 150.0 203.3 155.4 239.7 158.3 260.5 160.3 265.4 162.8 255.1 166.9 228.3 172.0 187.9 176.1 148.6 178.4 124.7"/>
<path d="M178.4 124.7 179.4 120.3 179.2 136.9 175.9 176.4 168.3 229.4 160.2 271.9 155.3 294.3 153.4 302.5 153.4 301.6 154.8 291.4 157.3 266.9"/>
<path d="M157.3 266.9 160.3 226.0 162.5 182.4 164.2 155.4 166.3 152.1 168.9 172.3 169.9 210.5 167.2 250.9 162.2 278.0 156.6 290.2 151.0 290.6"/>
<path d="M151.0 290.6 145.6 279.1 141.3 250.4 140.2 202.3 143.8 150.6 148.9 115.9 152.4 101.8 153.0 104.4 150.1 123.0 143.8 157.2 137.1 198.4"/>
<path d="M137.1 198.4 133.9 231.6 135.0 249.0 139.4 250.7 145.9 237.3 152.9 208.6 156.9 168.9 155.5 129.9 150.1 101.5 143.4 85.1 137.6 77.4"/>
<path d="M137.6 77.4 133.6 75.7 132.2 78.8 133.3 86.7 136.5 100.2 140.6 120.2 144.2 146.7 146.1 177.3 146.1 207.3 144.9 231.6 143.6 247.4"/>
<path d="M143.6 247.4 142.6 254.0 142.0 251.2 142.0 238.4 142.7 215.2 144.6 184.1 147.7 152.3 151.6 127.4 155.5 112.5 158.7 106.8 160.6 108.6"/>
<path d="M160.6 108.6 160.1 115.9 156.9 126.0 151.4 135.1 145.5 139.8 141.4 138.9 140.6 133.9 143.5 128.0 148.6 125.2 154.1 128.6 157.9 140.6"/>
<path d="M157.9 140.6 158.2 161.8 154.3 189.6 147.8 217.3 141.5 238.4 137.4 250.1 136.2 252.6 137.7 247.5 141.0 237.3 144.5 226.1 146.4 218.7"/>
<path d="M146.4 218.7 145.2 218.7 141.3 226.3 135.8 238.4 130.5 249.6 126.1 255.6 122.9 253.3 120.7 240.8 120.2 217.3 122.7 186.5 128.6 158.4"/>
<path d="M128.6 158.4 136.6 141.9 146.0 141.6 156.8 158.9 168.1 192.3 176.4 231.5 179.6 261.8 179.8 277.2 178.8 278.7 177.5 265.3 175.2 231.0"/>
<path d="M175.2 231.0 169.7 175.8 161.9 121.4 155.7 88.5 151.4 75.2 148.1 75.0 144.7 87.2 141.1 116.6 138.8 163.4 139.7 211.5 143.0 242.8"/>
<path d="M143.0 242.8 146.9 254.3 150.7 249.1 154.2 228.4 157.0 195.3 158.9 159.3 160.6 131.6 163.3 116.5 167.7 112.6 173.8 117.4 180.2 128.4"/>
<path d="M180.2 128.4 184.4 142.6 184.2 156.5 178.5 167.6 168.4 175.7 156.2 182.1 144.9 188.6 136.9 195.9 133.6 203.2 134.5 207.9 137.9 206.3"/>
<path d="M137.9 206.3 141.9 194.9 144.9 171.7 146.3 139.3 146.5 106.5 146.1 82.3 145.7 68.8 145.1 63.7 144.1 65.1 141.8 74.4 137.4 96.2"/>
<path d="M137.4 96.2 130.9 134.8 126.1 182.9 126.3 223.0 131.4 245.8 140.1 253.5 152.1 250.2 165.9 240.1 178.5 228.6 186.1 221.7 186.6 223.4"/>
<path d="M186.6 223.4 180.2 233.4 170.0 247.5 159.7 259.6 152.3 265.5 148.7 263.0 148.7 250.2 151.7 226.0 156.0 194.3 159.4 165.3 160.5 148.8"/>
<path d="M160.5 148.8 159.5 149.4 157.0 168.6 153.7 203.9 150.8 243.9 149.0 274.1 148.3 290.6 148.3 296.6 148.7 294.6 149.8 284.2 151.8 262.8"/>
<path d="M151.8 262.8 155.2 230.3 159.2 194.0 162.6 164.6 164.5 146.9 164.8 139.1 163.5 137.5 161.0 137.4 157.8 135.2 154.7 129.2 152.2 120.3"/>
<path d="M152.2 120.3 150.1 111.3 148.0 105.2 145.6 104.4 142.5 110.4 139.3 124.0 137.3 144.4 138.2 167.7 142.4 187.5 148.7 198.8 154.9 200.4"/>
<path d="M154.9 200.4 158.7 193.7 157.7 183.2 151.3 174.5 140.8 173.3 129.1 183.1 120.1 204.1 117.9 231.6 123.0 257.3 132.0 275.0 141.6 283.6"/>
<path d="M141.6 283.6 149.6 283.8 155.1 275.5 157.2 257.2 155.5 228.7 151.5 195.6 148.1 167.5 147.7 150.0 150.5 143.5 155.0 145.0 159.3 150.5"/>
<path d="M159.3 150.5 161.0 155.3 159.2 155.4 154.5 149.2 149.6 138.1 147.0 125.7 148.3 116.1 153.4 112.0 160.9 114.6 168.4 124.4 172.7 140.2"/>
<path d="M172.7 140.2 170.7 158.8 161.5 175.1 147.2 185.1 132.0 187.7 119.9 184.9 114.3 181.0 116.5 181.4 125.5 190.5 138.5 210.2 151.1 237.1"/>
<path d="M151.1 237.1 158.9 263.1 160.8 281.2 158.2 289.7 152.9 288.9 145.8 276.0 137.8 242.8 132.7 183.6 136.1 119.3 144.3 79.2 152.3 62.1"/>
<path d="M152.3 62.1 159.7 56.9 165.9 58.7 170.5 68.9 172.3 94.6 167.5 142.6 154.5 200.6 140.5 243.6 130.7 264.8 125.4 269.5 124.5 261.5"/>
<path d="M124.5 261.5 128.7 241.3 138.1 210.7 149.5 176.3 157.6 147.0 159.4 127.3 154.8 117.1 145.1 114.5 132.6 118.2 119.7 127.5 109.7 142.4"/>
<path d="M109.7 142.4 105.7 162.9 109.5 188.4 120.2 216.5 134.0 243.0 146.5 263.9 155.4 277.4 160.7 283.5 163.1 282.1 163.8 271.3 163.4 246.5"/>
<path d="M163.4 246.5 162.4 203.8 161.0 150.6 160.2 106.3 160.5 80.5 161.7 69.5 163.5 68.4 165.6 77.3 167.9 102.8 168.9 155.7 165.4 226.8"/>
<path d="M165.4 226.8 159.7 279.9 156.0 304.8 154.6 314.1 154.5 316.7 155.5 315.5 157.5 309.2 161.0 291.4 166.3 249.2 169.8 180.6 167.6 117.7"/>
<path d="M167.6 117.7 163.3 82.8 159.5 68.6 156.1 65.2 152.8 69.2 149.6 81.5 146.4 104.1 143.6 134.7 141.9 163.7 141.3 180.6 141.3 180.5"/>
<path d="M141.3 180.5 141.9 163.8 143.5 135.8 146.0 106.6 149.1 84.5 152.4 71.6 155.8 65.8 159.0 65.1 161.7 68.8 163.1 77.2 162.7 90.3"/>
<path d="M162.7 90.3 159.9 107.0 155.6 124.2 151.4 139.1 149.4 150.6 150.7 159.7 155.1 169.0 160.7 180.5 165.0 195.3 165.6 212.2 161.7 228.5"/>
<path d="M161.7 228.5 154.2 240.9 145.6 247.2 138.1 246.5 133.6 238.3 133.8 223.5 139.1 204.9 147.6 187.7 156.5 177.2 163.1 177.2 166.6 188.7"/>
<path d="M166.6 188.7 167.0 210.0 165.9 235.6 165.2 258.5 165.8 274.5 167.6 282.9 169.2 284.8 168.9 280.8 164.9 270.7 156.0 254.8 142.7 234.8"/>
<path d="M142.7 234.8 128.2 214.9 117.1 199.3 112.0 190.7 113.0 189.6 118.1 194.9 124.1 205.1 128.3 218.2 129.5 232.3 128.5 245.9 127.4 258.0"/>
<path d="M127.4 258.0 127.9 268.0 130.8 275.5 135.5 280.1 140.5 281.5 144.2 279.5 145.6 273.1 144.9 261.5 143.7 244.1 144.8 221.8 150.7 197.5"/>
<path d="M150.7 197.5 161.3 175.3 173.2 158.2 181.9 146.9 183.3 140.5 175.7 137.5 160.2 136.0 141.1 134.7 124.8 133.0 116.6 131.4 119.0 131.1"/>
<path d="M119.0 131.1 130.6 133.5 146.8 140.1 161.6 151.5 169.0 166.7 165.9 183.0 153.9 196.2 138.2 202.7 124.5 199.8 117.4 186.7 118.7 165.0"/>
<path d="M118.7 165.0 126.9 139.9 136.7 117.8 143.9 103.0 147.2 96.4 147.7 97.6 147.9 106.3 150.6 121.7 158.0 141.0 169.3 159.2 180.6 171.0"/>
<path d="M180.6 171.0 187.4 174.4 186.3 170.8 177.2 164.3 162.9 160.3 148.4 164.2 138.4 179.7 136.5 207.2 142.6 240.9 151.6 270.2 158.6 289.1"/>
<path d="M158.6 289.1 161.7 298.2 161.1 299.6 157.8 293.3 153.2 275.6 149.5 239.7 149.8 187.0 155.0 136.0 161.4 103.1 166.0 87.9 167.7 85.0"/>
<path d="M167.7 85.0 165.7 92.0 159.7 108.9 150.6 135.6 141.4 167.8 135.9 197.5 135.4 219.3 138.2 232.2 142.5 237.5 146.8 237.4 150.6 233.3"/>
<path d="M150.6 233.3 154.1 226.2 158.1 216.5 163.1 204.1 168.3 188.6 172.1 170.5 172.6 151.2 169.0 132.9 162.1 118.0 154.3 108.0 147.4 103.3"/>
<path d="M147.4 103.3 143.1 103.8 141.8 109.4 143.0 119.3 145.2 132.1 146.1 145.2 144.4 155.7 140.1 161.4 135.3 161.9 132.8 157.9 134.7 151.5"/>
<path d="M134.7 151.5 140.9 144.8 149.5 139.7 157.2 137.0 160.8 136.8 158.7 138.4 151.3 140.6 141.7 142.2 134.4 142.3 133.2 140.6 139.9 137.9"/>
<path d="M139.9 137.9 153.4 135.2 169.8 133.9 184.6 135.1 193.6 139.6 194.1 147.5 185.9 158.4 171.6 170.7 155.6 182.5 142.6 191.8 135.5 197.0"/>
<path d="M135.5 197.0 134.7 197.1 138.6 191.9 144.3 181.9 148.5 168.5 149.1 154.0 145.4 141.1 138.5 132.4 130.4 129.8 122.9 135.2 118.1 150.1"/>
<path d="M118.1 150.1 118.2 175.7 124.6 209.1 135.2 242.7 145.7 268.6 153.5 284.1 158.3 290.5 160.7 288.9 161.5 277.9 161.6 253.1 162.0 211.7"/>
<path d="M162.0 211.7 163.1 162.7 165.1 123.9 167.4 103.2 169.2 98.5 168.7 108.6 163.5 135.5 151.6 178.2 136.5 224.0 124.3 256.9 116.9 273.3"/>
<path d="M116.9 273.3 113.3 276.4 112.7 268.1 115.2 247.8 121.0 217.3 128.8 184.7 135.7 161.0 140.4 151.4 143.8 156.1 147.6 172.3 152.8 194.6"/>
<path d="M152.8 194.6 158.6 215.1 163.5 227.7 166.2 229.8 166.2 221.4 163.3 204.8 159.0 184.8 155.9 168.2 155.9 160.6 159.3 164.5 164.5 179.7"/>
<path d="M164.5 179.7 168.1 202.9 166.9 227.5 160.5 246.8 150.9 258.1 141.1 261.2 134.1 257.2 133.1 247.6 140.2 235.0 154.3 223.1 171.3 215.5"/>
<path d="M171.3 215.5 185.1 213.6 191.1 216.5 187.8 221.2 177.2 224.4 163.2 223.6 150.2 217.6 141.5 207.1 138.7 195.0 140.8 185.4 145.1 182.3"/>
<path d="M145.1 182.3 148.6 188.0 149.4 202.3 147.6 221.6 144.9 240.4 143.3 253.7 143.6 259.2 146.0 255.9 149.5 243.0 152.8 220.9 154.2 192.9"/>
<path d="M154.2 192.9 153.1 166.2 150.3 147.1 147.7 137.6 146.5 136.8 147.6 142.0 150.5 149.2 154.0 154.2 156.7 153.6 157.3 146.4 156.2 134.9"/>
<path d="M156.2 134.9 154.6 123.2 154.0 115.4 155.4 114.3 159.0 121.7 164.2 138.2 169.1 162.2 171.2 187.7 169.1 207.0 163.8 214.8 156.7 209.4"/>
<path d="M156.7 209.4 149.4 191.6 143.8 165.8 141.4 140.5 142.2 123.4 144.6 118.0 147.6 125.2 150.0 145.4 151.0 175.7 149.8 207.0 146.6 228.7"/>
<path d="M146.6 228.7 142.0 235.4 136.3 225.2 130.5 196.9 127.4 155.2 129.2 114.6 134.4 87.4 140.6 74.0 147.1 70.4 153.4 74.5 158.6 86.9"/>
<path d="M158.6 86.9 160.9 108.8 157.6 137.0 148.1 162.9 135.2 178.2 122.7 180.7 114.6 172.8 113.9 160.3 121.2 150.0 134.7 147.6 151.9 156.2"/>
<path d="M151.9 156.2 169.6 177.1 183.0 206.9 187.8 237.3 184.4 260.2 176.3 272.5 166.3 275.0 155.3 267.7 144.4 249.3 135.4 219.5 131.3 183.5"/>
<path d="M131.3 183.5 133.6 151.3 139.9 130.0 147.4 120.8 154.1 122.4 158.8 133.1 160.2 151.2 158.1 173.1 153.7 194.0 149.1 209.9 146.3 219.2"/>
<path d="M146.3 219.2 145.9 222.0 147.6 219.1 149.8 211.6 150.6 200.8 148.3 187.9 142.8 174.3 135.3 161.1 128.6 149.3 125.1 140.0 126.3 134.1"/>
<path d="M126.3 134.1 132.1 132.7 141.1 136.5 151.2 146.7 160.0 164.0 165.0 187.6 165.5 214.6 162.5 240.0 158.5 259.9 155.7 272.7 154.4 278.8"/>
<path d="M154.4 278.8 154.3 278.6 154.7 271.8 154.9 256.8 154.1 232.1 152.4 198.4 151.1 161.8 151.3 130.3 152.9 108.4 155.0 96.0 156.3 91.4"/>
<path d="M156.3 91.4 155.7 93.4 152.3 101.5 145.9 115.6 138.1 134.3 132.0 154.3 130.5 170.8 134.9 180.1 143.9 180.5 155.0 172.2 164.7 157.4"/>
<path d="M164.7 157.4 170.1 140.2 170.6 125.1 167.8 115.5 163.9 113.0 161.0 118.7 160.2 134.0 161.6 159.1 163.6 191.2 164.2 223.1 162.3 248.4"/>
<path d="M162.3 248.4 158.8 264.7 154.7 272.7 151.5 274.4 149.9 271.1 150.5 263.9 152.8 254.7 155.4 245.9 156.2 239.8 154.2 237.9 149.4 239.9"/>
<path d="M149.4 239.9 143.4 244.2 138.4 248.6 136.0 250.6 136.8 248.7 140.7 241.2 146.4 227.3 152.4 207.1 156.6 182.6 157.8 157.7 156.5 136.7"/>
<path d="M156.5 136.7 153.9 122.0 151.4 114.2 149.8 113.0 149.1 117.9 149.3 128.8 150.0 145.1 150.6 165.2 150.8 185.9 150.5 204.0 149.8 216.7"/>
<path d="M149.8 216.7 148.7 222.7 147.0 221.2 144.8 212.0 142.4 195.5 140.3 173.7 139.7 150.4 141.1 130.5 144.5 117.2 149.0 111.9 154.1 115.6"/>
<path d="M154.1 115.6 158.6 129.6 160.9 155.1 159.5 189.8 154.2 225.4 147.4 252.9 141.3 268.7 136.8 273.3 134.4 266.8 134.9 246.5 139.5 208.8"/>
<path d="M139.5 208.8 148.4 158.6 157.7 112.9 164.0 83.8 167.5 69.3 168.9 64.0 168.4 64.9 165.9 71.9 161.5 87.0 155.0 112.0 147.7 144.8"/>
<path d="M147.7 144.8 142.4 177.3 141.1 202.4 143.6 218.1 148.3 226.7 153.3 232.1 156.9 238.1 157.8 247.6 155.9 261.0 152.7 276.2 149.9 289.8"/>
<path d="M149.9 289.8 148.5 299.5 148.5 305.0 149.6 306.7 150.8 304.6 151.4 297.5 150.6 282.7 148.5 257.5 145.7 224.0 144.6 191.1 146.8 168.5"/>
<path d="M146.8 168.5 152.0 159.7 158.6 163.8 163.7 177.8 164.4 196.6 159.2 214.2 149.2 225.5 137.1 228.0 125.8 221.2 118.6 205.3 118.2 182.6"/>
<path d="M118.2 182.6 124.9 157.5 135.5 134.9 145.6 117.4 152.2 105.6 154.5 98.2 152.9 94.0 148.9 92.1 144.1 92.0 139.7 94.0 136.2 99.1"/>
<path d="M136.2 99.1 133.6 108.6 131.4 124.5 129.9 147.9 130.3 177.3 133.7 206.9 139.8 229.9 147.6 242.3 155.9 242.4 163.4 229.2 167.9 201.5"/>
<path d="M167.9 201.5 167.1 163.1 161.4 125.4 154.8 98.9 150.7 85.3 150.2 82.3 153.8 89.0 161.5 107.1 171.3 138.1 178.1 176.6 177.0 210.5"/>
<path d="M177.0 210.5 168.8 231.4 157.0 238.3 144.5 233.1 134.7 218.8 130.5 200.3 133.1 184.5 140.2 177.5 148.0 182.3 153.1 198.4 153.4 221.5"/>
<path d="M153.4 221.5 149.6 244.4 144.5 261.2 140.8 269.8 139.7 270.2 141.9 262.3 147.0 246.1 153.4 222.7 158.4 196.6 159.4 173.8 156.2 158.2"/>
<path d="M156.2 158.2 150.7 150.1 144.9 147.6 141.2 148.1 140.8 148.5 143.8 146.7 149.1 142.0 155.0 135.4 159.9 129.0 162.8 124.9 163.7 124.6"/>
<path d="M163.7 124.6 163.1 128.6 161.5 136.2 159.9 145.0 158.8 151.4 158.8 151.6 160.0 143.4 161.8 127.3 163.0 107.4 162.6 89.3 160.5 76.5"/>
<path d="M160.5 76.5 156.7 69.7 151.2 68.3 144.3 72.5 136.5 84.2 129.0 106.4 124.6 139.9 126.8 178.6 134.9 211.7 144.7 233.1 153.1 242.9"/>
<path d="M153.1 242.9 158.5 243.4 160.4 237.5 159.1 228.0 156.1 218.0 153.4 210.7 152.4 207.7 153.3 208.9 155.2 213.0 156.6 217.8 156.4 221.6"/>
<path d="M156.4 221.6 154.5 223.3 151.8 222.9 150.0 221.4 150.2 220.3 152.9 221.4 156.9 225.8 160.4 233.6 161.4 243.6 159.5 253.7 155.7 261.7"/>
<path d="M155.7 261.7 151.9 266.1 150.1 265.9 151.5 260.3 156.8 248.6 164.6 230.6 172.2 208.2 175.6 185.1 173.0 166.2 165.4 154.6 155.5 151.4"/>
<path d="M155.5 151.4 146.5 156.5 140.9 168.9 140.4 186.2 144.4 204.8 150.4 221.0 155.8 232.1 158.9 237.2 159.5 236.2 158.4 229.7 156.5 219.1"/>
<path d="M156.5 219.1 154.7 206.4 152.8 194.1 150.2 184.5 145.7 178.7 138.9 176.9 131.1 177.7 124.5 179.4 122.0 180.3 125.6 178.9 135.3 175.2"/>
<path d="M135.3 175.2 148.8 170.3 162.2 166.6 171.6 166.8 174.4 173.8 170.2 189.0 161.1 211.9 151.5 238.0 145.4 261.1 144.2 276.8 146.5 284.3"/>
<path d="M146.5 284.3 150.5 283.8 154.6 273.9 157.3 250.9 157.1 212.3 153.9 165.7 150.0 127.1 147.8 105.0 147.1 98.0 147.1 104.1 146.5 123.1"/>
<path d="M146.5 123.1 144.1 153.3 139.7 185.7 134.7 207.7 130.8 211.4 129.6 193.7 133.1 155.5 140.7 110.0 147.5 76.6 150.9 59.6 151.1 53.0"/>
<path d="M151.1 53.0 148.9 52.0 145.2 55.8 140.8 68.0 136.8 96.7 136.2 146.2 141.4 199.5 147.8 233.9 151.8 245.8 152.1 239.1 148.9 216.5"/>
<path d="M148.9 216.5 143.8 183.7 140.1 152.8 139.8 133.9 142.5 130.5 146.4 142.9 149.0 169.9 147.8 204.5 142.3 234.7 135.0 252.2 128.6 255.7"/>
<path d="M128.6 255.7 125.8 244.6 129.7 218.2 141.9 179.8 157.8 142.0 169.8 116.8 174.9 107.2 173.1 113.0 164.5 135.5 151.2 174.9 139.9 220.7"/>
<path d="M139.9 220.7 136.8 256.2 140.7 275.2 148.1 280.2 156.4 273.1 163.0 251.4 164.4 213.2 158.8 166.6 150.9 128.8 146.7 108.4 148.4 104.3"/>
<path d="M148.4 104.3 156.6 115.8 170.6 144.8 184.2 189.7 187.6 236.7 179.7 270.7 166.8 289.4 152.9 297.6 140.6 299.5 132.0 297.0 128.7 291.0"/>
<path d="M128.7 291.0 130.8 282.6 136.3 273.7 141.4 266.4 142.7 261.8 139.2 259.1 132.6 256.0 126.7 249.8 125.1 238.0 130.6 219.1 143.0 194.1"/>
<path d="M143.0 194.1 158.3 167.8 170.2 146.7 175.1 135.4 172.8 135.5 165.3 147.2 155.7 169.1 149.0 195.6 148.7 218.1 155.1 229.5 165.6 226.5"/>
<path d="M165.6 226.5 177.2 206.7 184.5 170.9 182.7 128.7 173.9 95.2 164.1 75.9 156.3 68.0 151.3 68.0 149.3 75.5 150.3 92.6 153.6 120.0"/>
<path d="M153.6 120.0 157.3 151.1 158.5 173.9 156.1 180.9 151.0 171.5 144.7 150.7 139.5 128.1 136.8 112.2 136.1 107.3 136.9 115.5 139.5 138.7"/>
<path d="M139.5 138.7 144.2 176.0 150.4 216.1 156.3 244.5 161.4 255.6 165.9 248.9 169.4 221.8 169.1 174.4 163.6 122.9 156.5 88.0 150.6 71.6"/>
<path d="M150.6 71.6 146.4 67.4 144.2 72.3 144.0 88.5 146.4 119.4 150.7 160.4 153.7 195.1 152.6 211.4 147.1 207.3 138.1 185.5 129.1 153.7"/>
<path d="M129.1 153.7 124.4 124.8 125.3 107.7 130.6 104.4 139.7 115.5 151.8 142.8 164.0 183.5 170.7 224.4 170.4 252.1 166.3 264.2 161.3 262.8"/>
<path d="M161.3 262.8 157.0 249.3 155.3 225.2 157.0 196.9 160.9 174.9 164.5 166.6 165.1 174.5 160.7 196.7 151.8 226.0 142.1 252.4 134.9 269.1"/>
<path d="M134.9 269.1 132.0 275.5 133.6 271.9 140.1 257.7 151.2 231.8 163.7 197.3 172.3 163.1 174.0 137.8 170.1 123.8 163.1 119.5 155.5 122.4"/>
<path d="M155.5 122.4 149.2 129.8 145.8 139.4 145.5 149.0 147.3 157.7 149.5 166.4 150.9 177.0 151.1 191.6 151.0 211.0 151.7 233.8 153.8 255.9"/>
<path d="M153.8 255.9 156.8 273.3 159.8 284.4 161.9 289.1 162.3 287.8 160.1 279.6 155.0 262.3 146.7 234.4 136.8 199.0 128.4 164.9 123.2 140.6"/>
<path d="M123.2 140.6 120.0 128.8 117.4 129.1 114.7 141.2 112.9 164.5 113.9 196.0 119.1 228.9 127.2 255.7 135.9 273.5 143.4 282.8 148.9 284.6"/>
<path d="M148.9 284.6 151.8 278.7 151.7 262.1 149.0 229.2 145.6 177.8 145.3 121.4 148.9 80.7 154.0 59.7 159.0 50.6 163.1 47.1 164.9 46.3"/>
<path d="M164.9 46.3 163.7 47.5 159.6 51.8 153.6 62.6 146.5 86.9 140.9 131.0 141.5 187.0 148.1 234.2 155.1 263.3 159.3 277.9 159.3 283.5"/>
<path d="M159.3 283.5 155.3 283.3 148.6 278.8 141.8 270.5 138.2 258.9 140.8 244.4 150.1 227.9 163.7 210.2 176.6 192.9 183.9 177.3 183.0 165.0"/>
<path d="M183.0 165.0 174.7 157.0 162.3 153.9 150.4 155.5 142.8 161.1 142.1 169.4 148.1 178.3 158.3 185.8 168.6 190.2 175.2 190.9 175.6 188.4"/>
<path d="M175.6 188.4 169.2 184.2 157.3 180.7 142.9 180.3 129.2 185.0 119.4 196.0 115.9 212.7 119.2 232.8 127.9 252.7 138.6 269.2 148.4 280.9"/>
<path d="M148.4 280.9 155.3 287.7 158.3 290.3 156.9 288.8 151.2 282.8 142.0 271.1 131.4 252.3 123.3 225.7 122.6 193.8 131.6 162.2 147.2 136.8"/>
<path d="M147.2 136.8 163.8 120.3 177.2 112.9 184.9 114.0 184.9 123.5 176.6 141.0 161.5 164.6 144.8 189.3 132.9 209.3 129.1 221.1 133.5 223.9"/>
<path d="M133.5 223.9 143.9 218.5 156.7 207.6 167.1 195.6 171.2 187.8 167.3 188.6 156.5 199.9 142.7 219.8 130.9 242.4 124.8 260.7 124.5 270.2"/>
<path d="M124.5 270.2 128.6 268.9 135.9 253.3 145.5 217.2 154.3 160.7 157.2 105.7 154.5 72.7 149.5 58.3 143.9 53.5 139.1 54.2 136.3 60.8"/>
<path d="M136.3 60.8 136.0 77.7 140.0 111.3 149.3 157.7 159.5 197.7 165.7 217.6 167.0 215.9 164.1 195.1 158.6 160.9 153.9 125.8 153.0 100.9"/>
<path d="M153.0 100.9 155.9 88.5 161.4 86.9 167.7 95.6 172.7 116.2 172.8 149.4 165.7 189.4 154.2 225.1 143.9 249.5 138.0 262.7 136.8 267.2"/>
<path d="M136.8 267.2 139.5 265.0 144.1 257.0 147.7 243.6 147.8 225.0 143.5 202.2 137.0 177.0 132.8 152.4 134.5 131.2 142.8 115.4 155.6 106.0"/>
<path d="M155.6 106.0 169.6 103.2 181.3 107.0 187.6 118.3 185.7 137.6 175.1 163.7 159.6 192.4 145.9 218.3 138.8 237.9 138.7 251.1 143.2 259.1"/>
<path d="M143.2 259.1 149.0 264.2 152.8 267.9 153.0 271.7 150.1 275.8 146.4 279.4 144.1 281.4 144.8 280.1 148.6 273.5 154.2 258.2 159.4 230.2"/>
<path d="M159.4 230.2 160.6 188.3 155.9 140.9 148.8 102.2 143.6 78.3 142.1 65.9 144.5 60.3 150.5 58.8 158.7 60.0 166.9 63.0 172.8 67.4"/>
<path d="M172.8 67.4 174.5 72.1 171.6 76.1 165.5 79.1 158.4 81.5 152.3 84.4 148.2 89.5 146.0 98.2 144.8 112.0 144.2 131.5 144.4 155.5"/>
<path d="M144.4 155.5 145.9 180.7 149.2 203.1 153.8 220.1 158.4 231.3 161.2 237.5 160.4 240.0 155.4 239.8 147.0 237.6 137.8 233.4 130.7 227.1"/>
<path d="M130.7 227.1 128.6 218.5 132.1 208.1 139.6 197.1 147.5 188.1 151.9 184.0 150.5 187.6 143.7 200.6 134.9 222.2 129.1 247.6 129.0 270.4"/>
<path d="M129.0 270.4 133.8 286.2 140.9 294.6 148.1 296.7 153.3 292.6 155.3 280.3 153.3 256.5 147.3 220.8 140.6 180.9 137.3 148.7 138.0 130.0"/>
<path d="M138.0 130.0 141.1 123.7 144.5 127.1 146.6 137.2 147.1 150.7 147.1 163.7 149.4 173.8 156.3 180.9 168.2 187.3 182.8 196.5 195.2 211.4"/>
<path d="M195.2 211.4 199.5 232.6 192.7 256.6 177.8 277.8 160.7 292.2 145.7 299.9 134.7 301.8 128.7 298.0 127.7 286.7 131.5 264.5 139.5 230.9"/>
<path d="M139.5 230.9 148.7 194.7 155.1 168.5 158.2 159.2 159.9 167.0 161.8 189.4 163.8 219.5 164.5 247.6 162.5 267.1 157.3 277.6 149.2 281.2"/>
<path d="M149.2 281.2 139.5 280.2 131.1 276.6 127.6 273.0 131.3 271.4 141.3 272.4 153.4 274.8 162.7 275.6 165.6 271.2 160.1 257.0 145.7 225.9"/>
<path d="M145.7 225.9 126.3 173.9 115.3 115.5 117.7 75.2 125.2 56.2 133.9 48.9 142.5 46.4 149.0 46.4 152.1 48.5 151.3 53.7 147.6 63.6"/>
<path d="M147.6 63.6 142.9 78.7 140.4 95.4 142.6 107.9 148.7 112.9 155.3 111.7 159.1 108.5 158.6 107.5 154.6 111.5 149.2 122.4 145.2 140.8"/>
<path d="M145.2 140.8 145.1 164.6 149.2 188.5 155.0 206.9 159.3 216.9 159.6 218.2 155.3 212.3 148.2 201.8 141.4 190.3 138.4 181.0 140.6 175.7"/>
<path d="M140.6 175.7 147.2 174.4 155.2 175.6 161.3 176.9 162.9 176.2 160.2 172.2 155.2 165.4 151.6 157.4 152.2 150.9 157.9 148.7 167.3 152.4"/>
<path d="M167.3 152.4 177.1 162.6 183.3 178.5 182.8 196.9 175.7 213.6 164.9 225.0 154.3 229.4 146.7 226.5 143.2 217.4 143.5 204.4 145.6 191.0"/>
<path d="M145.6 191.0 147.1 181.3 146.5 177.9 144.3 181.7 142.4 191.3 143.0 204.1 147.3 216.2 154.1 224.2 161.1 226.1 165.0 221.1 163.3 209.6"/>
<path d="M163.3 209.6 155.0 193.6 142.3 176.7 130.0 163.4 122.9 157.2 123.7 160.4 133.1 174.2 148.8 197.9 164.8 227.8 174.5 256.6 175.7 278.6"/>
<path d="M175.7 278.6 171.0 292.3 163.6 299.0 155.9 300.3 150.0 296.1 147.3 284.0 148.8 259.0 154.2 217.5 160.0 166.4 161.5 123.3 158.2 97.2"/>
<path d="M158.2 97.2 151.7 86.0 143.4 85.7 134.5 95.7 126.6 117.2 123.2 149.2 126.9 183.5 136.3 208.9 147.6 219.0 158.4 212.6 167.3 190.2"/>
<path d="M167.3 190.2 172.0 156.0 171.5 120.8 167.9 94.3 163.6 78.8 159.6 71.7 156.0 70.1 152.6 72.5 149.4 77.5 146.3 83.7 143.7 89.1"/>
<path d="M143.7 89.1 142.0 92.5 141.7 94.3 142.8 96.5 145.2 102.1 148.6 114.8 152.1 138.3 154.6 174.1 154.3 215.7 151.0 250.7 146.3 272.3"/>
<path d="M146.3 272.3 141.2 281.4 136.5 280.3 133.0 269.3 132.1 247.4 135.8 217.6 143.9 189.5 153.7 173.4 162.2 173.8 167.3 190.1 167.4 216.6"/>
<path d="M167.4 216.6 162.8 242.8 156.1 259.9 149.5 264.8 144.0 256.1 141.0 230.3 142.3 186.9 148.5 138.4 156.5 102.8 163.5 84.6 169.2 79.6"/>
<path d="M169.2 79.6 173.3 85.1 175.1 101.9 173.0 130.6 165.7 165.3 155.9 194.2 147.4 209.4 142.4 210.1 141.7 199.4 144.9 182.8 150.4 167.8"/>
<path d="M150.4 167.8 155.4 160.6 157.8 164.8 156.5 180.5 151.6 204.5 145.2 230.2 140.1 250.7 137.8 263.5 138.3 269.2 140.7 269.8 143.7 267.6"/>
<path d="M143.7 267.6 145.3 265.6 144.1 266.3 140.1 270.6 134.8 277.1 130.0 282.9 127.3 285.3 127.1 281.8 129.2 269.2 133.4 242.4 139.5 199.3"/>
<path d="M139.5 199.3 145.6 150.7 149.6 114.1 151.8 95.7 154.1 92.8 158.2 104.4 165.3 133.1 173.8 176.4 178.8 219.2 178.2 245.9 173.4 253.2"/>
<path d="M173.4 253.2 165.2 241.3 153.6 208.4 141.5 159.0 135.2 113.0 135.2 85.0 137.8 73.0 140.5 71.7 141.3 79.5 138.1 98.1 130.0 127.6"/>
<path d="M130.0 127.6 119.6 159.9 112.0 182.9 111.1 190.0 118.6 181.7 134.2 163.1 153.9 142.8 171.8 129.0 184.7 126.3 191.4 136.9 191.2 161.7"/>
<path d="M191.2 161.7 184.3 197.3 174.4 233.3 167.0 259.8 164.1 274.8 164.6 280.6 166.3 280.0 166.9 275.2 164.0 268.8 156.9 264.1 147.0 263.4"/>
<path d="M147.0 263.4 137.4 267.1 131.2 273.0 129.7 278.0 132.6 279.5 138.7 275.6 146.8 264.6 155.4 245.3 162.4 219.5 165.3 193.8 163.4 176.3"/>
<path d="M163.4 176.3 158.1 171.8 151.2 180.8 144.4 200.0 140.0 222.1 139.0 239.0 141.4 245.5 146.6 238.8 154.2 216.7 162.4 179.6 167.7 137.5"/>
<path d="M167.7 137.5 168.1 104.6 165.3 86.0 160.8 79.3 155.6 81.9 150.2 93.6 145.5 114.7 142.4 141.6 141.5 165.3 141.7 177.2 141.9 174.1"/>
<path d="M141.9 174.1 141.3 158.0 140.9 135.4 141.8 114.5 144.9 100.9 150.2 96.2 157.7 100.3 166.2 113.6 173.2 135.6 175.0 162.5 169.3 187.8"/>
<path d="M169.3 187.8 157.8 206.0 144.3 216.0 132.8 220.0 126.5 221.6 127.1 224.9 133.6 232.6 143.0 245.0 151.0 259.5 155.0 272.0 154.7 279.5"/>
<path d="M154.7 279.5 151.3 280.5 146.7 273.2 142.9 254.5 142.4 221.3 147.0 178.2 155.0 138.8 162.5 114.0 167.4 104.7 169.0 109.3 166.6 127.5"/>
<path d="M166.6 127.5 159.2 158.4 148.3 193.9 137.6 221.8 129.6 234.9 124.5 231.7 122.8 211.5 126.3 176.1 135.2 135.1 146.1 102.0 155.5 81.9"/>
<path d="M155.5 81.9 162.2 72.3 166.0 69.3 166.0 70.7 161.6 74.7 153.3 79.3 143.1 81.6 134.9 79.6 132.0 73.7 135.1 66.3 142.5 59.9"/>
<path d="M142.5 59.9 151.3 56.1 159.1 54.9 163.6 57.0 163.3 63.8 157.3 79.5 144.8 110.2 128.6 156.5 118.3 205.2 118.8 240.1 126.5 257.4"/>
<path d="M126.5 257.4 137.5 260.3 149.1 250.5 159.0 228.0 163.8 194.9 162.1 159.2 156.5 130.8 151.2 114.4 148.6 110.0 149.1 117.2 152.3 136.8"/>
<path d="M152.3 136.8 156.1 168.3 157.2 206.0 154.2 239.8 148.7 262.9 143.3 275.0 140.0 278.3 140.6 274.1 146.1 262.6 156.5 244.5 169.2 222.8"/>
<path d="M169.2 222.8 179.3 203.2 182.8 191.3 178.8 189.9 168.9 198.9 156.8 215.7 147.1 235.7 143.0 253.9 144.7 267.5 150.4 276.2 157.8 280.9"/>
<path d="M157.8 280.9 164.7 282.9 169.3 283.7 170.8 284.6 169.4 286.3 166.5 288.7 163.1 291.1 160.1 292.5 157.5 291.6 154.7 287.3 150.9 278.2"/>
<path d="M150.9 278.2 145.6 263.3 139.1 243.2 133.0 222.2 129.5 206.6 129.6 201.6 133.0 208.4 138.3 224.3 143.1 243.0 145.7 257.6 145.6 264.1"/>
<path d="M145.6 264.1 143.1 260.4 139.4 243.7 136.1 211.9 136.3 169.4 140.9 130.5 147.6 106.0 154.7 96.9 161.8 101.5 168.7 120.4 174.7 153.9"/>
<path d="M174.7 153.9 177.6 193.9 177.1 225.7 175.2 241.2 172.9 240.1 169.6 223.2 163.8 193.5 155.8 160.5 147.9 136.3 142.3 127.0 139.7 133.4"/>
<path d="M139.7 133.4 141.0 155.0 146.3 186.5 153.3 215.9 158.7 231.9 160.8 229.4 159.0 205.0 153.2 159.9 147.3 111.1 144.9 78.7 145.8 64.0"/>
<path d="M145.8 64.0 149.2 60.3 154.3 65.0 159.8 82.6 163.6 122.6 160.8 182.7 151.2 234.0 141.1 258.9 133.1 260.7 128.3 241.1"/>
</g>
<rect x="10.2" y="341.4" width="283.8" height="6.6" fill="#000"/>
<rect x="271.6" y="341.6" width="2.4" height="6.2" fill="#10f010"/>
<text x="10.5" y="360.42" font-size="11.5" fill="#cac7a8" stroke="#cac7a8" stroke-width="0.3" text-anchor="middle">-1</text>
<text x="151.6" y="360.6" font-size="12" fill="#f2f2f2" stroke="#f2f2f2" stroke-width="0.3" text-anchor="middle">+0.84</text>
<text x="292.5" y="360.42" font-size="11.5" fill="#cac7a8" stroke="#cac7a8" stroke-width="0.3" text-anchor="middle">+1</text>
<rect x="335" y="29.2" width="666" height="317.6" fill="#000"/>
<defs>
<pattern id="pu" x="0" y="0" width="1024" height="672" patternUnits="userSpaceOnUse">
<rect y="29.9" width="1024" height="2" fill="#2c2900"/>
<rect y="33.03" width="1024" height="2" fill="#002d00"/>
<rect y="36.17" width="1024" height="2" fill="#002d00"/>
<rect y="39.3" width="1024" height="2" fill="#002d00"/>
<rect y="42.44" width="1024" height="2" fill="#002d00"/>
<rect y="45.57" width="1024" height="2" fill="#002d00"/>
<rect y="48.71" width="1024" height="2" fill="#002d00"/>
<rect y="51.84" width="1024" height="2" fill="#002d00"/>
<rect y="54.98" width="1024" height="2" fill="#002d00"/>
<rect y="58.11" width="1024" height="2" fill="#002d00"/>
<rect y="61.25" width="1024" height="2" fill="#2c2900"/>
<rect y="64.38" width="1024" height="2" fill="#002d00"/>
<rect y="67.52" width="1024" height="2" fill="#002d00"/>
<rect y="70.66" width="1024" height="2" fill="#002d00"/>
<rect y="73.79" width="1024" height="2" fill="#002d00"/>
<rect y="76.92" width="1024" height="2" fill="#002d00"/>
<rect y="80.06" width="1024" height="2" fill="#002d00"/>
<rect y="83.19" width="1024" height="2" fill="#002d00"/>
<rect y="86.33" width="1024" height="2" fill="#002d00"/>
<rect y="89.47" width="1024" height="2" fill="#002d00"/>
<rect y="92.6" width="1024" height="2" fill="#2c2900"/>
<rect y="95.73" width="1024" height="2" fill="#002d00"/>
<rect y="98.87" width="1024" height="2" fill="#002d00"/>
<rect y="102" width="1024" height="2" fill="#002d00"/>
<rect y="105.14" width="1024" height="2" fill="#002d00"/>
<rect y="108.28" width="1024" height="2" fill="#002d00"/>
<rect y="111.41" width="1024" height="2" fill="#002d00"/>
<rect y="114.54" width="1024" height="2" fill="#002d00"/>
<rect y="117.68" width="1024" height="2" fill="#002d00"/>
<rect y="120.81" width="1024" height="2" fill="#002d00"/>
<rect y="123.95" width="1024" height="2" fill="#2c2900"/>
<rect y="127.08" width="1024" height="2" fill="#002d00"/>
<rect y="130.22" width="1024" height="2" fill="#002d00"/>
<rect y="133.35" width="1024" height="2" fill="#002d00"/>
<rect y="136.49" width="1024" height="2" fill="#002d00"/>
<rect y="139.62" width="1024" height="2" fill="#002d00"/>
<rect y="142.76" width="1024" height="2" fill="#002d00"/>
<rect y="145.89" width="1024" height="2" fill="#002d00"/>
<rect y="149.03" width="1024" height="2" fill="#002d00"/>
<rect y="152.16" width="1024" height="2" fill="#002d00"/>
<rect y="155.3" width="1024" height="2" fill="#2c2900"/>
<rect y="158.44" width="1024" height="2" fill="#002d00"/>
<rect y="161.57" width="1024" height="2" fill="#002d00"/>
<rect y="164.7" width="1024" height="2" fill="#002d00"/>
<rect y="167.84" width="1024" height="2" fill="#002d00"/>
<rect y="170.97" width="1024" height="2" fill="#002d00"/>
<rect y="174.11" width="1024" height="2" fill="#002d00"/>
<rect y="177.25" width="1024" height="2" fill="#002d00"/>
<rect y="180.38" width="1024" height="2" fill="#002d00"/>
<rect y="183.51" width="1024" height="2" fill="#002d00"/>
<rect y="186.65" width="1024" height="2" fill="#2c2900"/>
<rect y="189.78" width="1024" height="2" fill="#002d00"/>
<rect y="192.92" width="1024" height="2" fill="#002d00"/>
<rect y="196.06" width="1024" height="2" fill="#002d00"/>
<rect y="199.19" width="1024" height="2" fill="#002d00"/>
<rect y="202.32" width="1024" height="2" fill="#002d00"/>
<rect y="205.46" width="1024" height="2" fill="#002d00"/>
<rect y="208.59" width="1024" height="2" fill="#002d00"/>
<rect y="211.73" width="1024" height="2" fill="#002d00"/>
<rect y="214.86" width="1024" height="2" fill="#002d00"/>
<rect y="218" width="1024" height="2" fill="#2c2900"/>
<rect y="221.13" width="1024" height="2" fill="#002d00"/>
<rect y="224.27" width="1024" height="2" fill="#002d00"/>
<rect y="227.41" width="1024" height="2" fill="#002d00"/>
<rect y="230.54" width="1024" height="2" fill="#002d00"/>
<rect y="233.67" width="1024" height="2" fill="#002d00"/>
<rect y="236.81" width="1024" height="2" fill="#002d00"/>
<rect y="239.94" width="1024" height="2" fill="#002d00"/>
<rect y="243.08" width="1024" height="2" fill="#002d00"/>
<rect y="246.22" width="1024" height="2" fill="#002d00"/>
<rect y="249.35" width="1024" height="2" fill="#2c2900"/>
<rect y="252.48" width="1024" height="2" fill="#002d00"/>
<rect y="255.62" width="1024" height="2" fill="#002d00"/>
<rect y="258.75" width="1024" height="2" fill="#002d00"/>
<rect y="261.89" width="1024" height="2" fill="#002d00"/>
<rect y="265.02" width="1024" height="2" fill="#002d00"/>
<rect y="268.16" width="1024" height="2" fill="#002d00"/>
<rect y="271.29" width="1024" height="2" fill="#002d00"/>
<rect y="274.43" width="1024" height="2" fill="#002d00"/>
<rect y="277.56" width="1024" height="2" fill="#002d00"/>
<rect y="280.7" width="1024" height="2" fill="#2c2900"/>
<rect y="283.83" width="1024" height="2" fill="#002d00"/>
<rect y="286.97" width="1024" height="2" fill="#002d00"/>
<rect y="290.1" width="1024" height="2" fill="#002d00"/>
<rect y="293.24" width="1024" height="2" fill="#002d00"/>
<rect y="296.37" width="1024" height="2" fill="#002d00"/>
<rect y="299.51" width="1024" height="2" fill="#002d00"/>
<rect y="302.64" width="1024" height="2" fill="#002d00"/>
<rect y="305.78" width="1024" height="2" fill="#002d00"/>
<rect y="308.91" width="1024" height="2" fill="#002d00"/>
<rect y="312.05" width="1024" height="2" fill="#2c2900"/>
<rect y="315.18" width="1024" height="2" fill="#002d00"/>
<rect y="318.32" width="1024" height="2" fill="#002d00"/>
<rect y="321.45" width="1024" height="2" fill="#002d00"/>
<rect y="324.59" width="1024" height="2" fill="#002d00"/>
<rect y="327.72" width="1024" height="2" fill="#002d00"/>
<rect y="330.86" width="1024" height="2" fill="#002d00"/>
<rect y="333.99" width="1024" height="2" fill="#002d00"/>
<rect y="337.13" width="1024" height="2" fill="#002d00"/>
<rect y="340.26" width="1024" height="2" fill="#002d00"/>
<rect y="343.4" width="1024" height="2" fill="#2c2900"/>
</pattern>
<pattern id="pl" x="0" y="0" width="1024" height="672" patternUnits="userSpaceOnUse">
<rect y="29.9" width="1024" height="2" fill="#ffff00"/>
<rect y="33.03" width="1024" height="2" fill="#0cff06"/>
<rect y="36.17" width="1024" height="2" fill="#0cff06"/>
<rect y="39.3" width="1024" height="2" fill="#0cff06"/>
<rect y="42.44" width="1024" height="2" fill="#0cff06"/>
<rect y="45.57" width="1024" height="2" fill="#0cff06"/>
<rect y="48.71" width="1024" height="2" fill="#0cff06"/>
<rect y="51.84" width="1024" height="2" fill="#0cff06"/>
<rect y="54.98" width="1024" height="2" fill="#0cff06"/>
<rect y="58.11" width="1024" height="2" fill="#0cff06"/>
<rect y="61.25" width="1024" height="2" fill="#ffff00"/>
<rect y="64.38" width="1024" height="2" fill="#0cff06"/>
<rect y="67.52" width="1024" height="2" fill="#0cff06"/>
<rect y="70.66" width="1024" height="2" fill="#0cff06"/>
<rect y="73.79" width="1024" height="2" fill="#0cff06"/>
<rect y="76.92" width="1024" height="2" fill="#0cff06"/>
<rect y="80.06" width="1024" height="2" fill="#0cff06"/>
<rect y="83.19" width="1024" height="2" fill="#0cff06"/>
<rect y="86.33" width="1024" height="2" fill="#0cff06"/>
<rect y="89.47" width="1024" height="2" fill="#0cff06"/>
<rect y="92.6" width="1024" height="2" fill="#ffff00"/>
<rect y="95.73" width="1024" height="2" fill="#0cff06"/>
<rect y="98.87" width="1024" height="2" fill="#0cff06"/>
<rect y="102" width="1024" height="2" fill="#0cff06"/>
<rect y="105.14" width="1024" height="2" fill="#0cff06"/>
<rect y="108.28" width="1024" height="2" fill="#0cff06"/>
<rect y="111.41" width="1024" height="2" fill="#0cff06"/>
<rect y="114.54" width="1024" height="2" fill="#0cff06"/>
<rect y="117.68" width="1024" height="2" fill="#0cff06"/>
<rect y="120.81" width="1024" height="2" fill="#0cff06"/>
<rect y="123.95" width="1024" height="2" fill="#ffff00"/>
<rect y="127.08" width="1024" height="2" fill="#0cff06"/>
<rect y="130.22" width="1024" height="2" fill="#0cff06"/>
<rect y="133.35" width="1024" height="2" fill="#0cff06"/>
<rect y="136.49" width="1024" height="2" fill="#0cff06"/>
<rect y="139.62" width="1024" height="2" fill="#0cff06"/>
<rect y="142.76" width="1024" height="2" fill="#0cff06"/>
<rect y="145.89" width="1024" height="2" fill="#0cff06"/>
<rect y="149.03" width="1024" height="2" fill="#0cff06"/>
<rect y="152.16" width="1024" height="2" fill="#0cff06"/>
<rect y="155.3" width="1024" height="2" fill="#ffff00"/>
<rect y="158.44" width="1024" height="2" fill="#0cff06"/>
<rect y="161.57" width="1024" height="2" fill="#0cff06"/>
<rect y="164.7" width="1024" height="2" fill="#0cff06"/>
<rect y="167.84" width="1024" height="2" fill="#0cff06"/>
<rect y="170.97" width="1024" height="2" fill="#0cff06"/>
<rect y="174.11" width="1024" height="2" fill="#0cff06"/>
<rect y="177.25" width="1024" height="2" fill="#0cff06"/>
<rect y="180.38" width="1024" height="2" fill="#0cff06"/>
<rect y="183.51" width="1024" height="2" fill="#0cff06"/>
<rect y="186.65" width="1024" height="2" fill="#ffff00"/>
<rect y="189.78" width="1024" height="2" fill="#0cff06"/>
<rect y="192.92" width="1024" height="2" fill="#0cff06"/>
<rect y="196.06" width="1024" height="2" fill="#0cff06"/>
<rect y="199.19" width="1024" height="2" fill="#0cff06"/>
<rect y="202.32" width="1024" height="2" fill="#0cff06"/>
<rect y="205.46" width="1024" height="2" fill="#0cff06"/>
<rect y="208.59" width="1024" height="2" fill="#0cff06"/>
<rect y="211.73" width="1024" height="2" fill="#0cff06"/>
<rect y="214.86" width="1024" height="2" fill="#0cff06"/>
<rect y="218" width="1024" height="2" fill="#ffff00"/>
<rect y="221.13" width="1024" height="2" fill="#0cff06"/>
<rect y="224.27" width="1024" height="2" fill="#0cff06"/>
<rect y="227.41" width="1024" height="2" fill="#0cff06"/>
<rect y="230.54" width="1024" height="2" fill="#0cff06"/>
<rect y="233.67" width="1024" height="2" fill="#0cff06"/>
<rect y="236.81" width="1024" height="2" fill="#0cff06"/>
<rect y="239.94" width="1024" height="2" fill="#0cff06"/>
<rect y="243.08" width="1024" height="2" fill="#0cff06"/>
<rect y="246.22" width="1024" height="2" fill="#0cff06"/>
<rect y="249.35" width="1024" height="2" fill="#ffff00"/>
<rect y="252.48" width="1024" height="2" fill="#0cff06"/>
<rect y="255.62" width="1024" height="2" fill="#0cff06"/>
<rect y="258.75" width="1024" height="2" fill="#0cff06"/>
<rect y="261.89" width="1024" height="2" fill="#0cff06"/>
<rect y="265.02" width="1024" height="2" fill="#0cff06"/>
<rect y="268.16" width="1024" height="2" fill="#0cff06"/>
<rect y="271.29" width="1024" height="2" fill="#0cff06"/>
<rect y="274.43" width="1024" height="2" fill="#0cff06"/>
<rect y="277.56" width="1024" height="2" fill="#0cff06"/>
<rect y="280.7" width="1024" height="2" fill="#ffff00"/>
<rect y="283.83" width="1024" height="2" fill="#0cff06"/>
<rect y="286.97" width="1024" height="2" fill="#0cff06"/>
<rect y="290.1" width="1024" height="2" fill="#0cff06"/>
<rect y="293.24" width="1024" height="2" fill="#0cff06"/>
<rect y="296.37" width="1024" height="2" fill="#0cff06"/>
<rect y="299.51" width="1024" height="2" fill="#0cff06"/>
<rect y="302.64" width="1024" height="2" fill="#0cff06"/>
<rect y="305.78" width="1024" height="2" fill="#0cff06"/>
<rect y="308.91" width="1024" height="2" fill="#0cff06"/>
<rect y="312.05" width="1024" height="2" fill="#ffff00"/>
<rect y="315.18" width="1024" height="2" fill="#0cff06"/>
<rect y="318.32" width="1024" height="2" fill="#0cff06"/>
<rect y="321.45" width="1024" height="2" fill="#0cff06"/>
<rect y="324.59" width="1024" height="2" fill="#0cff06"/>
<rect y="327.72" width="1024" height="2" fill="#0cff06"/>
<rect y="330.86" width="1024" height="2" fill="#0cff06"/>
<rect y="333.99" width="1024" height="2" fill="#0cff06"/>
<rect y="337.13" width="1024" height="2" fill="#0cff06"/>
<rect y="340.26" width="1024" height="2" fill="#0cff06"/>
<rect y="343.4" width="1024" height="2" fill="#ffff00"/>
</pattern>
<filter id="sb" x="-0.01" y="-0.01" width="1.02" height="1.02"><feGaussianBlur stdDeviation="0.3 0.4"/></filter>
</defs>
<g filter="url(#sb)">
<rect x="335.88" y="29.5" width="21.2" height="317" fill="url(#pu)"/>
<rect x="335.88" y="283.33" width="21.2" height="63.17" fill="url(#pl)"/>
<rect x="335.88" y="239.94" width="21.2" height="2" fill="#0cff06"/>
<rect x="358.05" y="29.5" width="21.2" height="317" fill="url(#pu)"/>
<rect x="358.05" y="258.25" width="21.2" height="88.25" fill="url(#pl)"/>
<rect x="358.05" y="246.22" width="21.2" height="2" fill="#0cff06"/>
<rect x="380.23" y="29.5" width="21.2" height="317" fill="url(#pu)"/>
<rect x="380.23" y="248.85" width="21.2" height="97.65" fill="url(#pl)"/>
<rect x="380.23" y="221.13" width="21.2" height="2" fill="#0cff06"/>
<rect x="402.4" y="29.5" width="21.2" height="317" fill="url(#pu)"/>
<rect x="402.4" y="204.96" width="21.2" height="141.54" fill="url(#pl)"/>
<rect x="402.4" y="192.92" width="21.2" height="2" fill="#0cff06"/>
<rect x="424.57" y="29.5" width="21.2" height="317" fill="url(#pu)"/>
<rect x="424.57" y="192.42" width="21.2" height="154.08" fill="url(#pl)"/>
<rect x="424.57" y="170.97" width="21.2" height="2" fill="#0cff06"/>
<rect x="446.75" y="29.5" width="21.2" height="317" fill="url(#pu)"/>
<rect x="446.75" y="189.28" width="21.2" height="157.22" fill="url(#pl)"/>
<rect x="446.75" y="158.44" width="21.2" height="2" fill="#0cff06"/>
<rect x="468.92" y="29.5" width="21.2" height="317" fill="url(#pu)"/>
<rect x="468.92" y="195.56" width="21.2" height="150.94" fill="url(#pl)"/>
<rect x="468.92" y="158.44" width="21.2" height="2" fill="#0cff06"/>
<rect x="491.09" y="29.5" width="21.2" height="317" fill="url(#pu)"/>
<rect x="491.09" y="201.82" width="21.2" height="144.68" fill="url(#pl)"/>
<rect x="491.09" y="152.16" width="21.2" height="2" fill="#0cff06"/>
<rect x="513.26" y="29.5" width="21.2" height="317" fill="url(#pu)"/>
<rect x="513.26" y="161.07" width="21.2" height="185.43" fill="url(#pl)"/>
<rect x="513.26" y="136.49" width="21.2" height="2" fill="#0cff06"/>
<rect x="535.44" y="29.5" width="21.2" height="317" fill="url(#pu)"/>
<rect x="535.44" y="164.2" width="21.2" height="182.3" fill="url(#pl)"/>
<rect x="535.44" y="123.95" width="21.2" height="2" fill="#ffff00"/>
<rect x="557.61" y="29.5" width="21.2" height="317" fill="url(#pu)"/>
<rect x="557.61" y="154.8" width="21.2" height="191.7" fill="url(#pl)"/>
<rect x="557.61" y="102" width="21.2" height="2" fill="#0cff06"/>
<rect x="579.78" y="29.5" width="21.2" height="317" fill="url(#pu)"/>
<rect x="579.78" y="176.75" width="21.2" height="169.75" fill="url(#pl)"/>
<rect x="579.78" y="114.54" width="21.2" height="2" fill="#0cff06"/>
<rect x="601.96" y="29.5" width="21.2" height="317" fill="url(#pu)"/>
<rect x="601.96" y="135.99" width="21.2" height="210.51" fill="url(#pl)"/>
<rect x="601.96" y="120.81" width="21.2" height="2" fill="#0cff06"/>
<rect x="624.13" y="29.5" width="21.2" height="317" fill="url(#pu)"/>
<rect x="624.13" y="148.53" width="21.2" height="197.97" fill="url(#pl)"/>
<rect x="624.13" y="108.28" width="21.2" height="2" fill="#0cff06"/>
<rect x="646.3" y="29.5" width="21.2" height="317" fill="url(#pu)"/>
<rect x="646.3" y="110.91" width="21.2" height="235.59" fill="url(#pl)"/>
<rect x="668.47" y="29.5" width="21.2" height="317" fill="url(#pu)"/>
<rect x="668.47" y="120.31" width="21.2" height="226.19" fill="url(#pl)"/>
<rect x="690.65" y="29.5" width="21.2" height="317" fill="url(#pu)"/>
<rect x="690.65" y="139.12" width="21.2" height="207.38" fill="url(#pl)"/>
<rect x="690.65" y="117.68" width="21.2" height="2" fill="#0cff06"/>
<rect x="712.82" y="29.5" width="21.2" height="317" fill="url(#pu)"/>
<rect x="712.82" y="148.53" width="21.2" height="197.97" fill="url(#pl)"/>
<rect x="712.82" y="123.95" width="21.2" height="2" fill="#ffff00"/>
<rect x="734.99" y="29.5" width="21.2" height="317" fill="url(#pu)"/>
<rect x="734.99" y="173.61" width="21.2" height="172.89" fill="url(#pl)"/>
<rect x="734.99" y="142.76" width="21.2" height="2" fill="#0cff06"/>
<rect x="757.17" y="29.5" width="21.2" height="317" fill="url(#pu)"/>
<rect x="757.17" y="179.88" width="21.2" height="166.62" fill="url(#pl)"/>
<rect x="757.17" y="145.89" width="21.2" height="2" fill="#0cff06"/>
<rect x="779.34" y="29.5" width="21.2" height="317" fill="url(#pu)"/>
<rect x="779.34" y="186.15" width="21.2" height="160.35" fill="url(#pl)"/>
<rect x="779.34" y="155.3" width="21.2" height="2" fill="#ffff00"/>
<rect x="801.51" y="29.5" width="21.2" height="317" fill="url(#pu)"/>
<rect x="801.51" y="189.28" width="21.2" height="157.22" fill="url(#pl)"/>
<rect x="801.51" y="183.51" width="21.2" height="2" fill="#0cff06"/>
<rect x="823.69" y="29.5" width="21.2" height="317" fill="url(#pu)"/>
<rect x="823.69" y="170.47" width="21.2" height="176.03" fill="url(#pl)"/>
<rect x="823.69" y="152.16" width="21.2" height="2" fill="#0cff06"/>
<rect x="845.86" y="29.5" width="21.2" height="317" fill="url(#pu)"/>
<rect x="845.86" y="183.01" width="21.2" height="163.49" fill="url(#pl)"/>
<rect x="845.86" y="164.7" width="21.2" height="2" fill="#0cff06"/>
<rect x="868.03" y="29.5" width="21.2" height="317" fill="url(#pu)"/>
<rect x="868.03" y="157.94" width="21.2" height="188.56" fill="url(#pl)"/>
<rect x="868.03" y="152.16" width="21.2" height="2" fill="#0cff06"/>
<rect x="890.2" y="29.5" width="21.2" height="317" fill="url(#pu)"/>
<rect x="890.2" y="192.42" width="21.2" height="154.08" fill="url(#pl)"/>
<rect x="890.2" y="142.76" width="21.2" height="2" fill="#0cff06"/>
<rect x="912.38" y="29.5" width="21.2" height="317" fill="url(#pu)"/>
<rect x="912.38" y="220.63" width="21.2" height="125.87" fill="url(#pl)"/>
<rect x="912.38" y="111.41" width="21.2" height="2" fill="#0cff06"/>
<rect x="934.55" y="29.5" width="21.2" height="317" fill="url(#pu)"/>
<rect x="934.55" y="251.98" width="21.2" height="94.52" fill="url(#pl)"/>
<rect x="934.55" y="158.44" width="21.2" height="2" fill="#0cff06"/>
<rect x="956.72" y="29.5" width="21.2" height="317" fill="url(#pu)"/>
<rect x="956.72" y="305.28" width="21.2" height="41.22" fill="url(#pl)"/>
<rect x="956.72" y="221.13" width="21.2" height="2" fill="#0cff06"/>
<rect x="978.9" y="29.5" width="21.2" height="317" fill="url(#pu)"/>
<rect x="978.9" y="339.76" width="21.2" height="6.74" fill="url(#pl)"/>
<rect x="978.9" y="255.62" width="21.2" height="2" fill="#0cff06"/>
</g>
<text x="331.2" y="35.17" font-size="10.8" fill="#cac7a8" stroke="#cac7a8" stroke-width="0.3" text-anchor="end">+0</text>
<text x="1005.5" y="35.17" font-size="10.8" fill="#cac7a8" stroke="#cac7a8" stroke-width="0.3" text-anchor="start">+0</text>
<text x="331.2" y="97.74" font-size="10.8" fill="#cac7a8" stroke="#cac7a8" stroke-width="0.3" text-anchor="end">-10</text>
<text x="1005.5" y="97.74" font-size="10.8" fill="#cac7a8" stroke="#cac7a8" stroke-width="0.3" text-anchor="start">-10</text>
<text x="331.2" y="160.31" font-size="10.8" fill="#cac7a8" stroke="#cac7a8" stroke-width="0.3" text-anchor="end">-20</text>
<text x="1005.5" y="160.31" font-size="10.8" fill="#cac7a8" stroke="#cac7a8" stroke-width="0.3" text-anchor="start">-20</text>
<text x="331.2" y="222.88" font-size="10.8" fill="#cac7a8" stroke="#cac7a8" stroke-width="0.3" text-anchor="end">-30</text>
<text x="1005.5" y="222.88" font-size="10.8" fill="#cac7a8" stroke="#cac7a8" stroke-width="0.3" text-anchor="start">-30</text>
<text x="331.2" y="285.45" font-size="10.8" fill="#cac7a8" stroke="#cac7a8" stroke-width="0.3" text-anchor="end">-40</text>
<text x="1005.5" y="285.45" font-size="10.8" fill="#cac7a8" stroke="#cac7a8" stroke-width="0.3" text-anchor="start">-40</text>
<text x="331.2" y="348.02" font-size="10.8" fill="#cac7a8" stroke="#cac7a8" stroke-width="0.3" text-anchor="end">-50</text>
<text x="1005.5" y="348.02" font-size="10.8" fill="#cac7a8" stroke="#cac7a8" stroke-width="0.3" text-anchor="start">-50</text>
<text x="346.48" y="359.17" font-size="10.8" fill="#cac7a8" stroke="#cac7a8" stroke-width="0.3" text-anchor="middle">25</text>
<text x="368.65" y="371.17" font-size="10.8" fill="#cac7a8" stroke="#cac7a8" stroke-width="0.3" text-anchor="middle">31.5</text>
<text x="390.83" y="359.17" font-size="10.8" fill="#cac7a8" stroke="#cac7a8" stroke-width="0.3" text-anchor="middle">40</text>
<text x="413" y="371.17" font-size="10.8" fill="#cac7a8" stroke="#cac7a8" stroke-width="0.3" text-anchor="middle">50</text>
<text x="435.17" y="359.17" font-size="10.8" fill="#cac7a8" stroke="#cac7a8" stroke-width="0.3" text-anchor="middle">63</text>
<text x="457.35" y="371.17" font-size="10.8" fill="#cac7a8" stroke="#cac7a8" stroke-width="0.3" text-anchor="middle">80</text>
<text x="479.52" y="359.17" font-size="10.8" fill="#cac7a8" stroke="#cac7a8" stroke-width="0.3" text-anchor="middle">100</text>
<text x="501.69" y="371.17" font-size="10.8" fill="#cac7a8" stroke="#cac7a8" stroke-width="0.3" text-anchor="middle">125</text>
<text x="523.86" y="359.17" font-size="10.8" fill="#cac7a8" stroke="#cac7a8" stroke-width="0.3" text-anchor="middle">160</text>
<text x="546.04" y="371.17" font-size="10.8" fill="#cac7a8" stroke="#cac7a8" stroke-width="0.3" text-anchor="middle">200</text>
<text x="568.21" y="359.17" font-size="10.8" fill="#cac7a8" stroke="#cac7a8" stroke-width="0.3" text-anchor="middle">250</text>
<text x="590.38" y="371.17" font-size="10.8" fill="#cac7a8" stroke="#cac7a8" stroke-width="0.3" text-anchor="middle">315</text>
<text x="612.56" y="359.17" font-size="10.8" fill="#cac7a8" stroke="#cac7a8" stroke-width="0.3" text-anchor="middle">400</text>
<text x="634.73" y="371.17" font-size="10.8" fill="#cac7a8" stroke="#cac7a8" stroke-width="0.3" text-anchor="middle">500</text>
<text x="656.9" y="359.17" font-size="10.8" fill="#cac7a8" stroke="#cac7a8" stroke-width="0.3" text-anchor="middle">630</text>
<text x="679.07" y="371.17" font-size="10.8" fill="#cac7a8" stroke="#cac7a8" stroke-width="0.3" text-anchor="middle">800</text>
<text x="701.25" y="359.17" font-size="10.8" fill="#cac7a8" stroke="#cac7a8" stroke-width="0.3" text-anchor="middle">1k</text>
<text x="723.42" y="371.17" font-size="10.8" fill="#cac7a8" stroke="#cac7a8" stroke-width="0.3" text-anchor="middle">1k25</text>
<text x="745.59" y="359.17" font-size="10.8" fill="#cac7a8" stroke="#cac7a8" stroke-width="0.3" text-anchor="middle">1k6</text>
<text x="767.77" y="371.17" font-size="10.8" fill="#cac7a8" stroke="#cac7a8" stroke-width="0.3" text-anchor="middle">2k</text>
<text x="789.94" y="359.17" font-size="10.8" fill="#cac7a8" stroke="#cac7a8" stroke-width="0.3" text-anchor="middle">2k5</text>
<text x="812.11" y="371.17" font-size="10.8" fill="#cac7a8" stroke="#cac7a8" stroke-width="0.3" text-anchor="middle">3k15</text>
<text x="834.29" y="359.17" font-size="10.8" fill="#cac7a8" stroke="#cac7a8" stroke-width="0.3" text-anchor="middle">4k</text>
<text x="856.46" y="371.17" font-size="10.8" fill="#cac7a8" stroke="#cac7a8" stroke-width="0.3" text-anchor="middle">5k</text>
<text x="878.63" y="359.17" font-size="10.8" fill="#cac7a8" stroke="#cac7a8" stroke-width="0.3" text-anchor="middle">6k3</text>
<text x="900.8" y="371.17" font-size="10.8" fill="#cac7a8" stroke="#cac7a8" stroke-width="0.3" text-anchor="middle">8k</text>
<text x="922.98" y="359.17" font-size="10.8" fill="#cac7a8" stroke="#cac7a8" stroke-width="0.3" text-anchor="middle">10k</text>
<text x="945.15" y="371.17" font-size="10.8" fill="#cac7a8" stroke="#cac7a8" stroke-width="0.3" text-anchor="middle">12k5</text>
<text x="967.32" y="359.17" font-size="10.8" fill="#cac7a8" stroke="#cac7a8" stroke-width="0.3" text-anchor="middle">16k</text>
<text x="989.5" y="371.17" font-size="10.8" fill="#cac7a8" stroke="#cac7a8" stroke-width="0.3" text-anchor="middle">20k</text>
<rect x="130.2" y="407.68" width="2.4" height="1" fill="#939393"/>
<rect x="153.1" y="407.68" width="2.4" height="1" fill="#939393"/>
<rect x="130.2" y="413.36" width="2.4" height="1" fill="#939393"/>
<rect x="153.1" y="413.36" width="2.4" height="1" fill="#939393"/>
<rect x="130.2" y="419.04" width="2.4" height="1" fill="#939393"/>
<rect x="153.1" y="419.04" width="2.4" height="1" fill="#939393"/>
<rect x="130.2" y="424.72" width="2.4" height="1" fill="#939393"/>
<rect x="153.1" y="424.72" width="2.4" height="1" fill="#939393"/>
<rect x="130.2" y="436.08" width="2.4" height="1" fill="#939393"/>
<rect x="153.1" y="436.08" width="2.4" height="1" fill="#939393"/>
<rect x="130.2" y="441.76" width="2.4" height="1" fill="#939393"/>
<rect x="153.1" y="441.76" width="2.4" height="1" fill="#939393"/>
<rect x="130.2" y="447.44" width="2.4" height="1" fill="#939393"/>
<rect x="153.1" y="447.44" width="2.4" height="1" fill="#939393"/>
<rect x="130.2" y="453.12" width="2.4" height="1" fill="#939393"/>
<rect x="153.1" y="453.12" width="2.4" height="1" fill="#939393"/>
<rect x="130.2" y="464.48" width="2.4" height="1" fill="#939393"/>
<rect x="153.1" y="464.48" width="2.4" height="1" fill="#939393"/>
<rect x="130.2" y="470.16" width="2.4" height="1" fill="#939393"/>
<rect x="153.1" y="470.16" width="2.4" height="1" fill="#939393"/>
<rect x="130.2" y="475.84" width="2.4" height="1" fill="#939393"/>
<rect x="153.1" y="475.84" width="2.4" height="1" fill="#939393"/>
<rect x="130.2" y="481.52" width="2.4" height="1" fill="#939393"/>
<rect x="153.1" y="481.52" width="2.4" height="1" fill="#939393"/>
<rect x="130.2" y="492.88" width="2.4" height="1" fill="#939393"/>
<rect x="153.1" y="492.88" width="2.4" height="1" fill="#939393"/>
<rect x="130.2" y="498.56" width="2.4" height="1" fill="#939393"/>
<rect x="153.1" y="498.56" width="2.4" height="1" fill="#939393"/>
<rect x="130.2" y="504.24" width="2.4" height="1" fill="#939393"/>
<rect x="153.1" y="504.24" width="2.4" height="1" fill="#939393"/>
<rect x="130.2" y="509.92" width="2.4" height="1" fill="#939393"/>
<rect x="153.1" y="509.92" width="2.4" height="1" fill="#939393"/>
<rect x="130.2" y="520.05" width="2.4" height="1" fill="#939393"/>
<rect x="153.1" y="520.05" width="2.4" height="1" fill="#939393"/>
<rect x="130.2" y="524.5" width="2.4" height="1" fill="#939393"/>
<rect x="153.1" y="524.5" width="2.4" height="1" fill="#939393"/>
<rect x="130.2" y="528.95" width="2.4" height="1" fill="#939393"/>
<rect x="153.1" y="528.95" width="2.4" height="1" fill="#939393"/>
<rect x="130.2" y="533.4" width="2.4" height="1" fill="#939393"/>
<rect x="153.1" y="533.4" width="2.4" height="1" fill="#939393"/>
<rect x="130.2" y="542.3" width="2.4" height="1" fill="#939393"/>
<rect x="153.1" y="542.3" width="2.4" height="1" fill="#939393"/>
<rect x="130.2" y="546.75" width="2.4" height="1" fill="#939393"/>
<rect x="153.1" y="546.75" width="2.4" height="1" fill="#939393"/>
<rect x="130.2" y="551.2" width="2.4" height="1" fill="#939393"/>
<rect x="153.1" y="551.2" width="2.4" height="1" fill="#939393"/>
<rect x="130.2" y="555.65" width="2.4" height="1" fill="#939393"/>
<rect x="153.1" y="555.65" width="2.4" height="1" fill="#939393"/>
<rect x="128.6" y="430.35" width="4" height="1.1" fill="#8e8e8e"/>
<rect x="153.1" y="430.35" width="4" height="1.1" fill="#8e8e8e"/>
<rect x="128.6" y="487.15" width="4" height="1.1" fill="#8e8e8e"/>
<rect x="153.1" y="487.15" width="4" height="1.1" fill="#8e8e8e"/>
<rect x="128.6" y="537.8" width="4" height="1.1" fill="#8e8e8e"/>
<rect x="153.1" y="537.8" width="4" height="1.1" fill="#8e8e8e"/>
<rect x="128.6" y="576.05" width="4" height="1.1" fill="#8e8e8e"/>
<rect x="153.1" y="576.05" width="4" height="1.1" fill="#8e8e8e"/>
<rect x="128.6" y="605.45" width="4" height="1.1" fill="#8e8e8e"/>
<rect x="153.1" y="605.45" width="4" height="1.1" fill="#8e8e8e"/>
<rect x="125.1" y="401.95" width="7.5" height="1.1" fill="#8e8e8e"/>
<rect x="153.1" y="401.95" width="7.5" height="1.1" fill="#8e8e8e"/>
<rect x="125.1" y="458.75" width="7.5" height="1.1" fill="#8e8e8e"/>
<rect x="153.1" y="458.75" width="7.5" height="1.1" fill="#8e8e8e"/>
<rect x="125.1" y="515.55" width="7.5" height="1.1" fill="#8e8e8e"/>
<rect x="153.1" y="515.55" width="7.5" height="1.1" fill="#8e8e8e"/>
<rect x="125.1" y="560.05" width="7.5" height="1.1" fill="#8e8e8e"/>
<rect x="153.1" y="560.05" width="7.5" height="1.1" fill="#8e8e8e"/>
<rect x="125.1" y="592.05" width="7.5" height="1.1" fill="#8e8e8e"/>
<rect x="153.1" y="592.05" width="7.5" height="1.1" fill="#8e8e8e"/>
<rect x="125.1" y="614.35" width="7.5" height="1.1" fill="#8e8e8e"/>
<rect x="153.1" y="614.35" width="7.5" height="1.1" fill="#8e8e8e"/>
<rect x="128.6" y="618.45" width="4" height="1.1" fill="#8e8e8e"/>
<rect x="153.1" y="618.45" width="4" height="1.1" fill="#8e8e8e"/>
<rect x="125.1" y="622.35" width="7.5" height="1.1" fill="#8e8e8e"/>
<rect x="153.1" y="622.35" width="7.5" height="1.1" fill="#8e8e8e"/>
<rect x="125.1" y="625.45" width="7.5" height="1.1" fill="#8e8e8e"/>
<rect x="153.1" y="625.45" width="7.5" height="1.1" fill="#8e8e8e"/>
<rect x="170.6" y="407.68" width="2.4" height="1" fill="#939393"/>
<rect x="193.5" y="407.68" width="2.4" height="1" fill="#939393"/>
<rect x="170.6" y="413.36" width="2.4" height="1" fill="#939393"/>
<rect x="193.5" y="413.36" width="2.4" height="1" fill="#939393"/>
<rect x="170.6" y="419.04" width="2.4" height="1" fill="#939393"/>
<rect x="193.5" y="419.04" width="2.4" height="1" fill="#939393"/>
<rect x="170.6" y="424.72" width="2.4" height="1" fill="#939393"/>
<rect x="193.5" y="424.72" width="2.4" height="1" fill="#939393"/>
<rect x="170.6" y="436.08" width="2.4" height="1" fill="#939393"/>
<rect x="193.5" y="436.08" width="2.4" height="1" fill="#939393"/>
<rect x="170.6" y="441.76" width="2.4" height="1" fill="#939393"/>
<rect x="193.5" y="441.76" width="2.4" height="1" fill="#939393"/>
<rect x="170.6" y="447.44" width="2.4" height="1" fill="#939393"/>
<rect x="193.5" y="447.44" width="2.4" height="1" fill="#939393"/>
<rect x="170.6" y="453.12" width="2.4" height="1" fill="#939393"/>
<rect x="193.5" y="453.12" width="2.4" height="1" fill="#939393"/>
<rect x="170.6" y="464.48" width="2.4" height="1" fill="#939393"/>
<rect x="193.5" y="464.48" width="2.4" height="1" fill="#939393"/>
<rect x="170.6" y="470.16" width="2.4" height="1" fill="#939393"/>
<rect x="193.5" y="470.16" width="2.4" height="1" fill="#939393"/>
<rect x="170.6" y="475.84" width="2.4" height="1" fill="#939393"/>
<rect x="193.5" y="475.84" width="2.4" height="1" fill="#939393"/>
<rect x="170.6" y="481.52" width="2.4" height="1" fill="#939393"/>
<rect x="193.5" y="481.52" width="2.4" height="1" fill="#939393"/>
<rect x="170.6" y="492.88" width="2.4" height="1" fill="#939393"/>
<rect x="193.5" y="492.88" width="2.4" height="1" fill="#939393"/>
<rect x="170.6" y="498.56" width="2.4" height="1" fill="#939393"/>
<rect x="193.5" y="498.56" width="2.4" height="1" fill="#939393"/>
<rect x="170.6" y="504.24" width="2.4" height="1" fill="#939393"/>
<rect x="193.5" y="504.24" width="2.4" height="1" fill="#939393"/>
<rect x="170.6" y="509.92" width="2.4" height="1" fill="#939393"/>
<rect x="193.5" y="509.92" width="2.4" height="1" fill="#939393"/>
<rect x="170.6" y="520.05" width="2.4" height="1" fill="#939393"/>
<rect x="193.5" y="520.05" width="2.4" height="1" fill="#939393"/>
<rect x="170.6" y="524.5" width="2.4" height="1" fill="#939393"/>
<rect x="193.5" y="524.5" width="2.4" height="1" fill="#939393"/>
<rect x="170.6" y="528.95" width="2.4" height="1" fill="#939393"/>
<rect x="193.5" y="528.95" width="2.4" height="1" fill="#939393"/>
<rect x="170.6" y="533.4" width="2.4" height="1" fill="#939393"/>
<rect x="193.5" y="533.4" width="2.4" height="1" fill="#939393"/>
<rect x="170.6" y="542.3" width="2.4" height="1" fill="#939393"/>
<rect x="193.5" y="542.3" width="2.4" height="1" fill="#939393"/>
<rect x="170.6" y="546.75" width="2.4" height="1" fill="#939393"/>
<rect x="193.5" y="546.75" width="2.4" height="1" fill="#939393"/>
<rect x="170.6" y="551.2" width="2.4" height="1" fill="#939393"/>
<rect x="193.5" y="551.2" width="2.4" height="1" fill="#939393"/>
<rect x="170.6" y="555.65" width="2.4" height="1" fill="#939393"/>
<rect x="193.5" y="555.65" width="2.4" height="1" fill="#939393"/>
<rect x="169" y="430.35" width="4" height="1.1" fill="#8e8e8e"/>
<rect x="193.5" y="430.35" width="4" height="1.1" fill="#8e8e8e"/>
<rect x="169" y="487.15" width="4" height="1.1" fill="#8e8e8e"/>
<rect x="193.5" y="487.15" width="4" height="1.1" fill="#8e8e8e"/>
<rect x="169" y="537.8" width="4" height="1.1" fill="#8e8e8e"/>
<rect x="193.5" y="537.8" width="4" height="1.1" fill="#8e8e8e"/>
<rect x="169" y="576.05" width="4" height="1.1" fill="#8e8e8e"/>
<rect x="193.5" y="576.05" width="4" height="1.1" fill="#8e8e8e"/>
<rect x="169" y="605.45" width="4" height="1.1" fill="#8e8e8e"/>
<rect x="193.5" y="605.45" width="4" height="1.1" fill="#8e8e8e"/>
<rect x="165.5" y="401.95" width="7.5" height="1.1" fill="#8e8e8e"/>
<rect x="193.5" y="401.95" width="7.5" height="1.1" fill="#8e8e8e"/>
<rect x="165.5" y="458.75" width="7.5" height="1.1" fill="#8e8e8e"/>
<rect x="193.5" y="458.75" width="7.5" height="1.1" fill="#8e8e8e"/>
<rect x="165.5" y="515.55" width="7.5" height="1.1" fill="#8e8e8e"/>
<rect x="193.5" y="515.55" width="7.5" height="1.1" fill="#8e8e8e"/>
<rect x="165.5" y="560.05" width="7.5" height="1.1" fill="#8e8e8e"/>
<rect x="193.5" y="560.05" width="7.5" height="1.1" fill="#8e8e8e"/>
<rect x="165.5" y="592.05" width="7.5" height="1.1" fill="#8e8e8e"/>
<rect x="193.5" y="592.05" width="7.5" height="1.1" fill="#8e8e8e"/>
<rect x="165.5" y="614.35" width="7.5" height="1.1" fill="#8e8e8e"/>
<rect x="193.5" y="614.35" width="7.5" height="1.1" fill="#8e8e8e"/>
<rect x="169" y="618.45" width="4" height="1.1" fill="#8e8e8e"/>
<rect x="193.5" y="618.45" width="4" height="1.1" fill="#8e8e8e"/>
<rect x="165.5" y="622.35" width="7.5" height="1.1" fill="#8e8e8e"/>
<rect x="193.5" y="622.35" width="7.5" height="1.1" fill="#8e8e8e"/>
<rect x="165.5" y="625.45" width="7.5" height="1.1" fill="#8e8e8e"/>
<rect x="193.5" y="625.45" width="7.5" height="1.1" fill="#8e8e8e"/>
<rect x="210.9" y="407.68" width="2.4" height="1" fill="#939393"/>
<rect x="233.8" y="407.68" width="2.4" height="1" fill="#939393"/>
<rect x="210.9" y="413.36" width="2.4" height="1" fill="#939393"/>
<rect x="233.8" y="413.36" width="2.4" height="1" fill="#939393"/>
<rect x="210.9" y="419.04" width="2.4" height="1" fill="#939393"/>
<rect x="233.8" y="419.04" width="2.4" height="1" fill="#939393"/>
<rect x="210.9" y="424.72" width="2.4" height="1" fill="#939393"/>
<rect x="233.8" y="424.72" width="2.4" height="1" fill="#939393"/>
<rect x="210.9" y="436.08" width="2.4" height="1" fill="#939393"/>
<rect x="233.8" y="436.08" width="2.4" height="1" fill="#939393"/>
<rect x="210.9" y="441.76" width="2.4" height="1" fill="#939393"/>
<rect x="233.8" y="441.76" width="2.4" height="1" fill="#939393"/>
<rect x="210.9" y="447.44" width="2.4" height="1" fill="#939393"/>
<rect x="233.8" y="447.44" width="2.4" height="1" fill="#939393"/>
<rect x="210.9" y="453.12" width="2.4" height="1" fill="#939393"/>
<rect x="233.8" y="453.12" width="2.4" height="1" fill="#939393"/>
<rect x="210.9" y="464.48" width="2.4" height="1" fill="#939393"/>
<rect x="233.8" y="464.48" width="2.4" height="1" fill="#939393"/>
<rect x="210.9" y="470.16" width="2.4" height="1" fill="#939393"/>
<rect x="233.8" y="470.16" width="2.4" height="1" fill="#939393"/>
<rect x="210.9" y="475.84" width="2.4" height="1" fill="#939393"/>
<rect x="233.8" y="475.84" width="2.4" height="1" fill="#939393"/>
<rect x="210.9" y="481.52" width="2.4" height="1" fill="#939393"/>
<rect x="233.8" y="481.52" width="2.4" height="1" fill="#939393"/>
<rect x="210.9" y="492.88" width="2.4" height="1" fill="#939393"/>
<rect x="233.8" y="492.88" width="2.4" height="1" fill="#939393"/>
<rect x="210.9" y="498.56" width="2.4" height="1" fill="#939393"/>
<rect x="233.8" y="498.56" width="2.4" height="1" fill="#939393"/>
<rect x="210.9" y="504.24" width="2.4" height="1" fill="#939393"/>
<rect x="233.8" y="504.24" width="2.4" height="1" fill="#939393"/>
<rect x="210.9" y="509.92" width="2.4" height="1" fill="#939393"/>
<rect x="233.8" y="509.92" width="2.4" height="1" fill="#939393"/>
<rect x="210.9" y="520.05" width="2.4" height="1" fill="#939393"/>
<rect x="233.8" y="520.05" width="2.4" height="1" fill="#939393"/>
<rect x="210.9" y="524.5" width="2.4" height="1" fill="#939393"/>
<rect x="233.8" y="524.5" width="2.4" height="1" fill="#939393"/>
<rect x="210.9" y="528.95" width="2.4" height="1" fill="#939393"/>
<rect x="233.8" y="528.95" width="2.4" height="1" fill="#939393"/>
<rect x="210.9" y="533.4" width="2.4" height="1" fill="#939393"/>
<rect x="233.8" y="533.4" width="2.4" height="1" fill="#939393"/>
<rect x="210.9" y="542.3" width="2.4" height="1" fill="#939393"/>
<rect x="233.8" y="542.3" width="2.4" height="1" fill="#939393"/>
<rect x="210.9" y="546.75" width="2.4" height="1" fill="#939393"/>
<rect x="233.8" y="546.75" width="2.4" height="1" fill="#939393"/>
<rect x="210.9" y="551.2" width="2.4" height="1" fill="#939393"/>
<rect x="233.8" y="551.2" width="2.4" height="1" fill="#939393"/>
<rect x="210.9" y="555.65" width="2.4" height="1" fill="#939393"/>
<rect x="233.8" y="555.65" width="2.4" height="1" fill="#939393"/>
<rect x="209.3" y="430.35" width="4" height="1.1" fill="#8e8e8e"/>
<rect x="233.8" y="430.35" width="4" height="1.1" fill="#8e8e8e"/>
<rect x="209.3" y="487.15" width="4" height="1.1" fill="#8e8e8e"/>
<rect x="233.8" y="487.15" width="4" height="1.1" fill="#8e8e8e"/>
<rect x="209.3" y="537.8" width="4" height="1.1" fill="#8e8e8e"/>
<rect x="233.8" y="537.8" width="4" height="1.1" fill="#8e8e8e"/>
<rect x="209.3" y="576.05" width="4" height="1.1" fill="#8e8e8e"/>
<rect x="233.8" y="576.05" width="4" height="1.1" fill="#8e8e8e"/>
<rect x="209.3" y="605.45" width="4" height="1.1" fill="#8e8e8e"/>
<rect x="233.8" y="605.45" width="4" height="1.1" fill="#8e8e8e"/>
<rect x="205.8" y="401.95" width="7.5" height="1.1" fill="#8e8e8e"/>
<rect x="233.8" y="401.95" width="7.5" height="1.1" fill="#8e8e8e"/>
<rect x="205.8" y="458.75" width="7.5" height="1.1" fill="#8e8e8e"/>
<rect x="233.8" y="458.75" width="7.5" height="1.1" fill="#8e8e8e"/>
<rect x="205.8" y="515.55" width="7.5" height="1.1" fill="#8e8e8e"/>
<rect x="233.8" y="515.55" width="7.5" height="1.1" fill="#8e8e8e"/>
<rect x="205.8" y="560.05" width="7.5" height="1.1" fill="#8e8e8e"/>
<rect x="233.8" y="560.05" width="7.5" height="1.1" fill="#8e8e8e"/>
<rect x="205.8" y="592.05" width="7.5" height="1.1" fill="#8e8e8e"/>
<rect x="233.8" y="592.05" width="7.5" height="1.1" fill="#8e8e8e"/>
<rect x="205.8" y="614.35" width="7.5" height="1.1" fill="#8e8e8e"/>
<rect x="233.8" y="614.35" width="7.5" height="1.1" fill="#8e8e8e"/>
<rect x="209.3" y="618.45" width="4" height="1.1" fill="#8e8e8e"/>
<rect x="233.8" y="618.45" width="4" height="1.1" fill="#8e8e8e"/>
<rect x="205.8" y="622.35" width="7.5" height="1.1" fill="#8e8e8e"/>
<rect x="233.8" y="622.35" width="7.5" height="1.1" fill="#8e8e8e"/>
<rect x="205.8" y="625.45" width="7.5" height="1.1" fill="#8e8e8e"/>
<rect x="233.8" y="625.45" width="7.5" height="1.1" fill="#8e8e8e"/>
<rect x="251.3" y="407.68" width="2.4" height="1" fill="#939393"/>
<rect x="274.2" y="407.68" width="2.4" height="1" fill="#939393"/>
<rect x="251.3" y="413.36" width="2.4" height="1" fill="#939393"/>
<rect x="274.2" y="413.36" width="2.4" height="1" fill="#939393"/>
<rect x="251.3" y="419.04" width="2.4" height="1" fill="#939393"/>
<rect x="274.2" y="419.04" width="2.4" height="1" fill="#939393"/>
<rect x="251.3" y="424.72" width="2.4" height="1" fill="#939393"/>
<rect x="274.2" y="424.72" width="2.4" height="1" fill="#939393"/>
<rect x="251.3" y="436.08" width="2.4" height="1" fill="#939393"/>
<rect x="274.2" y="436.08" width="2.4" height="1" fill="#939393"/>
<rect x="251.3" y="441.76" width="2.4" height="1" fill="#939393"/>
<rect x="274.2" y="441.76" width="2.4" height="1" fill="#939393"/>
<rect x="251.3" y="447.44" width="2.4" height="1" fill="#939393"/>
<rect x="274.2" y="447.44" width="2.4" height="1" fill="#939393"/>
<rect x="251.3" y="453.12" width="2.4" height="1" fill="#939393"/>
<rect x="274.2" y="453.12" width="2.4" height="1" fill="#939393"/>
<rect x="251.3" y="464.48" width="2.4" height="1" fill="#939393"/>
<rect x="274.2" y="464.48" width="2.4" height="1" fill="#939393"/>
<rect x="251.3" y="470.16" width="2.4" height="1" fill="#939393"/>
<rect x="274.2" y="470.16" width="2.4" height="1" fill="#939393"/>
<rect x="251.3" y="475.84" width="2.4" height="1" fill="#939393"/>
<rect x="274.2" y="475.84" width="2.4" height="1" fill="#939393"/>
<rect x="251.3" y="481.52" width="2.4" height="1" fill="#939393"/>
<rect x="274.2" y="481.52" width="2.4" height="1" fill="#939393"/>
<rect x="251.3" y="492.88" width="2.4" height="1" fill="#939393"/>
<rect x="274.2" y="492.88" width="2.4" height="1" fill="#939393"/>
<rect x="251.3" y="498.56" width="2.4" height="1" fill="#939393"/>
<rect x="274.2" y="498.56" width="2.4" height="1" fill="#939393"/>
<rect x="251.3" y="504.24" width="2.4" height="1" fill="#939393"/>
<rect x="274.2" y="504.24" width="2.4" height="1" fill="#939393"/>
<rect x="251.3" y="509.92" width="2.4" height="1" fill="#939393"/>
<rect x="274.2" y="509.92" width="2.4" height="1" fill="#939393"/>
<rect x="251.3" y="520.05" width="2.4" height="1" fill="#939393"/>
<rect x="274.2" y="520.05" width="2.4" height="1" fill="#939393"/>
<rect x="251.3" y="524.5" width="2.4" height="1" fill="#939393"/>
<rect x="274.2" y="524.5" width="2.4" height="1" fill="#939393"/>
<rect x="251.3" y="528.95" width="2.4" height="1" fill="#939393"/>
<rect x="274.2" y="528.95" width="2.4" height="1" fill="#939393"/>
<rect x="251.3" y="533.4" width="2.4" height="1" fill="#939393"/>
<rect x="274.2" y="533.4" width="2.4" height="1" fill="#939393"/>
<rect x="251.3" y="542.3" width="2.4" height="1" fill="#939393"/>
<rect x="274.2" y="542.3" width="2.4" height="1" fill="#939393"/>
<rect x="251.3" y="546.75" width="2.4" height="1" fill="#939393"/>
<rect x="274.2" y="546.75" width="2.4" height="1" fill="#939393"/>
<rect x="251.3" y="551.2" width="2.4" height="1" fill="#939393"/>
<rect x="274.2" y="551.2" width="2.4" height="1" fill="#939393"/>
<rect x="251.3" y="555.65" width="2.4" height="1" fill="#939393"/>
<rect x="274.2" y="555.65" width="2.4" height="1" fill="#939393"/>
<rect x="249.7" y="430.35" width="4" height="1.1" fill="#8e8e8e"/>
<rect x="274.2" y="430.35" width="4" height="1.1" fill="#8e8e8e"/>
<rect x="249.7" y="487.15" width="4" height="1.1" fill="#8e8e8e"/>
<rect x="274.2" y="487.15" width="4" height="1.1" fill="#8e8e8e"/>
<rect x="249.7" y="537.8" width="4" height="1.1" fill="#8e8e8e"/>
<rect x="274.2" y="537.8" width="4" height="1.1" fill="#8e8e8e"/>
<rect x="249.7" y="576.05" width="4" height="1.1" fill="#8e8e8e"/>
<rect x="274.2" y="576.05" width="4" height="1.1" fill="#8e8e8e"/>
<rect x="249.7" y="605.45" width="4" height="1.1" fill="#8e8e8e"/>
<rect x="274.2" y="605.45" width="4" height="1.1" fill="#8e8e8e"/>
<rect x="246.2" y="401.95" width="7.5" height="1.1" fill="#8e8e8e"/>
<rect x="274.2" y="401.95" width="7.5" height="1.1" fill="#8e8e8e"/>
<rect x="246.2" y="458.75" width="7.5" height="1.1" fill="#8e8e8e"/>
<rect x="274.2" y="458.75" width="7.5" height="1.1" fill="#8e8e8e"/>
<rect x="246.2" y="515.55" width="7.5" height="1.1" fill="#8e8e8e"/>
<rect x="274.2" y="515.55" width="7.5" height="1.1" fill="#8e8e8e"/>
<rect x="246.2" y="560.05" width="7.5" height="1.1" fill="#8e8e8e"/>
<rect x="274.2" y="560.05" width="7.5" height="1.1" fill="#8e8e8e"/>
<rect x="246.2" y="592.05" width="7.5" height="1.1" fill="#8e8e8e"/>
<rect x="274.2" y="592.05" width="7.5" height="1.1" fill="#8e8e8e"/>
<rect x="246.2" y="614.35" width="7.5" height="1.1" fill="#8e8e8e"/>
<rect x="274.2" y="614.35" width="7.5" height="1.1" fill="#8e8e8e"/>
<rect x="249.7" y="618.45" width="4" height="1.1" fill="#8e8e8e"/>
<rect x="274.2" y="618.45" width="4" height="1.1" fill="#8e8e8e"/>
<rect x="246.2" y="622.35" width="7.5" height="1.1" fill="#8e8e8e"/>
<rect x="274.2" y="622.35" width="7.5" height="1.1" fill="#8e8e8e"/>
<rect x="246.2" y="625.45" width="7.5" height="1.1" fill="#8e8e8e"/>
<rect x="274.2" y="625.45" width="7.5" height="1.1" fill="#8e8e8e"/>
<rect x="132.6" y="398.9" width="20.5" height="226.7" fill="#000"/>
<rect x="173" y="398.9" width="20.5" height="226.7" fill="#000"/>
<rect x="213.3" y="398.9" width="20.5" height="226.7" fill="#000"/>
<rect x="253.7" y="398.9" width="20.5" height="226.7" fill="#000"/>
<rect x="132.6" y="467.2" width="20.5" height="158.4" fill="#0cff06"/>
<rect x="133.5" y="476.4" width="18.7" height="4.4" rx="2.2" fill="none" stroke="#0a3a0a" stroke-width="1.1"/>
<rect x="173" y="426.7" width="20.5" height="32.3" fill="#ffff00"/>
<rect x="173" y="459" width="20.5" height="166.6" fill="#0cff06"/>
<rect x="174.2" y="409.3" width="18.1" height="3.6" rx="1.8" fill="#ff0000"/>
<rect x="213.3" y="419.3" width="20.5" height="39.7" fill="#ffff00"/>
<rect x="213.3" y="459" width="20.5" height="166.6" fill="#0cff06"/>
<rect x="214.5" y="413.0" width="18.1" height="3.6" rx="1.8" fill="#ff0000"/>
<rect x="213.3" y="417.2" width="20.5" height="2.1" fill="#e00000"/>
<rect x="253.7" y="464.9" width="20.5" height="160.7" fill="#0cff06"/>
<rect x="254.6" y="475.4" width="18.7" height="4.4" rx="2.2" fill="none" stroke="#0a3a0a" stroke-width="1.1"/>
<text x="142.85" y="396.9" font-size="12" fill="#f2f2f2" stroke="#f2f2f2" stroke-width="0.3" text-anchor="middle">-13.6</text>
<text x="183.25" y="396.9" font-size="12" fill="#f2f2f2" stroke="#f2f2f2" stroke-width="0.3" text-anchor="middle">-1.7</text>
<text x="223.55" y="396.9" font-size="12" fill="#f2f2f2" stroke="#f2f2f2" stroke-width="0.3" text-anchor="middle">-3.6</text>
<text x="263.95" y="396.9" font-size="12" fill="#f2f2f2" stroke="#f2f2f2" stroke-width="0.3" text-anchor="middle">-13.4</text>
<text x="121" y="406.37" font-size="10.8" fill="#cac7a8" stroke="#cac7a8" stroke-width="0.3" text-anchor="end">0</text>
<text x="285.8" y="406.37" font-size="10.8" fill="#cac7a8" stroke="#cac7a8" stroke-width="0.3" text-anchor="start">0</text>
<text x="121" y="434.77" font-size="10.8" fill="#cac7a8" stroke="#cac7a8" stroke-width="0.3" text-anchor="end">-5</text>
<text x="285.8" y="434.77" font-size="10.8" fill="#cac7a8" stroke="#cac7a8" stroke-width="0.3" text-anchor="start">-5</text>
<text x="121" y="463.17" font-size="10.8" fill="#cac7a8" stroke="#cac7a8" stroke-width="0.3" text-anchor="end">-10</text>
<text x="285.8" y="463.17" font-size="10.8" fill="#cac7a8" stroke="#cac7a8" stroke-width="0.3" text-anchor="start">-10</text>
<text x="121" y="491.57" font-size="10.8" fill="#cac7a8" stroke="#cac7a8" stroke-width="0.3" text-anchor="end">-15</text>
<text x="285.8" y="491.57" font-size="10.8" fill="#cac7a8" stroke="#cac7a8" stroke-width="0.3" text-anchor="start">-15</text>
<text x="121" y="519.97" font-size="10.8" fill="#cac7a8" stroke="#cac7a8" stroke-width="0.3" text-anchor="end">-20</text>
<text x="285.8" y="519.97" font-size="10.8" fill="#cac7a8" stroke="#cac7a8" stroke-width="0.3" text-anchor="start">-20</text>
<text x="121" y="542.22" font-size="10.8" fill="#cac7a8" stroke="#cac7a8" stroke-width="0.3" text-anchor="end">-25</text>
<text x="285.8" y="542.22" font-size="10.8" fill="#cac7a8" stroke="#cac7a8" stroke-width="0.3" text-anchor="start">-25</text>
<text x="121" y="564.47" font-size="10.8" fill="#cac7a8" stroke="#cac7a8" stroke-width="0.3" text-anchor="end">-30</text>
<text x="285.8" y="564.47" font-size="10.8" fill="#cac7a8" stroke="#cac7a8" stroke-width="0.3" text-anchor="start">-30</text>
<text x="121" y="580.47" font-size="10.8" fill="#cac7a8" stroke="#cac7a8" stroke-width="0.3" text-anchor="end">-35</text>
<text x="285.8" y="580.47" font-size="10.8" fill="#cac7a8" stroke="#cac7a8" stroke-width="0.3" text-anchor="start">-35</text>
<text x="121" y="596.47" font-size="10.8" fill="#cac7a8" stroke="#cac7a8" stroke-width="0.3" text-anchor="end">-40</text>
<text x="285.8" y="596.47" font-size="10.8" fill="#cac7a8" stroke="#cac7a8" stroke-width="0.3" text-anchor="start">-40</text>
<text x="121" y="618.77" font-size="10.8" fill="#cac7a8" stroke="#cac7a8" stroke-width="0.3" text-anchor="end">-50</text>
<text x="285.8" y="618.77" font-size="10.8" fill="#cac7a8" stroke="#cac7a8" stroke-width="0.3" text-anchor="start">-50</text>
<text x="142.85" y="637.95" font-size="10.2" fill="#cac7a8" stroke="#cac7a8" stroke-width="0.3" text-anchor="middle">RMS</text>
<text x="183.25" y="637.95" font-size="10.2" fill="#cac7a8" stroke="#cac7a8" stroke-width="0.3" text-anchor="middle">L</text>
<text x="223.55" y="637.95" font-size="10.2" fill="#cac7a8" stroke="#cac7a8" stroke-width="0.3" text-anchor="middle">R</text>
<text x="263.95" y="637.95" font-size="10.2" fill="#cac7a8" stroke="#cac7a8" stroke-width="0.3" text-anchor="middle">RMS</text>
<rect x="110.5" y="647.6" width="185.7" height="6.9" fill="#000"/>
<rect x="281.9" y="647.8" width="2.1" height="6.5" fill="#10f010"/>
<text x="110.8" y="666.14" font-size="11" fill="#cac7a8" stroke="#cac7a8" stroke-width="0.3" text-anchor="middle">-1</text>
<text x="203.3" y="666.5" font-size="12" fill="#f2f2f2" stroke="#f2f2f2" stroke-width="0.3" text-anchor="middle">+0.84</text>
<text x="296.2" y="666.14" font-size="11" fill="#cac7a8" stroke="#cac7a8" stroke-width="0.3" text-anchor="middle">+1</text>
<rect x="541.7" y="406.5" width="2.4" height="1" fill="#939393"/>
<rect x="565" y="406.5" width="2.4" height="1" fill="#939393"/>
<rect x="541.7" y="410.8" width="2.4" height="1" fill="#939393"/>
<rect x="565" y="410.8" width="2.4" height="1" fill="#939393"/>
<rect x="541.7" y="419.37" width="2.4" height="1" fill="#939393"/>
<rect x="565" y="419.37" width="2.4" height="1" fill="#939393"/>
<rect x="541.7" y="423.64" width="2.4" height="1" fill="#939393"/>
<rect x="565" y="423.64" width="2.4" height="1" fill="#939393"/>
<rect x="541.7" y="427.91" width="2.4" height="1" fill="#939393"/>
<rect x="565" y="427.91" width="2.4" height="1" fill="#939393"/>
<rect x="541.7" y="432.18" width="2.4" height="1" fill="#939393"/>
<rect x="565" y="432.18" width="2.4" height="1" fill="#939393"/>
<rect x="541.7" y="440.72" width="2.4" height="1" fill="#939393"/>
<rect x="565" y="440.72" width="2.4" height="1" fill="#939393"/>
<rect x="541.7" y="444.99" width="2.4" height="1" fill="#939393"/>
<rect x="565" y="444.99" width="2.4" height="1" fill="#939393"/>
<rect x="541.7" y="449.26" width="2.4" height="1" fill="#939393"/>
<rect x="565" y="449.26" width="2.4" height="1" fill="#939393"/>
<rect x="541.7" y="453.53" width="2.4" height="1" fill="#939393"/>
<rect x="565" y="453.53" width="2.4" height="1" fill="#939393"/>
<rect x="541.7" y="462.07" width="2.4" height="1" fill="#939393"/>
<rect x="565" y="462.07" width="2.4" height="1" fill="#939393"/>
<rect x="541.7" y="466.34" width="2.4" height="1" fill="#939393"/>
<rect x="565" y="466.34" width="2.4" height="1" fill="#939393"/>
<rect x="541.7" y="470.61" width="2.4" height="1" fill="#939393"/>
<rect x="565" y="470.61" width="2.4" height="1" fill="#939393"/>
<rect x="541.7" y="474.88" width="2.4" height="1" fill="#939393"/>
<rect x="565" y="474.88" width="2.4" height="1" fill="#939393"/>
<rect x="541.7" y="483.42" width="2.4" height="1" fill="#939393"/>
<rect x="565" y="483.42" width="2.4" height="1" fill="#939393"/>
<rect x="541.7" y="487.69" width="2.4" height="1" fill="#939393"/>
<rect x="565" y="487.69" width="2.4" height="1" fill="#939393"/>
<rect x="541.7" y="491.96" width="2.4" height="1" fill="#939393"/>
<rect x="565" y="491.96" width="2.4" height="1" fill="#939393"/>
<rect x="541.7" y="496.23" width="2.4" height="1" fill="#939393"/>
<rect x="565" y="496.23" width="2.4" height="1" fill="#939393"/>
<rect x="540.1" y="436.4" width="4" height="1.1" fill="#8e8e8e"/>
<rect x="565" y="436.4" width="4" height="1.1" fill="#8e8e8e"/>
<rect x="540.1" y="479.1" width="4" height="1.1" fill="#8e8e8e"/>
<rect x="565" y="479.1" width="4" height="1.1" fill="#8e8e8e"/>
<rect x="540.1" y="517.45" width="4" height="1.1" fill="#8e8e8e"/>
<rect x="565" y="517.45" width="4" height="1.1" fill="#8e8e8e"/>
<rect x="540.1" y="546.65" width="4" height="1.1" fill="#8e8e8e"/>
<rect x="565" y="546.65" width="4" height="1.1" fill="#8e8e8e"/>
<rect x="540.1" y="568.45" width="4" height="1.1" fill="#8e8e8e"/>
<rect x="565" y="568.45" width="4" height="1.1" fill="#8e8e8e"/>
<rect x="536.9" y="402.15" width="7.2" height="1.1" fill="#8e8e8e"/>
<rect x="565" y="402.15" width="7.2" height="1.1" fill="#8e8e8e"/>
<rect x="536.9" y="415.05" width="7.2" height="1.1" fill="#8e8e8e"/>
<rect x="565" y="415.05" width="7.2" height="1.1" fill="#8e8e8e"/>
<rect x="536.9" y="457.75" width="7.2" height="1.1" fill="#8e8e8e"/>
<rect x="565" y="457.75" width="7.2" height="1.1" fill="#8e8e8e"/>
<rect x="536.9" y="500.45" width="7.2" height="1.1" fill="#8e8e8e"/>
<rect x="565" y="500.45" width="7.2" height="1.1" fill="#8e8e8e"/>
<rect x="536.9" y="534.45" width="7.2" height="1.1" fill="#8e8e8e"/>
<rect x="565" y="534.45" width="7.2" height="1.1" fill="#8e8e8e"/>
<rect x="536.9" y="558.85" width="7.2" height="1.1" fill="#8e8e8e"/>
<rect x="565" y="558.85" width="7.2" height="1.1" fill="#8e8e8e"/>
<rect x="536.9" y="575.65" width="7.2" height="1.1" fill="#8e8e8e"/>
<rect x="565" y="575.65" width="7.2" height="1.1" fill="#8e8e8e"/>
<rect x="536.9" y="580.95" width="7.2" height="1.1" fill="#8e8e8e"/>
<rect x="565" y="580.95" width="7.2" height="1.1" fill="#8e8e8e"/>
<rect x="536.9" y="581.85" width="7.2" height="1.1" fill="#8e8e8e"/>
<rect x="565" y="581.85" width="7.2" height="1.1" fill="#8e8e8e"/>
<rect x="536.9" y="583.95" width="7.2" height="1.1" fill="#8e8e8e"/>
<rect x="565" y="583.95" width="7.2" height="1.1" fill="#8e8e8e"/>
<rect x="582.06" y="406.5" width="2.4" height="1" fill="#939393"/>
<rect x="605.36" y="406.5" width="2.4" height="1" fill="#939393"/>
<rect x="582.06" y="410.8" width="2.4" height="1" fill="#939393"/>
<rect x="605.36" y="410.8" width="2.4" height="1" fill="#939393"/>
<rect x="582.06" y="419.37" width="2.4" height="1" fill="#939393"/>
<rect x="605.36" y="419.37" width="2.4" height="1" fill="#939393"/>
<rect x="582.06" y="423.64" width="2.4" height="1" fill="#939393"/>
<rect x="605.36" y="423.64" width="2.4" height="1" fill="#939393"/>
<rect x="582.06" y="427.91" width="2.4" height="1" fill="#939393"/>
<rect x="605.36" y="427.91" width="2.4" height="1" fill="#939393"/>
<rect x="582.06" y="432.18" width="2.4" height="1" fill="#939393"/>
<rect x="605.36" y="432.18" width="2.4" height="1" fill="#939393"/>
<rect x="582.06" y="440.72" width="2.4" height="1" fill="#939393"/>
<rect x="605.36" y="440.72" width="2.4" height="1" fill="#939393"/>
<rect x="582.06" y="444.99" width="2.4" height="1" fill="#939393"/>
<rect x="605.36" y="444.99" width="2.4" height="1" fill="#939393"/>
<rect x="582.06" y="449.26" width="2.4" height="1" fill="#939393"/>
<rect x="605.36" y="449.26" width="2.4" height="1" fill="#939393"/>
<rect x="582.06" y="453.53" width="2.4" height="1" fill="#939393"/>
<rect x="605.36" y="453.53" width="2.4" height="1" fill="#939393"/>
<rect x="582.06" y="462.07" width="2.4" height="1" fill="#939393"/>
<rect x="605.36" y="462.07" width="2.4" height="1" fill="#939393"/>
<rect x="582.06" y="466.34" width="2.4" height="1" fill="#939393"/>
<rect x="605.36" y="466.34" width="2.4" height="1" fill="#939393"/>
<rect x="582.06" y="470.61" width="2.4" height="1" fill="#939393"/>
<rect x="605.36" y="470.61" width="2.4" height="1" fill="#939393"/>
<rect x="582.06" y="474.88" width="2.4" height="1" fill="#939393"/>
<rect x="605.36" y="474.88" width="2.4" height="1" fill="#939393"/>
<rect x="582.06" y="483.42" width="2.4" height="1" fill="#939393"/>
<rect x="605.36" y="483.42" width="2.4" height="1" fill="#939393"/>
<rect x="582.06" y="487.69" width="2.4" height="1" fill="#939393"/>
<rect x="605.36" y="487.69" width="2.4" height="1" fill="#939393"/>
<rect x="582.06" y="491.96" width="2.4" height="1" fill="#939393"/>
<rect x="605.36" y="491.96" width="2.4" height="1" fill="#939393"/>
<rect x="582.06" y="496.23" width="2.4" height="1" fill="#939393"/>
<rect x="605.36" y="496.23" width="2.4" height="1" fill="#939393"/>
<rect x="580.46" y="436.4" width="4" height="1.1" fill="#8e8e8e"/>
<rect x="605.36" y="436.4" width="4" height="1.1" fill="#8e8e8e"/>
<rect x="580.46" y="479.1" width="4" height="1.1" fill="#8e8e8e"/>
<rect x="605.36" y="479.1" width="4" height="1.1" fill="#8e8e8e"/>
<rect x="580.46" y="517.45" width="4" height="1.1" fill="#8e8e8e"/>
<rect x="605.36" y="517.45" width="4" height="1.1" fill="#8e8e8e"/>
<rect x="580.46" y="546.65" width="4" height="1.1" fill="#8e8e8e"/>
<rect x="605.36" y="546.65" width="4" height="1.1" fill="#8e8e8e"/>
<rect x="580.46" y="568.45" width="4" height="1.1" fill="#8e8e8e"/>
<rect x="605.36" y="568.45" width="4" height="1.1" fill="#8e8e8e"/>
<rect x="577.26" y="402.15" width="7.2" height="1.1" fill="#8e8e8e"/>
<rect x="605.36" y="402.15" width="7.2" height="1.1" fill="#8e8e8e"/>
<rect x="577.26" y="415.05" width="7.2" height="1.1" fill="#8e8e8e"/>
<rect x="605.36" y="415.05" width="7.2" height="1.1" fill="#8e8e8e"/>
<rect x="577.26" y="457.75" width="7.2" height="1.1" fill="#8e8e8e"/>
<rect x="605.36" y="457.75" width="7.2" height="1.1" fill="#8e8e8e"/>
<rect x="577.26" y="500.45" width="7.2" height="1.1" fill="#8e8e8e"/>
<rect x="605.36" y="500.45" width="7.2" height="1.1" fill="#8e8e8e"/>
<rect x="577.26" y="534.45" width="7.2" height="1.1" fill="#8e8e8e"/>
<rect x="605.36" y="534.45" width="7.2" height="1.1" fill="#8e8e8e"/>
<rect x="577.26" y="558.85" width="7.2" height="1.1" fill="#8e8e8e"/>
<rect x="605.36" y="558.85" width="7.2" height="1.1" fill="#8e8e8e"/>
<rect x="577.26" y="575.65" width="7.2" height="1.1" fill="#8e8e8e"/>
<rect x="605.36" y="575.65" width="7.2" height="1.1" fill="#8e8e8e"/>
<rect x="577.26" y="580.95" width="7.2" height="1.1" fill="#8e8e8e"/>
<rect x="605.36" y="580.95" width="7.2" height="1.1" fill="#8e8e8e"/>
<rect x="577.26" y="581.85" width="7.2" height="1.1" fill="#8e8e8e"/>
<rect x="605.36" y="581.85" width="7.2" height="1.1" fill="#8e8e8e"/>
<rect x="577.26" y="583.95" width="7.2" height="1.1" fill="#8e8e8e"/>
<rect x="605.36" y="583.95" width="7.2" height="1.1" fill="#8e8e8e"/>
<rect x="622.42" y="406.5" width="2.4" height="1" fill="#939393"/>
<rect x="645.72" y="406.5" width="2.4" height="1" fill="#939393"/>
<rect x="622.42" y="410.8" width="2.4" height="1" fill="#939393"/>
<rect x="645.72" y="410.8" width="2.4" height="1" fill="#939393"/>
<rect x="622.42" y="419.37" width="2.4" height="1" fill="#939393"/>
<rect x="645.72" y="419.37" width="2.4" height="1" fill="#939393"/>
<rect x="622.42" y="423.64" width="2.4" height="1" fill="#939393"/>
<rect x="645.72" y="423.64" width="2.4" height="1" fill="#939393"/>
<rect x="622.42" y="427.91" width="2.4" height="1" fill="#939393"/>
<rect x="645.72" y="427.91" width="2.4" height="1" fill="#939393"/>
<rect x="622.42" y="432.18" width="2.4" height="1" fill="#939393"/>
<rect x="645.72" y="432.18" width="2.4" height="1" fill="#939393"/>
<rect x="622.42" y="440.72" width="2.4" height="1" fill="#939393"/>
<rect x="645.72" y="440.72" width="2.4" height="1" fill="#939393"/>
<rect x="622.42" y="444.99" width="2.4" height="1" fill="#939393"/>
<rect x="645.72" y="444.99" width="2.4" height="1" fill="#939393"/>
<rect x="622.42" y="449.26" width="2.4" height="1" fill="#939393"/>
<rect x="645.72" y="449.26" width="2.4" height="1" fill="#939393"/>
<rect x="622.42" y="453.53" width="2.4" height="1" fill="#939393"/>
<rect x="645.72" y="453.53" width="2.4" height="1" fill="#939393"/>
<rect x="622.42" y="462.07" width="2.4" height="1" fill="#939393"/>
<rect x="645.72" y="462.07" width="2.4" height="1" fill="#939393"/>
<rect x="622.42" y="466.34" width="2.4" height="1" fill="#939393"/>
<rect x="645.72" y="466.34" width="2.4" height="1" fill="#939393"/>
<rect x="622.42" y="470.61" width="2.4" height="1" fill="#939393"/>
<rect x="645.72" y="470.61" width="2.4" height="1" fill="#939393"/>
<rect x="622.42" y="474.88" width="2.4" height="1" fill="#939393"/>
<rect x="645.72" y="474.88" width="2.4" height="1" fill="#939393"/>
<rect x="622.42" y="483.42" width="2.4" height="1" fill="#939393"/>
<rect x="645.72" y="483.42" width="2.4" height="1" fill="#939393"/>
<rect x="622.42" y="487.69" width="2.4" height="1" fill="#939393"/>
<rect x="645.72" y="487.69" width="2.4" height="1" fill="#939393"/>
<rect x="622.42" y="491.96" width="2.4" height="1" fill="#939393"/>
<rect x="645.72" y="491.96" width="2.4" height="1" fill="#939393"/>
<rect x="622.42" y="496.23" width="2.4" height="1" fill="#939393"/>
<rect x="645.72" y="496.23" width="2.4" height="1" fill="#939393"/>
<rect x="620.82" y="436.4" width="4" height="1.1" fill="#8e8e8e"/>
<rect x="645.72" y="436.4" width="4" height="1.1" fill="#8e8e8e"/>
<rect x="620.82" y="479.1" width="4" height="1.1" fill="#8e8e8e"/>
<rect x="645.72" y="479.1" width="4" height="1.1" fill="#8e8e8e"/>
<rect x="620.82" y="517.45" width="4" height="1.1" fill="#8e8e8e"/>
<rect x="645.72" y="517.45" width="4" height="1.1" fill="#8e8e8e"/>
<rect x="620.82" y="546.65" width="4" height="1.1" fill="#8e8e8e"/>
<rect x="645.72" y="546.65" width="4" height="1.1" fill="#8e8e8e"/>
<rect x="620.82" y="568.45" width="4" height="1.1" fill="#8e8e8e"/>
<rect x="645.72" y="568.45" width="4" height="1.1" fill="#8e8e8e"/>
<rect x="617.62" y="402.15" width="7.2" height="1.1" fill="#8e8e8e"/>
<rect x="645.72" y="402.15" width="7.2" height="1.1" fill="#8e8e8e"/>
<rect x="617.62" y="415.05" width="7.2" height="1.1" fill="#8e8e8e"/>
<rect x="645.72" y="415.05" width="7.2" height="1.1" fill="#8e8e8e"/>
<rect x="617.62" y="457.75" width="7.2" height="1.1" fill="#8e8e8e"/>
<rect x="645.72" y="457.75" width="7.2" height="1.1" fill="#8e8e8e"/>
<rect x="617.62" y="500.45" width="7.2" height="1.1" fill="#8e8e8e"/>
<rect x="645.72" y="500.45" width="7.2" height="1.1" fill="#8e8e8e"/>
<rect x="617.62" y="534.45" width="7.2" height="1.1" fill="#8e8e8e"/>
<rect x="645.72" y="534.45" width="7.2" height="1.1" fill="#8e8e8e"/>
<rect x="617.62" y="558.85" width="7.2" height="1.1" fill="#8e8e8e"/>
<rect x="645.72" y="558.85" width="7.2" height="1.1" fill="#8e8e8e"/>
<rect x="617.62" y="575.65" width="7.2" height="1.1" fill="#8e8e8e"/>
<rect x="645.72" y="575.65" width="7.2" height="1.1" fill="#8e8e8e"/>
<rect x="617.62" y="580.95" width="7.2" height="1.1" fill="#8e8e8e"/>
<rect x="645.72" y="580.95" width="7.2" height="1.1" fill="#8e8e8e"/>
<rect x="617.62" y="581.85" width="7.2" height="1.1" fill="#8e8e8e"/>
<rect x="645.72" y="581.85" width="7.2" height="1.1" fill="#8e8e8e"/>
<rect x="617.62" y="583.95" width="7.2" height="1.1" fill="#8e8e8e"/>
<rect x="645.72" y="583.95" width="7.2" height="1.1" fill="#8e8e8e"/>
<rect x="662.78" y="406.5" width="2.4" height="1" fill="#939393"/>
<rect x="686.08" y="406.5" width="2.4" height="1" fill="#939393"/>
<rect x="662.78" y="410.8" width="2.4" height="1" fill="#939393"/>
<rect x="686.08" y="410.8" width="2.4" height="1" fill="#939393"/>
<rect x="662.78" y="419.37" width="2.4" height="1" fill="#939393"/>
<rect x="686.08" y="419.37" width="2.4" height="1" fill="#939393"/>
<rect x="662.78" y="423.64" width="2.4" height="1" fill="#939393"/>
<rect x="686.08" y="423.64" width="2.4" height="1" fill="#939393"/>
<rect x="662.78" y="427.91" width="2.4" height="1" fill="#939393"/>
<rect x="686.08" y="427.91" width="2.4" height="1" fill="#939393"/>
<rect x="662.78" y="432.18" width="2.4" height="1" fill="#939393"/>
<rect x="686.08" y="432.18" width="2.4" height="1" fill="#939393"/>
<rect x="662.78" y="440.72" width="2.4" height="1" fill="#939393"/>
<rect x="686.08" y="440.72" width="2.4" height="1" fill="#939393"/>
<rect x="662.78" y="444.99" width="2.4" height="1" fill="#939393"/>
<rect x="686.08" y="444.99" width="2.4" height="1" fill="#939393"/>
<rect x="662.78" y="449.26" width="2.4" height="1" fill="#939393"/>
<rect x="686.08" y="449.26" width="2.4" height="1" fill="#939393"/>
<rect x="662.78" y="453.53" width="2.4" height="1" fill="#939393"/>
<rect x="686.08" y="453.53" width="2.4" height="1" fill="#939393"/>
<rect x="662.78" y="462.07" width="2.4" height="1" fill="#939393"/>
<rect x="686.08" y="462.07" width="2.4" height="1" fill="#939393"/>
<rect x="662.78" y="466.34" width="2.4" height="1" fill="#939393"/>
<rect x="686.08" y="466.34" width="2.4" height="1" fill="#939393"/>
<rect x="662.78" y="470.61" width="2.4" height="1" fill="#939393"/>
<rect x="686.08" y="470.61" width="2.4" height="1" fill="#939393"/>
<rect x="662.78" y="474.88" width="2.4" height="1" fill="#939393"/>
<rect x="686.08" y="474.88" width="2.4" height="1" fill="#939393"/>
<rect x="662.78" y="483.42" width="2.4" height="1" fill="#939393"/>
<rect x="686.08" y="483.42" width="2.4" height="1" fill="#939393"/>
<rect x="662.78" y="487.69" width="2.4" height="1" fill="#939393"/>
<rect x="686.08" y="487.69" width="2.4" height="1" fill="#939393"/>
<rect x="662.78" y="491.96" width="2.4" height="1" fill="#939393"/>
<rect x="686.08" y="491.96" width="2.4" height="1" fill="#939393"/>
<rect x="662.78" y="496.23" width="2.4" height="1" fill="#939393"/>
<rect x="686.08" y="496.23" width="2.4" height="1" fill="#939393"/>
<rect x="661.18" y="436.4" width="4" height="1.1" fill="#8e8e8e"/>
<rect x="686.08" y="436.4" width="4" height="1.1" fill="#8e8e8e"/>
<rect x="661.18" y="479.1" width="4" height="1.1" fill="#8e8e8e"/>
<rect x="686.08" y="479.1" width="4" height="1.1" fill="#8e8e8e"/>
<rect x="661.18" y="517.45" width="4" height="1.1" fill="#8e8e8e"/>
<rect x="686.08" y="517.45" width="4" height="1.1" fill="#8e8e8e"/>
<rect x="661.18" y="546.65" width="4" height="1.1" fill="#8e8e8e"/>
<rect x="686.08" y="546.65" width="4" height="1.1" fill="#8e8e8e"/>
<rect x="661.18" y="568.45" width="4" height="1.1" fill="#8e8e8e"/>
<rect x="686.08" y="568.45" width="4" height="1.1" fill="#8e8e8e"/>
<rect x="657.98" y="402.15" width="7.2" height="1.1" fill="#8e8e8e"/>
<rect x="686.08" y="402.15" width="7.2" height="1.1" fill="#8e8e8e"/>
<rect x="657.98" y="415.05" width="7.2" height="1.1" fill="#8e8e8e"/>
<rect x="686.08" y="415.05" width="7.2" height="1.1" fill="#8e8e8e"/>
<rect x="657.98" y="457.75" width="7.2" height="1.1" fill="#8e8e8e"/>
<rect x="686.08" y="457.75" width="7.2" height="1.1" fill="#8e8e8e"/>
<rect x="657.98" y="500.45" width="7.2" height="1.1" fill="#8e8e8e"/>
<rect x="686.08" y="500.45" width="7.2" height="1.1" fill="#8e8e8e"/>
<rect x="657.98" y="534.45" width="7.2" height="1.1" fill="#8e8e8e"/>
<rect x="686.08" y="534.45" width="7.2" height="1.1" fill="#8e8e8e"/>
<rect x="657.98" y="558.85" width="7.2" height="1.1" fill="#8e8e8e"/>
<rect x="686.08" y="558.85" width="7.2" height="1.1" fill="#8e8e8e"/>
<rect x="657.98" y="575.65" width="7.2" height="1.1" fill="#8e8e8e"/>
<rect x="686.08" y="575.65" width="7.2" height="1.1" fill="#8e8e8e"/>
<rect x="657.98" y="580.95" width="7.2" height="1.1" fill="#8e8e8e"/>
<rect x="686.08" y="580.95" width="7.2" height="1.1" fill="#8e8e8e"/>
<rect x="657.98" y="581.85" width="7.2" height="1.1" fill="#8e8e8e"/>
<rect x="686.08" y="581.85" width="7.2" height="1.1" fill="#8e8e8e"/>
<rect x="657.98" y="583.95" width="7.2" height="1.1" fill="#8e8e8e"/>
<rect x="686.08" y="583.95" width="7.2" height="1.1" fill="#8e8e8e"/>
<rect x="703.14" y="406.5" width="2.4" height="1" fill="#939393"/>
<rect x="726.44" y="406.5" width="2.4" height="1" fill="#939393"/>
<rect x="703.14" y="410.8" width="2.4" height="1" fill="#939393"/>
<rect x="726.44" y="410.8" width="2.4" height="1" fill="#939393"/>
<rect x="703.14" y="419.37" width="2.4" height="1" fill="#939393"/>
<rect x="726.44" y="419.37" width="2.4" height="1" fill="#939393"/>
<rect x="703.14" y="423.64" width="2.4" height="1" fill="#939393"/>
<rect x="726.44" y="423.64" width="2.4" height="1" fill="#939393"/>
<rect x="703.14" y="427.91" width="2.4" height="1" fill="#939393"/>
<rect x="726.44" y="427.91" width="2.4" height="1" fill="#939393"/>
<rect x="703.14" y="432.18" width="2.4" height="1" fill="#939393"/>
<rect x="726.44" y="432.18" width="2.4" height="1" fill="#939393"/>
<rect x="703.14" y="440.72" width="2.4" height="1" fill="#939393"/>
<rect x="726.44" y="440.72" width="2.4" height="1" fill="#939393"/>
<rect x="703.14" y="444.99" width="2.4" height="1" fill="#939393"/>
<rect x="726.44" y="444.99" width="2.4" height="1" fill="#939393"/>
<rect x="703.14" y="449.26" width="2.4" height="1" fill="#939393"/>
<rect x="726.44" y="449.26" width="2.4" height="1" fill="#939393"/>
<rect x="703.14" y="453.53" width="2.4" height="1" fill="#939393"/>
<rect x="726.44" y="453.53" width="2.4" height="1" fill="#939393"/>
<rect x="703.14" y="462.07" width="2.4" height="1" fill="#939393"/>
<rect x="726.44" y="462.07" width="2.4" height="1" fill="#939393"/>
<rect x="703.14" y="466.34" width="2.4" height="1" fill="#939393"/>
<rect x="726.44" y="466.34" width="2.4" height="1" fill="#939393"/>
<rect x="703.14" y="470.61" width="2.4" height="1" fill="#939393"/>
<rect x="726.44" y="470.61" width="2.4" height="1" fill="#939393"/>
<rect x="703.14" y="474.88" width="2.4" height="1" fill="#939393"/>
<rect x="726.44" y="474.88" width="2.4" height="1" fill="#939393"/>
<rect x="703.14" y="483.42" width="2.4" height="1" fill="#939393"/>
<rect x="726.44" y="483.42" width="2.4" height="1" fill="#939393"/>
<rect x="703.14" y="487.69" width="2.4" height="1" fill="#939393"/>
<rect x="726.44" y="487.69" width="2.4" height="1" fill="#939393"/>
<rect x="703.14" y="491.96" width="2.4" height="1" fill="#939393"/>
<rect x="726.44" y="491.96" width="2.4" height="1" fill="#939393"/>
<rect x="703.14" y="496.23" width="2.4" height="1" fill="#939393"/>
<rect x="726.44" y="496.23" width="2.4" height="1" fill="#939393"/>
<rect x="701.54" y="436.4" width="4" height="1.1" fill="#8e8e8e"/>
<rect x="726.44" y="436.4" width="4" height="1.1" fill="#8e8e8e"/>
<rect x="701.54" y="479.1" width="4" height="1.1" fill="#8e8e8e"/>
<rect x="726.44" y="479.1" width="4" height="1.1" fill="#8e8e8e"/>
<rect x="701.54" y="517.45" width="4" height="1.1" fill="#8e8e8e"/>
<rect x="726.44" y="517.45" width="4" height="1.1" fill="#8e8e8e"/>
<rect x="701.54" y="546.65" width="4" height="1.1" fill="#8e8e8e"/>
<rect x="726.44" y="546.65" width="4" height="1.1" fill="#8e8e8e"/>
<rect x="701.54" y="568.45" width="4" height="1.1" fill="#8e8e8e"/>
<rect x="726.44" y="568.45" width="4" height="1.1" fill="#8e8e8e"/>
<rect x="698.34" y="402.15" width="7.2" height="1.1" fill="#8e8e8e"/>
<rect x="726.44" y="402.15" width="7.2" height="1.1" fill="#8e8e8e"/>
<rect x="698.34" y="415.05" width="7.2" height="1.1" fill="#8e8e8e"/>
<rect x="726.44" y="415.05" width="7.2" height="1.1" fill="#8e8e8e"/>
<rect x="698.34" y="457.75" width="7.2" height="1.1" fill="#8e8e8e"/>
<rect x="726.44" y="457.75" width="7.2" height="1.1" fill="#8e8e8e"/>
<rect x="698.34" y="500.45" width="7.2" height="1.1" fill="#8e8e8e"/>
<rect x="726.44" y="500.45" width="7.2" height="1.1" fill="#8e8e8e"/>
<rect x="698.34" y="534.45" width="7.2" height="1.1" fill="#8e8e8e"/>
<rect x="726.44" y="534.45" width="7.2" height="1.1" fill="#8e8e8e"/>
<rect x="698.34" y="558.85" width="7.2" height="1.1" fill="#8e8e8e"/>
<rect x="726.44" y="558.85" width="7.2" height="1.1" fill="#8e8e8e"/>
<rect x="698.34" y="575.65" width="7.2" height="1.1" fill="#8e8e8e"/>
<rect x="726.44" y="575.65" width="7.2" height="1.1" fill="#8e8e8e"/>
<rect x="698.34" y="580.95" width="7.2" height="1.1" fill="#8e8e8e"/>
<rect x="726.44" y="580.95" width="7.2" height="1.1" fill="#8e8e8e"/>
<rect x="698.34" y="581.85" width="7.2" height="1.1" fill="#8e8e8e"/>
<rect x="726.44" y="581.85" width="7.2" height="1.1" fill="#8e8e8e"/>
<rect x="698.34" y="583.95" width="7.2" height="1.1" fill="#8e8e8e"/>
<rect x="726.44" y="583.95" width="7.2" height="1.1" fill="#8e8e8e"/>
<rect x="743.5" y="406.5" width="2.4" height="1" fill="#939393"/>
<rect x="766.8" y="406.5" width="2.4" height="1" fill="#939393"/>
<rect x="743.5" y="410.8" width="2.4" height="1" fill="#939393"/>
<rect x="766.8" y="410.8" width="2.4" height="1" fill="#939393"/>
<rect x="743.5" y="419.37" width="2.4" height="1" fill="#939393"/>
<rect x="766.8" y="419.37" width="2.4" height="1" fill="#939393"/>
<rect x="743.5" y="423.64" width="2.4" height="1" fill="#939393"/>
<rect x="766.8" y="423.64" width="2.4" height="1" fill="#939393"/>
<rect x="743.5" y="427.91" width="2.4" height="1" fill="#939393"/>
<rect x="766.8" y="427.91" width="2.4" height="1" fill="#939393"/>
<rect x="743.5" y="432.18" width="2.4" height="1" fill="#939393"/>
<rect x="766.8" y="432.18" width="2.4" height="1" fill="#939393"/>
<rect x="743.5" y="440.72" width="2.4" height="1" fill="#939393"/>
<rect x="766.8" y="440.72" width="2.4" height="1" fill="#939393"/>
<rect x="743.5" y="444.99" width="2.4" height="1" fill="#939393"/>
<rect x="766.8" y="444.99" width="2.4" height="1" fill="#939393"/>
<rect x="743.5" y="449.26" width="2.4" height="1" fill="#939393"/>
<rect x="766.8" y="449.26" width="2.4" height="1" fill="#939393"/>
<rect x="743.5" y="453.53" width="2.4" height="1" fill="#939393"/>
<rect x="766.8" y="453.53" width="2.4" height="1" fill="#939393"/>
<rect x="743.5" y="462.07" width="2.4" height="1" fill="#939393"/>
<rect x="766.8" y="462.07" width="2.4" height="1" fill="#939393"/>
<rect x="743.5" y="466.34" width="2.4" height="1" fill="#939393"/>
<rect x="766.8" y="466.34" width="2.4" height="1" fill="#939393"/>
<rect x="743.5" y="470.61" width="2.4" height="1" fill="#939393"/>
<rect x="766.8" y="470.61" width="2.4" height="1" fill="#939393"/>
<rect x="743.5" y="474.88" width="2.4" height="1" fill="#939393"/>
<rect x="766.8" y="474.88" width="2.4" height="1" fill="#939393"/>
<rect x="743.5" y="483.42" width="2.4" height="1" fill="#939393"/>
<rect x="766.8" y="483.42" width="2.4" height="1" fill="#939393"/>
<rect x="743.5" y="487.69" width="2.4" height="1" fill="#939393"/>
<rect x="766.8" y="487.69" width="2.4" height="1" fill="#939393"/>
<rect x="743.5" y="491.96" width="2.4" height="1" fill="#939393"/>
<rect x="766.8" y="491.96" width="2.4" height="1" fill="#939393"/>
<rect x="743.5" y="496.23" width="2.4" height="1" fill="#939393"/>
<rect x="766.8" y="496.23" width="2.4" height="1" fill="#939393"/>
<rect x="741.9" y="436.4" width="4" height="1.1" fill="#8e8e8e"/>
<rect x="766.8" y="436.4" width="4" height="1.1" fill="#8e8e8e"/>
<rect x="741.9" y="479.1" width="4" height="1.1" fill="#8e8e8e"/>
<rect x="766.8" y="479.1" width="4" height="1.1" fill="#8e8e8e"/>
<rect x="741.9" y="517.45" width="4" height="1.1" fill="#8e8e8e"/>
<rect x="766.8" y="517.45" width="4" height="1.1" fill="#8e8e8e"/>
<rect x="741.9" y="546.65" width="4" height="1.1" fill="#8e8e8e"/>
<rect x="766.8" y="546.65" width="4" height="1.1" fill="#8e8e8e"/>
<rect x="741.9" y="568.45" width="4" height="1.1" fill="#8e8e8e"/>
<rect x="766.8" y="568.45" width="4" height="1.1" fill="#8e8e8e"/>
<rect x="738.7" y="402.15" width="7.2" height="1.1" fill="#8e8e8e"/>
<rect x="766.8" y="402.15" width="7.2" height="1.1" fill="#8e8e8e"/>
<rect x="738.7" y="415.05" width="7.2" height="1.1" fill="#8e8e8e"/>
<rect x="766.8" y="415.05" width="7.2" height="1.1" fill="#8e8e8e"/>
<rect x="738.7" y="457.75" width="7.2" height="1.1" fill="#8e8e8e"/>
<rect x="766.8" y="457.75" width="7.2" height="1.1" fill="#8e8e8e"/>
<rect x="738.7" y="500.45" width="7.2" height="1.1" fill="#8e8e8e"/>
<rect x="766.8" y="500.45" width="7.2" height="1.1" fill="#8e8e8e"/>
<rect x="738.7" y="534.45" width="7.2" height="1.1" fill="#8e8e8e"/>
<rect x="766.8" y="534.45" width="7.2" height="1.1" fill="#8e8e8e"/>
<rect x="738.7" y="558.85" width="7.2" height="1.1" fill="#8e8e8e"/>
<rect x="766.8" y="558.85" width="7.2" height="1.1" fill="#8e8e8e"/>
<rect x="738.7" y="575.65" width="7.2" height="1.1" fill="#8e8e8e"/>
<rect x="766.8" y="575.65" width="7.2" height="1.1" fill="#8e8e8e"/>
<rect x="738.7" y="580.95" width="7.2" height="1.1" fill="#8e8e8e"/>
<rect x="766.8" y="580.95" width="7.2" height="1.1" fill="#8e8e8e"/>
<rect x="738.7" y="581.85" width="7.2" height="1.1" fill="#8e8e8e"/>
<rect x="766.8" y="581.85" width="7.2" height="1.1" fill="#8e8e8e"/>
<rect x="738.7" y="583.95" width="7.2" height="1.1" fill="#8e8e8e"/>
<rect x="766.8" y="583.95" width="7.2" height="1.1" fill="#8e8e8e"/>
<rect x="790.9" y="406.81" width="2.4" height="1" fill="#939393"/>
<rect x="814.2" y="406.81" width="2.4" height="1" fill="#939393"/>
<rect x="790.9" y="411.41" width="2.4" height="1" fill="#939393"/>
<rect x="814.2" y="411.41" width="2.4" height="1" fill="#939393"/>
<rect x="790.9" y="416.01" width="2.4" height="1" fill="#939393"/>
<rect x="814.2" y="416.01" width="2.4" height="1" fill="#939393"/>
<rect x="790.9" y="420.62" width="2.4" height="1" fill="#939393"/>
<rect x="814.2" y="420.62" width="2.4" height="1" fill="#939393"/>
<rect x="790.9" y="429.83" width="2.4" height="1" fill="#939393"/>
<rect x="814.2" y="429.83" width="2.4" height="1" fill="#939393"/>
<rect x="790.9" y="434.44" width="2.4" height="1" fill="#939393"/>
<rect x="814.2" y="434.44" width="2.4" height="1" fill="#939393"/>
<rect x="790.9" y="439.04" width="2.4" height="1" fill="#939393"/>
<rect x="814.2" y="439.04" width="2.4" height="1" fill="#939393"/>
<rect x="790.9" y="443.64" width="2.4" height="1" fill="#939393"/>
<rect x="814.2" y="443.64" width="2.4" height="1" fill="#939393"/>
<rect x="790.9" y="452.86" width="2.4" height="1" fill="#939393"/>
<rect x="814.2" y="452.86" width="2.4" height="1" fill="#939393"/>
<rect x="790.9" y="457.46" width="2.4" height="1" fill="#939393"/>
<rect x="814.2" y="457.46" width="2.4" height="1" fill="#939393"/>
<rect x="790.9" y="462.06" width="2.4" height="1" fill="#939393"/>
<rect x="814.2" y="462.06" width="2.4" height="1" fill="#939393"/>
<rect x="790.9" y="466.67" width="2.4" height="1" fill="#939393"/>
<rect x="814.2" y="466.67" width="2.4" height="1" fill="#939393"/>
<rect x="790.9" y="475.88" width="2.4" height="1" fill="#939393"/>
<rect x="814.2" y="475.88" width="2.4" height="1" fill="#939393"/>
<rect x="790.9" y="480.49" width="2.4" height="1" fill="#939393"/>
<rect x="814.2" y="480.49" width="2.4" height="1" fill="#939393"/>
<rect x="790.9" y="485.09" width="2.4" height="1" fill="#939393"/>
<rect x="814.2" y="485.09" width="2.4" height="1" fill="#939393"/>
<rect x="790.9" y="489.7" width="2.4" height="1" fill="#939393"/>
<rect x="814.2" y="489.7" width="2.4" height="1" fill="#939393"/>
<rect x="790.9" y="497.94" width="2.4" height="1" fill="#939393"/>
<rect x="814.2" y="497.94" width="2.4" height="1" fill="#939393"/>
<rect x="790.9" y="501.58" width="2.4" height="1" fill="#939393"/>
<rect x="814.2" y="501.58" width="2.4" height="1" fill="#939393"/>
<rect x="790.9" y="505.22" width="2.4" height="1" fill="#939393"/>
<rect x="814.2" y="505.22" width="2.4" height="1" fill="#939393"/>
<rect x="790.9" y="508.86" width="2.4" height="1" fill="#939393"/>
<rect x="814.2" y="508.86" width="2.4" height="1" fill="#939393"/>
<rect x="790.9" y="516.14" width="2.4" height="1" fill="#939393"/>
<rect x="814.2" y="516.14" width="2.4" height="1" fill="#939393"/>
<rect x="790.9" y="519.78" width="2.4" height="1" fill="#939393"/>
<rect x="814.2" y="519.78" width="2.4" height="1" fill="#939393"/>
<rect x="790.9" y="523.42" width="2.4" height="1" fill="#939393"/>
<rect x="814.2" y="523.42" width="2.4" height="1" fill="#939393"/>
<rect x="790.9" y="527.06" width="2.4" height="1" fill="#939393"/>
<rect x="814.2" y="527.06" width="2.4" height="1" fill="#939393"/>
<rect x="789.3" y="425.18" width="4" height="1.1" fill="#8e8e8e"/>
<rect x="814.2" y="425.18" width="4" height="1.1" fill="#8e8e8e"/>
<rect x="789.3" y="471.22" width="4" height="1.1" fill="#8e8e8e"/>
<rect x="814.2" y="471.22" width="4" height="1.1" fill="#8e8e8e"/>
<rect x="789.3" y="512.45" width="4" height="1.1" fill="#8e8e8e"/>
<rect x="814.2" y="512.45" width="4" height="1.1" fill="#8e8e8e"/>
<rect x="789.3" y="543.7" width="4" height="1.1" fill="#8e8e8e"/>
<rect x="814.2" y="543.7" width="4" height="1.1" fill="#8e8e8e"/>
<rect x="789.3" y="567.25" width="4" height="1.1" fill="#8e8e8e"/>
<rect x="814.2" y="567.25" width="4" height="1.1" fill="#8e8e8e"/>
<rect x="786.1" y="402.15" width="7.2" height="1.1" fill="#8e8e8e"/>
<rect x="814.2" y="402.15" width="7.2" height="1.1" fill="#8e8e8e"/>
<rect x="786.1" y="448.2" width="7.2" height="1.1" fill="#8e8e8e"/>
<rect x="814.2" y="448.2" width="7.2" height="1.1" fill="#8e8e8e"/>
<rect x="786.1" y="494.25" width="7.2" height="1.1" fill="#8e8e8e"/>
<rect x="814.2" y="494.25" width="7.2" height="1.1" fill="#8e8e8e"/>
<rect x="786.1" y="530.65" width="7.2" height="1.1" fill="#8e8e8e"/>
<rect x="814.2" y="530.65" width="7.2" height="1.1" fill="#8e8e8e"/>
<rect x="786.1" y="556.75" width="7.2" height="1.1" fill="#8e8e8e"/>
<rect x="814.2" y="556.75" width="7.2" height="1.1" fill="#8e8e8e"/>
<rect x="786.1" y="574.75" width="7.2" height="1.1" fill="#8e8e8e"/>
<rect x="814.2" y="574.75" width="7.2" height="1.1" fill="#8e8e8e"/>
<rect x="786.1" y="580.95" width="7.2" height="1.1" fill="#8e8e8e"/>
<rect x="814.2" y="580.95" width="7.2" height="1.1" fill="#8e8e8e"/>
<rect x="786.1" y="581.75" width="7.2" height="1.1" fill="#8e8e8e"/>
<rect x="814.2" y="581.75" width="7.2" height="1.1" fill="#8e8e8e"/>
<rect x="786.1" y="583.85" width="7.2" height="1.1" fill="#8e8e8e"/>
<rect x="814.2" y="583.85" width="7.2" height="1.1" fill="#8e8e8e"/>
<rect x="831.2" y="406.81" width="2.4" height="1" fill="#939393"/>
<rect x="854.5" y="406.81" width="2.4" height="1" fill="#939393"/>
<rect x="831.2" y="411.41" width="2.4" height="1" fill="#939393"/>
<rect x="854.5" y="411.41" width="2.4" height="1" fill="#939393"/>
<rect x="831.2" y="416.01" width="2.4" height="1" fill="#939393"/>
<rect x="854.5" y="416.01" width="2.4" height="1" fill="#939393"/>
<rect x="831.2" y="420.62" width="2.4" height="1" fill="#939393"/>
<rect x="854.5" y="420.62" width="2.4" height="1" fill="#939393"/>
<rect x="831.2" y="429.83" width="2.4" height="1" fill="#939393"/>
<rect x="854.5" y="429.83" width="2.4" height="1" fill="#939393"/>
<rect x="831.2" y="434.44" width="2.4" height="1" fill="#939393"/>
<rect x="854.5" y="434.44" width="2.4" height="1" fill="#939393"/>
<rect x="831.2" y="439.04" width="2.4" height="1" fill="#939393"/>
<rect x="854.5" y="439.04" width="2.4" height="1" fill="#939393"/>
<rect x="831.2" y="443.64" width="2.4" height="1" fill="#939393"/>
<rect x="854.5" y="443.64" width="2.4" height="1" fill="#939393"/>
<rect x="831.2" y="452.86" width="2.4" height="1" fill="#939393"/>
<rect x="854.5" y="452.86" width="2.4" height="1" fill="#939393"/>
<rect x="831.2" y="457.46" width="2.4" height="1" fill="#939393"/>
<rect x="854.5" y="457.46" width="2.4" height="1" fill="#939393"/>
<rect x="831.2" y="462.06" width="2.4" height="1" fill="#939393"/>
<rect x="854.5" y="462.06" width="2.4" height="1" fill="#939393"/>
<rect x="831.2" y="466.67" width="2.4" height="1" fill="#939393"/>
<rect x="854.5" y="466.67" width="2.4" height="1" fill="#939393"/>
<rect x="831.2" y="475.88" width="2.4" height="1" fill="#939393"/>
<rect x="854.5" y="475.88" width="2.4" height="1" fill="#939393"/>
<rect x="831.2" y="480.49" width="2.4" height="1" fill="#939393"/>
<rect x="854.5" y="480.49" width="2.4" height="1" fill="#939393"/>
<rect x="831.2" y="485.09" width="2.4" height="1" fill="#939393"/>
<rect x="854.5" y="485.09" width="2.4" height="1" fill="#939393"/>
<rect x="831.2" y="489.7" width="2.4" height="1" fill="#939393"/>
<rect x="854.5" y="489.7" width="2.4" height="1" fill="#939393"/>
<rect x="831.2" y="497.94" width="2.4" height="1" fill="#939393"/>
<rect x="854.5" y="497.94" width="2.4" height="1" fill="#939393"/>
<rect x="831.2" y="501.58" width="2.4" height="1" fill="#939393"/>
<rect x="854.5" y="501.58" width="2.4" height="1" fill="#939393"/>
<rect x="831.2" y="505.22" width="2.4" height="1" fill="#939393"/>
<rect x="854.5" y="505.22" width="2.4" height="1" fill="#939393"/>
<rect x="831.2" y="508.86" width="2.4" height="1" fill="#939393"/>
<rect x="854.5" y="508.86" width="2.4" height="1" fill="#939393"/>
<rect x="831.2" y="516.14" width="2.4" height="1" fill="#939393"/>
<rect x="854.5" y="516.14" width="2.4" height="1" fill="#939393"/>
<rect x="831.2" y="519.78" width="2.4" height="1" fill="#939393"/>
<rect x="854.5" y="519.78" width="2.4" height="1" fill="#939393"/>
<rect x="831.2" y="523.42" width="2.4" height="1" fill="#939393"/>
<rect x="854.5" y="523.42" width="2.4" height="1" fill="#939393"/>
<rect x="831.2" y="527.06" width="2.4" height="1" fill="#939393"/>
<rect x="854.5" y="527.06" width="2.4" height="1" fill="#939393"/>
<rect x="829.6" y="425.18" width="4" height="1.1" fill="#8e8e8e"/>
<rect x="854.5" y="425.18" width="4" height="1.1" fill="#8e8e8e"/>
<rect x="829.6" y="471.22" width="4" height="1.1" fill="#8e8e8e"/>
<rect x="854.5" y="471.22" width="4" height="1.1" fill="#8e8e8e"/>
<rect x="829.6" y="512.45" width="4" height="1.1" fill="#8e8e8e"/>
<rect x="854.5" y="512.45" width="4" height="1.1" fill="#8e8e8e"/>
<rect x="829.6" y="543.7" width="4" height="1.1" fill="#8e8e8e"/>
<rect x="854.5" y="543.7" width="4" height="1.1" fill="#8e8e8e"/>
<rect x="829.6" y="567.25" width="4" height="1.1" fill="#8e8e8e"/>
<rect x="854.5" y="567.25" width="4" height="1.1" fill="#8e8e8e"/>
<rect x="826.4" y="402.15" width="7.2" height="1.1" fill="#8e8e8e"/>
<rect x="854.5" y="402.15" width="7.2" height="1.1" fill="#8e8e8e"/>
<rect x="826.4" y="448.2" width="7.2" height="1.1" fill="#8e8e8e"/>
<rect x="854.5" y="448.2" width="7.2" height="1.1" fill="#8e8e8e"/>
<rect x="826.4" y="494.25" width="7.2" height="1.1" fill="#8e8e8e"/>
<rect x="854.5" y="494.25" width="7.2" height="1.1" fill="#8e8e8e"/>
<rect x="826.4" y="530.65" width="7.2" height="1.1" fill="#8e8e8e"/>
<rect x="854.5" y="530.65" width="7.2" height="1.1" fill="#8e8e8e"/>
<rect x="826.4" y="556.75" width="7.2" height="1.1" fill="#8e8e8e"/>
<rect x="854.5" y="556.75" width="7.2" height="1.1" fill="#8e8e8e"/>
<rect x="826.4" y="574.75" width="7.2" height="1.1" fill="#8e8e8e"/>
<rect x="854.5" y="574.75" width="7.2" height="1.1" fill="#8e8e8e"/>
<rect x="826.4" y="580.95" width="7.2" height="1.1" fill="#8e8e8e"/>
<rect x="854.5" y="580.95" width="7.2" height="1.1" fill="#8e8e8e"/>
<rect x="826.4" y="581.75" width="7.2" height="1.1" fill="#8e8e8e"/>
<rect x="854.5" y="581.75" width="7.2" height="1.1" fill="#8e8e8e"/>
<rect x="826.4" y="583.85" width="7.2" height="1.1" fill="#8e8e8e"/>
<rect x="854.5" y="583.85" width="7.2" height="1.1" fill="#8e8e8e"/>
<rect x="871.5" y="406.81" width="2.4" height="1" fill="#939393"/>
<rect x="894.8" y="406.81" width="2.4" height="1" fill="#939393"/>
<rect x="871.5" y="411.41" width="2.4" height="1" fill="#939393"/>
<rect x="894.8" y="411.41" width="2.4" height="1" fill="#939393"/>
<rect x="871.5" y="416.01" width="2.4" height="1" fill="#939393"/>
<rect x="894.8" y="416.01" width="2.4" height="1" fill="#939393"/>
<rect x="871.5" y="420.62" width="2.4" height="1" fill="#939393"/>
<rect x="894.8" y="420.62" width="2.4" height="1" fill="#939393"/>
<rect x="871.5" y="429.83" width="2.4" height="1" fill="#939393"/>
<rect x="894.8" y="429.83" width="2.4" height="1" fill="#939393"/>
<rect x="871.5" y="434.44" width="2.4" height="1" fill="#939393"/>
<rect x="894.8" y="434.44" width="2.4" height="1" fill="#939393"/>
<rect x="871.5" y="439.04" width="2.4" height="1" fill="#939393"/>
<rect x="894.8" y="439.04" width="2.4" height="1" fill="#939393"/>
<rect x="871.5" y="443.64" width="2.4" height="1" fill="#939393"/>
<rect x="894.8" y="443.64" width="2.4" height="1" fill="#939393"/>
<rect x="871.5" y="452.86" width="2.4" height="1" fill="#939393"/>
<rect x="894.8" y="452.86" width="2.4" height="1" fill="#939393"/>
<rect x="871.5" y="457.46" width="2.4" height="1" fill="#939393"/>
<rect x="894.8" y="457.46" width="2.4" height="1" fill="#939393"/>
<rect x="871.5" y="462.06" width="2.4" height="1" fill="#939393"/>
<rect x="894.8" y="462.06" width="2.4" height="1" fill="#939393"/>
<rect x="871.5" y="466.67" width="2.4" height="1" fill="#939393"/>
<rect x="894.8" y="466.67" width="2.4" height="1" fill="#939393"/>
<rect x="871.5" y="475.88" width="2.4" height="1" fill="#939393"/>
<rect x="894.8" y="475.88" width="2.4" height="1" fill="#939393"/>
<rect x="871.5" y="480.49" width="2.4" height="1" fill="#939393"/>
<rect x="894.8" y="480.49" width="2.4" height="1" fill="#939393"/>
<rect x="871.5" y="485.09" width="2.4" height="1" fill="#939393"/>
<rect x="894.8" y="485.09" width="2.4" height="1" fill="#939393"/>
<rect x="871.5" y="489.7" width="2.4" height="1" fill="#939393"/>
<rect x="894.8" y="489.7" width="2.4" height="1" fill="#939393"/>
<rect x="871.5" y="497.94" width="2.4" height="1" fill="#939393"/>
<rect x="894.8" y="497.94" width="2.4" height="1" fill="#939393"/>
<rect x="871.5" y="501.58" width="2.4" height="1" fill="#939393"/>
<rect x="894.8" y="501.58" width="2.4" height="1" fill="#939393"/>
<rect x="871.5" y="505.22" width="2.4" height="1" fill="#939393"/>
<rect x="894.8" y="505.22" width="2.4" height="1" fill="#939393"/>
<rect x="871.5" y="508.86" width="2.4" height="1" fill="#939393"/>
<rect x="894.8" y="508.86" width="2.4" height="1" fill="#939393"/>
<rect x="871.5" y="516.14" width="2.4" height="1" fill="#939393"/>
<rect x="894.8" y="516.14" width="2.4" height="1" fill="#939393"/>
<rect x="871.5" y="519.78" width="2.4" height="1" fill="#939393"/>
<rect x="894.8" y="519.78" width="2.4" height="1" fill="#939393"/>
<rect x="871.5" y="523.42" width="2.4" height="1" fill="#939393"/>
<rect x="894.8" y="523.42" width="2.4" height="1" fill="#939393"/>
<rect x="871.5" y="527.06" width="2.4" height="1" fill="#939393"/>
<rect x="894.8" y="527.06" width="2.4" height="1" fill="#939393"/>
<rect x="869.9" y="425.18" width="4" height="1.1" fill="#8e8e8e"/>
<rect x="894.8" y="425.18" width="4" height="1.1" fill="#8e8e8e"/>
<rect x="869.9" y="471.22" width="4" height="1.1" fill="#8e8e8e"/>
<rect x="894.8" y="471.22" width="4" height="1.1" fill="#8e8e8e"/>
<rect x="869.9" y="512.45" width="4" height="1.1" fill="#8e8e8e"/>
<rect x="894.8" y="512.45" width="4" height="1.1" fill="#8e8e8e"/>
<rect x="869.9" y="543.7" width="4" height="1.1" fill="#8e8e8e"/>
<rect x="894.8" y="543.7" width="4" height="1.1" fill="#8e8e8e"/>
<rect x="869.9" y="567.25" width="4" height="1.1" fill="#8e8e8e"/>
<rect x="894.8" y="567.25" width="4" height="1.1" fill="#8e8e8e"/>
<rect x="866.7" y="402.15" width="7.2" height="1.1" fill="#8e8e8e"/>
<rect x="894.8" y="402.15" width="7.2" height="1.1" fill="#8e8e8e"/>
<rect x="866.7" y="448.2" width="7.2" height="1.1" fill="#8e8e8e"/>
<rect x="894.8" y="448.2" width="7.2" height="1.1" fill="#8e8e8e"/>
<rect x="866.7" y="494.25" width="7.2" height="1.1" fill="#8e8e8e"/>
<rect x="894.8" y="494.25" width="7.2" height="1.1" fill="#8e8e8e"/>
<rect x="866.7" y="530.65" width="7.2" height="1.1" fill="#8e8e8e"/>
<rect x="894.8" y="530.65" width="7.2" height="1.1" fill="#8e8e8e"/>
<rect x="866.7" y="556.75" width="7.2" height="1.1" fill="#8e8e8e"/>
<rect x="894.8" y="556.75" width="7.2" height="1.1" fill="#8e8e8e"/>
<rect x="866.7" y="574.75" width="7.2" height="1.1" fill="#8e8e8e"/>
<rect x="894.8" y="574.75" width="7.2" height="1.1" fill="#8e8e8e"/>
<rect x="866.7" y="580.95" width="7.2" height="1.1" fill="#8e8e8e"/>
<rect x="894.8" y="580.95" width="7.2" height="1.1" fill="#8e8e8e"/>
<rect x="866.7" y="581.75" width="7.2" height="1.1" fill="#8e8e8e"/>
<rect x="894.8" y="581.75" width="7.2" height="1.1" fill="#8e8e8e"/>
<rect x="866.7" y="583.85" width="7.2" height="1.1" fill="#8e8e8e"/>
<rect x="894.8" y="583.85" width="7.2" height="1.1" fill="#8e8e8e"/>
<rect x="544.1" y="399.2" width="20.9" height="185" fill="#000"/>
<rect x="584.46" y="399.2" width="20.9" height="185" fill="#000"/>
<rect x="624.82" y="399.2" width="20.9" height="185" fill="#000"/>
<rect x="665.18" y="399.2" width="20.9" height="185" fill="#000"/>
<rect x="705.54" y="399.2" width="20.9" height="185" fill="#000"/>
<rect x="745.9" y="399.2" width="20.9" height="185" fill="#000"/>
<rect x="793.3" y="399.2" width="20.9" height="185" fill="#000"/>
<rect x="833.6" y="399.2" width="20.9" height="185" fill="#000"/>
<rect x="873.9" y="399.2" width="20.9" height="185" fill="#000"/>
<rect x="544.1" y="464" width="20.9" height="2.6" fill="#ffff00"/>
<rect x="544.1" y="466.6" width="20.9" height="117.6" fill="#0cff06"/>
<rect x="545" y="470.4" width="19.1" height="4.4" rx="2.2" fill="none" stroke="#0a3a0a" stroke-width="1.1"/>
<rect x="545.1" y="418" width="18.9" height="3.6" rx="1.8" fill="#ffff00"/>
<rect x="584.46" y="462" width="20.9" height="4.6" fill="#ffff00"/>
<rect x="584.46" y="466.6" width="20.9" height="117.6" fill="#0cff06"/>
<rect x="585.36" y="470" width="19.1" height="4.4" rx="2.2" fill="none" stroke="#0a3a0a" stroke-width="1.1"/>
<rect x="585.46" y="419.4" width="18.9" height="3.6" rx="1.8" fill="#ffff00"/>
<rect x="624.82" y="462" width="20.9" height="4.6" fill="#ffff00"/>
<rect x="624.82" y="466.6" width="20.9" height="117.6" fill="#0cff06"/>
<rect x="625.72" y="470" width="19.1" height="4.4" rx="2.2" fill="none" stroke="#0a3a0a" stroke-width="1.1"/>
<rect x="625.82" y="419.4" width="18.9" height="3.6" rx="1.8" fill="#ffff00"/>
<rect x="665.18" y="462" width="20.9" height="4.6" fill="#ffff00"/>
<rect x="665.18" y="466.6" width="20.9" height="117.6" fill="#0cff06"/>
<rect x="666.08" y="470" width="19.1" height="4.4" rx="2.2" fill="none" stroke="#0a3a0a" stroke-width="1.1"/>
<rect x="666.18" y="419.4" width="18.9" height="3.6" rx="1.8" fill="#ffff00"/>
<rect x="705.54" y="462" width="20.9" height="4.6" fill="#ffff00"/>
<rect x="705.54" y="466.6" width="20.9" height="117.6" fill="#0cff06"/>
<rect x="706.44" y="470" width="19.1" height="4.4" rx="2.2" fill="none" stroke="#0a3a0a" stroke-width="1.1"/>
<rect x="706.54" y="419.4" width="18.9" height="3.6" rx="1.8" fill="#ffff00"/>
<rect x="745.9" y="462" width="20.9" height="4.6" fill="#ffff00"/>
<rect x="745.9" y="466.6" width="20.9" height="117.6" fill="#0cff06"/>
<rect x="746.8" y="470" width="19.1" height="4.4" rx="2.2" fill="none" stroke="#0a3a0a" stroke-width="1.1"/>
<rect x="746.9" y="419.4" width="18.9" height="3.6" rx="1.8" fill="#ffff00"/>
<rect x="793.3" y="431.6" width="20.9" height="17" fill="#ffff00"/>
<rect x="793.3" y="448.6" width="20.9" height="135.6" fill="#0cff06"/>
<rect x="793.6" y="431.1" width="20.3" height="4.2" rx="2.1" fill="#ffff00" stroke="#6a6200" stroke-width="1"/>
<rect x="833.6" y="437.4" width="20.9" height="11.2" fill="#ffff00"/>
<rect x="833.6" y="448.6" width="20.9" height="135.6" fill="#0cff06"/>
<rect x="833.9" y="436.7" width="20.3" height="4.2" rx="2.1" fill="#ffff00" stroke="#6a6200" stroke-width="1"/>
<text x="554.55" y="396.6" font-size="12" fill="#f2f2f2" stroke="#f2f2f2" stroke-width="0.3" text-anchor="middle">-1.1</text>
<text x="594.91" y="396.6" font-size="12" fill="#f2f2f2" stroke="#f2f2f2" stroke-width="0.3" text-anchor="middle">-1.5</text>
<text x="635.27" y="396.6" font-size="12" fill="#f2f2f2" stroke="#f2f2f2" stroke-width="0.3" text-anchor="middle">-1.5</text>
<text x="675.63" y="396.6" font-size="12" fill="#f2f2f2" stroke="#f2f2f2" stroke-width="0.3" text-anchor="middle">-1.5</text>
<text x="715.99" y="396.6" font-size="12" fill="#f2f2f2" stroke="#f2f2f2" stroke-width="0.3" text-anchor="middle">-1.5</text>
<text x="756.35" y="396.6" font-size="12" fill="#f2f2f2" stroke="#f2f2f2" stroke-width="0.3" text-anchor="middle">-1.5</text>
<text x="803.75" y="396.6" font-size="12" fill="#f2f2f2" stroke="#f2f2f2" stroke-width="0.3" text-anchor="middle">-6.8</text>
<text x="844.05" y="396.6" font-size="12" fill="#f2f2f2" stroke="#f2f2f2" stroke-width="0.3" text-anchor="middle">-8.2</text>
<text x="884.35" y="396.6" font-size="12" fill="#f2f2f2" stroke="#f2f2f2" stroke-width="0.3" text-anchor="middle">UFL</text>
<text x="532.5" y="405.77" font-size="10.8" fill="#cac7a8" stroke="#cac7a8" stroke-width="0.3" text-anchor="end">+3</text>
<text x="532.5" y="419.47" font-size="10.8" fill="#cac7a8" stroke="#cac7a8" stroke-width="0.3" text-anchor="end">0</text>
<text x="532.5" y="440.82" font-size="10.8" fill="#cac7a8" stroke="#cac7a8" stroke-width="0.3" text-anchor="end">-5</text>
<text x="532.5" y="462.17" font-size="10.8" fill="#cac7a8" stroke="#cac7a8" stroke-width="0.3" text-anchor="end">-10</text>
<text x="532.5" y="483.52" font-size="10.8" fill="#cac7a8" stroke="#cac7a8" stroke-width="0.3" text-anchor="end">-15</text>
<text x="532.5" y="504.87" font-size="10.8" fill="#cac7a8" stroke="#cac7a8" stroke-width="0.3" text-anchor="end">-20</text>
<text x="532.5" y="521.87" font-size="10.8" fill="#cac7a8" stroke="#cac7a8" stroke-width="0.3" text-anchor="end">-25</text>
<text x="532.5" y="538.87" font-size="10.8" fill="#cac7a8" stroke="#cac7a8" stroke-width="0.3" text-anchor="end">-30</text>
<text x="532.5" y="563.27" font-size="10.8" fill="#cac7a8" stroke="#cac7a8" stroke-width="0.3" text-anchor="end">-40</text>
<text x="532.5" y="580.07" font-size="10.8" fill="#cac7a8" stroke="#cac7a8" stroke-width="0.3" text-anchor="end">-50</text>
<text x="911.5" y="406.57" font-size="10.8" fill="#cac7a8" stroke="#cac7a8" stroke-width="0.3" text-anchor="start">0</text>
<text x="906" y="429.59" font-size="10.8" fill="#cac7a8" stroke="#cac7a8" stroke-width="0.3" text-anchor="start">-5</text>
<text x="906" y="452.62" font-size="10.8" fill="#cac7a8" stroke="#cac7a8" stroke-width="0.3" text-anchor="start">-10</text>
<text x="906" y="475.64" font-size="10.8" fill="#cac7a8" stroke="#cac7a8" stroke-width="0.3" text-anchor="start">-15</text>
<text x="906" y="498.67" font-size="10.8" fill="#cac7a8" stroke="#cac7a8" stroke-width="0.3" text-anchor="start">-20</text>
<text x="906" y="516.87" font-size="10.8" fill="#cac7a8" stroke="#cac7a8" stroke-width="0.3" text-anchor="start">-25</text>
<text x="906" y="535.07" font-size="10.8" fill="#cac7a8" stroke="#cac7a8" stroke-width="0.3" text-anchor="start">-30</text>
<text x="906" y="561.17" font-size="10.8" fill="#cac7a8" stroke="#cac7a8" stroke-width="0.3" text-anchor="start">-40</text>
<text x="906" y="579.17" font-size="10.8" fill="#cac7a8" stroke="#cac7a8" stroke-width="0.3" text-anchor="start">-50</text>
<text x="554.55" y="596.25" font-size="10.2" fill="#cac7a8" stroke="#cac7a8" stroke-width="0.3" text-anchor="middle">L</text>
<text x="594.91" y="596.25" font-size="10.2" fill="#cac7a8" stroke="#cac7a8" stroke-width="0.3" text-anchor="middle">R</text>
<text x="635.27" y="596.25" font-size="10.2" fill="#cac7a8" stroke="#cac7a8" stroke-width="0.3" text-anchor="middle">C</text>
<text x="675.63" y="596.25" font-size="10.2" fill="#cac7a8" stroke="#cac7a8" stroke-width="0.3" text-anchor="middle">LFE</text>
<text x="715.99" y="596.25" font-size="10.2" fill="#cac7a8" stroke="#cac7a8" stroke-width="0.3" text-anchor="middle">SL</text>
<text x="756.35" y="596.25" font-size="10.2" fill="#cac7a8" stroke="#cac7a8" stroke-width="0.3" text-anchor="middle">SR</text>
<text x="803.75" y="596.25" font-size="10.2" fill="#cac7a8" stroke="#cac7a8" stroke-width="0.3" text-anchor="middle">M</text>
<text x="844.05" y="596.25" font-size="10.2" fill="#cac7a8" stroke="#cac7a8" stroke-width="0.3" text-anchor="middle">S</text>
<text x="884.35" y="596.25" font-size="10.2" fill="#cac7a8" stroke="#cac7a8" stroke-width="0.3" text-anchor="middle">I</text>
<rect x="603.6" y="606.6" width="232" height="59.8" rx="4" fill="#8a8a8a"/>
<rect x="604.9" y="607.8" width="27.1" height="27" rx="3" fill="#222327"/>
<rect x="634.3" y="607.8" width="98.8" height="27" rx="3" fill="#222327"/>
<rect x="735.4" y="607.8" width="99" height="27" rx="3" fill="#222327"/>
<rect x="604.9" y="637.4" width="27.1" height="27.8" rx="3" fill="#222327"/>
<rect x="634.3" y="637.4" width="98.8" height="27.8" rx="3" fill="#222327"/>
<rect x="735.4" y="637.4" width="99" height="27.8" rx="3" fill="#222327"/>
<path d="M611.6 613.3L626.8 621.5L611.6 629.8Z" fill="#0ea00e"/>
<path d="M611.6 644.4L625.6 658.4M625.6 644.4L611.6 658.4" stroke="#bb0000" stroke-width="3"/>
<text x="684" y="614.78" font-size="7.2" fill="#cac7a8" stroke="#cac7a8" stroke-width="0.3" text-anchor="middle">Total Time</text>
<text x="785" y="614.78" font-size="7.2" fill="#cac7a8" stroke="#cac7a8" stroke-width="0.3" text-anchor="middle">Gated Time</text>
<text x="684" y="644.38" font-size="7.2" fill="#cac7a8" stroke="#cac7a8" stroke-width="0.3" text-anchor="middle">Program Integrated</text>
<text x="785" y="644.38" font-size="7.2" fill="#cac7a8" stroke="#cac7a8" stroke-width="0.3" text-anchor="middle">Loudness Range</text>
<text x="684" y="631.75" font-size="18.3" fill="#f2f2f2" stroke="#f2f2f2" stroke-width="0.3" text-anchor="middle">0:00:00.0</text>
<text x="785" y="631.75" font-size="18.3" fill="#f2f2f2" stroke="#f2f2f2" stroke-width="0.3" text-anchor="middle">0:00:00.0</text>
<text x="684" y="661.25" font-size="18.3" fill="#f2f2f2" stroke="#f2f2f2" stroke-width="0.3" text-anchor="middle">UFL</text>
<text x="785" y="661.25" font-size="18.3" fill="#f2f2f2" stroke="#f2f2f2" stroke-width="0.3" text-anchor="middle">0.0 LU</text>
</svg>
</body></html>
